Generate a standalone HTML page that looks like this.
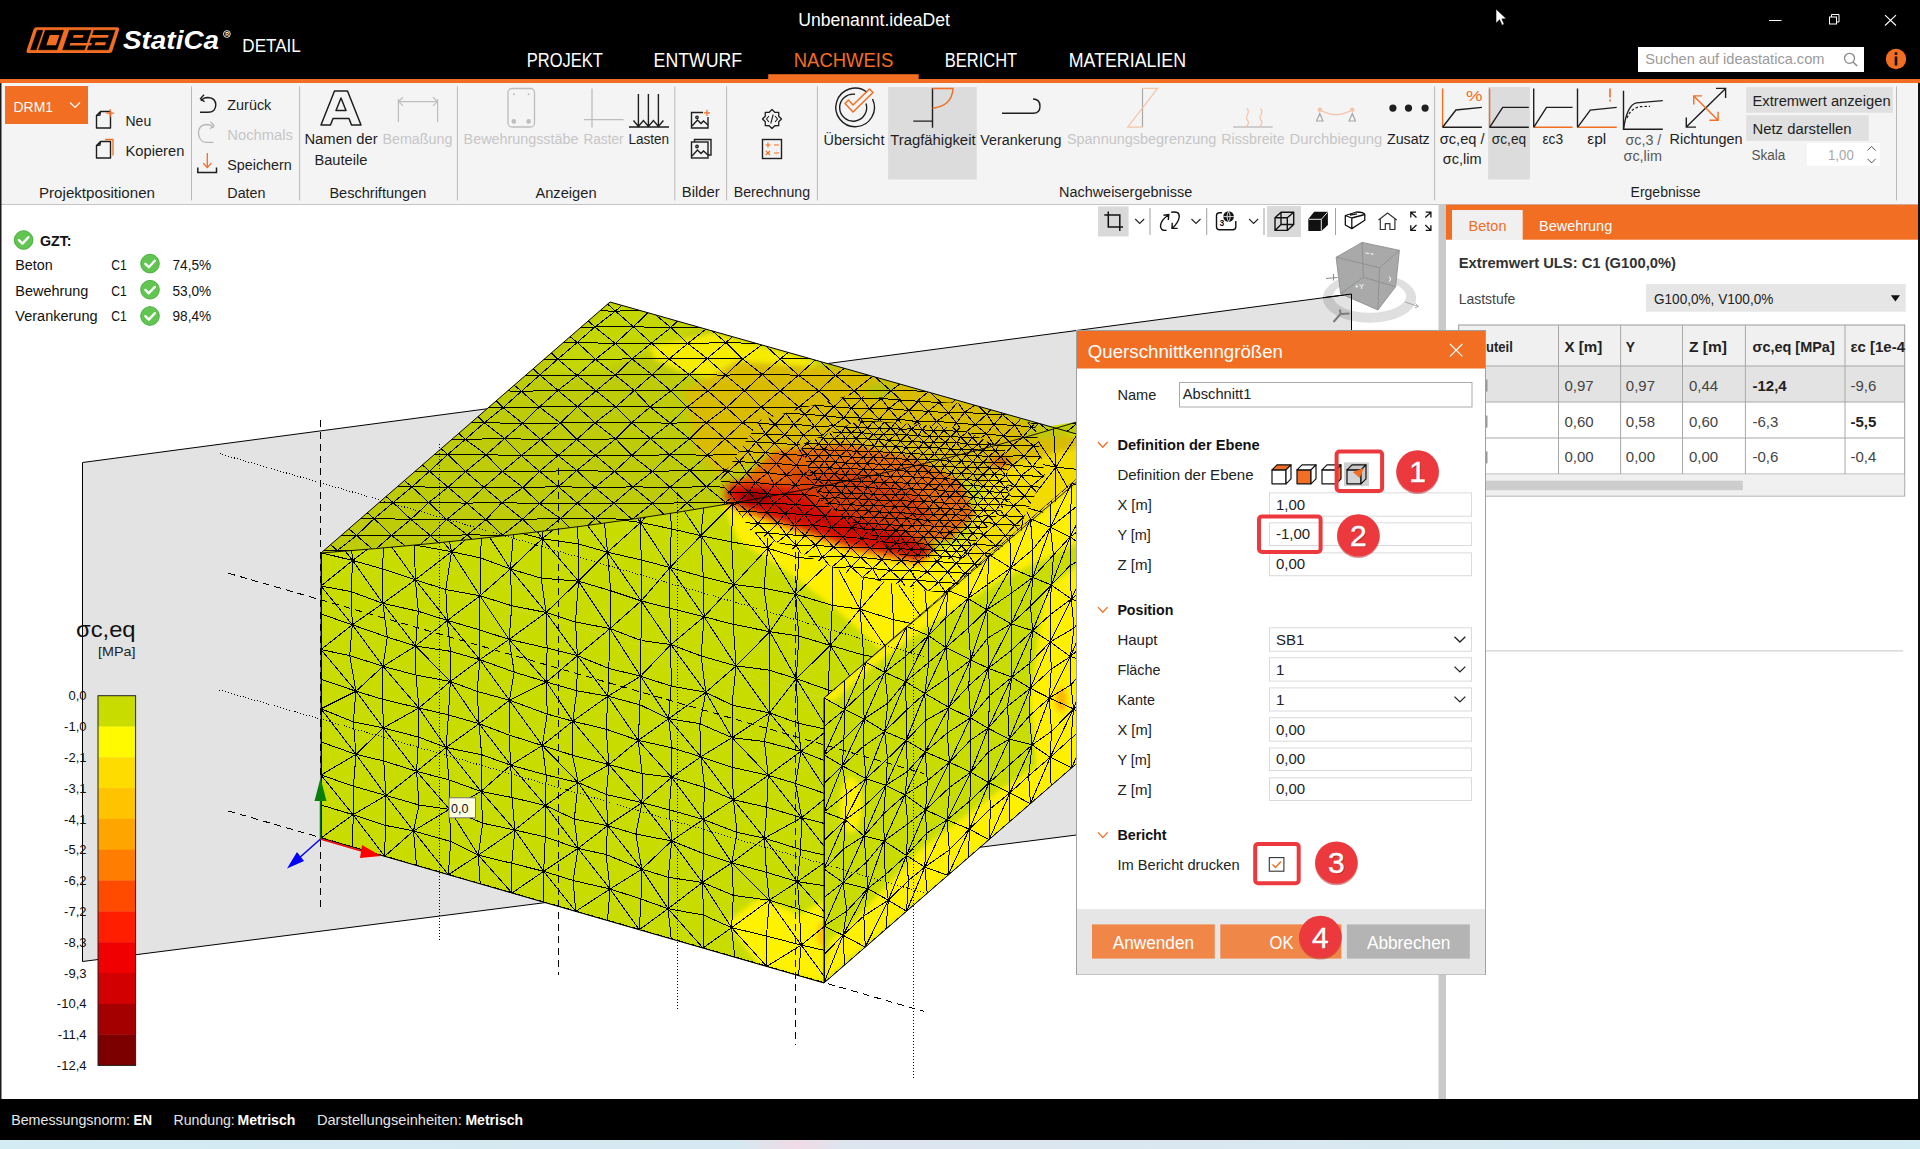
<!DOCTYPE html><html><head><meta charset="utf-8"><title>IDEA StatiCa Detail</title><style>html,body{margin:0;padding:0;width:1920px;height:1149px;overflow:hidden;background:#fff;font-family:"Liberation Sans",sans-serif}</style></head><body><svg width="1920" height="1149" viewBox="0 0 1920 1149" font-family="Liberation Sans, sans-serif" style="position:absolute;left:0;top:0;display:block"><rect x="0" y="0" width="1920" height="79" fill="#000" />
<rect x="0" y="79" width="1920" height="4" fill="#f26e22" />
<rect x="0" y="83" width="1920" height="121" fill="#f4f4f4" />
<rect x="0" y="204" width="1920" height="895" fill="#fff" />
<rect x="0" y="204" width="1920" height="1" fill="#c4c4c4" />
<rect x="0" y="1099" width="1920" height="41" fill="#000" />
<defs><linearGradient id="sb" x1="0" x2="1920" y1="0" y2="0" gradientUnits="userSpaceOnUse"><stop offset="0" stop-color="#d3ebf3"/><stop offset="0.385" stop-color="#d6e8f1"/><stop offset="0.415" stop-color="#f0dbe6"/><stop offset="0.44" stop-color="#dde5ef"/><stop offset="1" stop-color="#d3ebf3"/></linearGradient></defs>
<rect x="0" y="1140" width="1920" height="9" fill="url(#sb)" />
<path d="M37 27.2 L117 27.2 Q119.8 27.2 119 30 L112.3 51 Q111.7 52.9 109.5 52.9 L28.5 52.9 Q25.8 52.9 26.6 50.5 L33.5 29.5 Q34.2 27.2 37 27.2 Z" fill="#f26e22"/>
<path d="M37.20 30.3 L42.90 30.3 L36.31 49.8 L30.61 49.8 ZM45.20 30.3 L63.60 30.3 L57.01 49.8 L38.61 49.8 ZM69.30 30.3 L91.10 30.3 L84.51 49.8 L62.71 49.8 ZM93.90 30.3 L115.10 30.3 L108.51 49.8 L87.31 49.8 Z" fill="#000" stroke="#000" stroke-width="0.5" stroke-linejoin="round"/>
<path d="M49.80 34.9 L59.50 34.9 L56.02 45.2 L46.32 45.2 ZM73.90 34.9 L83.60 34.9 L82.62 37.8 L72.92 37.8 ZM70.40 42.9 L92.00 42.9 L91.12 45.5 L69.52 45.5 ZM90.00 34.9 L108.80 34.9 L107.82 37.8 L89.02 37.8 ZM95.60 42.3 L106.00 42.3 L105.02 45.2 L94.62 45.2 Z" fill="#f26e22"/>
<text x="123" y="49.3" font-size="26" fill="#fff" font-weight="bold" font-style="italic" textLength="96" lengthAdjust="spacingAndGlyphs">StatiCa</text>
<circle cx="226.9" cy="34" r="3.4" fill="none" stroke="#fff" stroke-width="0.9"/>
<text x="225.2" y="36.1" font-size="5.2" fill="#fff" font-weight="bold">R</text>
<text x="242.3" y="51.6" font-size="17.5" fill="#fff" textLength="58.5" lengthAdjust="spacingAndGlyphs">DETAIL</text>
<text x="798.2" y="26" font-size="17.5" fill="#fff" textLength="151.8" lengthAdjust="spacingAndGlyphs">Unbenannt.ideaDet</text>
<text x="526.8" y="67.2" font-size="20" fill="#fff" textLength="76.1" lengthAdjust="spacingAndGlyphs">PROJEKT</text>
<text x="653.6" y="67.2" font-size="20" fill="#fff" textLength="88.6" lengthAdjust="spacingAndGlyphs">ENTWURF</text>
<text x="793.75" y="67.2" font-size="20" fill="#f26e22" textLength="99.45" lengthAdjust="spacingAndGlyphs">NACHWEIS</text>
<text x="944.8" y="67.2" font-size="20" fill="#fff" textLength="72.4" lengthAdjust="spacingAndGlyphs">BERICHT</text>
<text x="1068.8" y="67.2" font-size="20" fill="#fff" textLength="117.2" lengthAdjust="spacingAndGlyphs">MATERIALIEN</text>
<rect x="768.2" y="74.2" width="150.5" height="5" fill="#f26e22" />
<line x1="1769" y1="20.5" x2="1781.5" y2="20.5" stroke="#fff" stroke-width="1" />
<rect x="1829.5" y="17" width="7" height="7" fill="none" stroke="#fff" stroke-width="1"/>
<path d="M1831.5 17 L1831.5 14.5 L1839 14.5 L1839 22 L1836.5 22" fill="none" stroke="#fff" stroke-width="1"/>
<path d="M1885 15.2 L1896 25.5 M1896 15.2 L1885 25.5" stroke="#fff" stroke-width="1.1"/>
<path d="M1496 9 L1496 23.2 L1499.6 19.7 L1502 25.2 L1504.2 24.3 L1501.9 18.9 L1506.3 18.7 Z" fill="#fff" stroke="#000" stroke-width="0.6"/>
<rect x="1638" y="47" width="226" height="25" fill="#fff" />
<text x="1645.3" y="64.4" font-size="14.5" fill="#9a9a9a" textLength="179.1" lengthAdjust="spacingAndGlyphs">Suchen auf ideastatica.com</text>
<circle cx="1849.5" cy="58.3" r="5" fill="none" stroke="#888" stroke-width="1.3"/><line x1="1853" y1="62" x2="1857.2" y2="66" stroke="#888" stroke-width="1.5"/>
<circle cx="1896" cy="59" r="10.2" fill="#f26e22"/>
<rect x="1894.7" y="56.5" width="2.6" height="9" fill="#111" />
<rect x="1894.7" y="52.3" width="2.6" height="2.6" fill="#111" />
<rect x="191.0" y="86.4" width="1" height="114" fill="#b9b9b9" />
<rect x="299.1" y="86.4" width="1" height="114" fill="#b9b9b9" />
<rect x="456.9" y="86.4" width="1" height="114" fill="#b9b9b9" />
<rect x="674.3" y="86.4" width="1" height="114" fill="#b9b9b9" />
<rect x="726.1" y="86.4" width="1" height="114" fill="#b9b9b9" />
<rect x="816.9" y="86.4" width="1" height="114" fill="#b9b9b9" />
<rect x="1434.1" y="86.4" width="1" height="114" fill="#b9b9b9" />
<rect x="1896.0" y="86.4" width="1" height="114" fill="#b9b9b9" />
<rect x="5" y="86" width="83" height="38" fill="#f26e22" />
<text x="13.5" y="111.5" font-size="15" fill="#fff" textLength="39.5" lengthAdjust="spacingAndGlyphs">DRM1</text>
<path d="M70 102.5 L75 107.5 L80 102.5" fill="none" stroke="#fff" stroke-width="1.2"/>
<path d="M96.5 128 L96.5 115.5 L100.5 111.5 L110.5 111.5 L110.5 128 Z M96.5 115.5 L100 115 L100.5 111.5" fill="none" stroke="#1e1e1e" stroke-width="1.4" stroke-linejoin="round"/>
<path d="M110.2 109.2 L110.2 117.2 M106.2 113.2 L114.2 113.2" stroke="#f26e22" stroke-width="1.3"/>
<path d="M96.5 158 L96.5 145.5 L100.5 141.5 L110.5 141.5 L110.5 158 Z M96.5 145.5 L100 145 L100.5 141.5" fill="none" stroke="#1e1e1e" stroke-width="1.4" stroke-linejoin="round"/>
<path d="M105 139.5 L113 139.5 L113 155.5" fill="none" stroke="#f26e22" stroke-width="1.3"/>
<text x="125.5" y="125.5" font-size="14" fill="#1e1e1e" textLength="25.7" lengthAdjust="spacingAndGlyphs">Neu</text>
<text x="125.5" y="155.6" font-size="14" fill="#1e1e1e" textLength="58.8" lengthAdjust="spacingAndGlyphs">Kopieren</text>
<text x="39" y="197.6" font-size="14" fill="#1e1e1e" textLength="116" lengthAdjust="spacingAndGlyphs">Projektpositionen</text>
<path d="M201 101 Q203 97.5 208 97.5 Q215.8 98 215.8 105 Q215.5 112.3 208 112.3 L200 112.3" fill="none" stroke="#1e1e1e" stroke-width="1.4"/>
<path d="M204 94.8 L200.5 98.6 L204.5 101.8" fill="none" stroke="#1e1e1e" stroke-width="1.4"/>
<path d="M213.6 128 Q211.5 124.5 206.5 124.5 Q198.5 125 198.5 133 Q199 142.3 206.5 142.3 L213.5 142.3" fill="none" stroke="#b8b8b8" stroke-width="1.3"/>
<path d="M210.5 121.8 L214 125.6 L210 128.8" fill="none" stroke="#b8b8b8" stroke-width="1.3"/>
<path d="M197.8 167.5 L197.8 172.6 L216.5 172.6 L216.5 167.5" fill="none" stroke="#1e1e1e" stroke-width="1.5"/>
<path d="M207.3 153 L207.3 167.5 M203.3 163.3 L207.3 167.6 L211.3 163.3" fill="none" stroke="#f26e22" stroke-width="1.3"/>
<text x="227.3" y="109.9" font-size="14" fill="#1e1e1e" textLength="44.0" lengthAdjust="spacingAndGlyphs">Zurück</text>
<text x="227.3" y="139.8" font-size="14" fill="#c6c6c6" textLength="65.5" lengthAdjust="spacingAndGlyphs">Nochmals</text>
<text x="227.3" y="169.8" font-size="14" fill="#1e1e1e" textLength="64.5" lengthAdjust="spacingAndGlyphs">Speichern</text>
<text x="227.3" y="197.7" font-size="14" fill="#1e1e1e" textLength="38.2" lengthAdjust="spacingAndGlyphs">Daten</text>
<path d="M334.5 91 L347.5 91 L361 125 L351.5 125 L349 118.5 L333 118.5 L330.5 125 L321 125 Z M336 110.5 L346 110.5 L341 98 Z" fill="none" stroke="#1e1e1e" stroke-width="1.5" stroke-linejoin="round"/>
<path d="M398.4 99 L398.4 122 M437.6 99 L437.6 122 M398.4 101.6 L437.6 101.6 M403 97.3 L398.6 101.6 L403 105.9 M433 97.3 L437.4 101.6 L433 105.9" fill="none" stroke="#bdbdbd" stroke-width="1.2"/>
<text x="304.4" y="144.4" font-size="14" fill="#1e1e1e" textLength="73.2" lengthAdjust="spacingAndGlyphs">Namen der</text>
<text x="314.4" y="164.6" font-size="14" fill="#1e1e1e" textLength="53.0" lengthAdjust="spacingAndGlyphs">Bauteile</text>
<text x="382.4" y="144.4" font-size="14" fill="#c6c6c6" textLength="70.0" lengthAdjust="spacingAndGlyphs">Bemaßung</text>
<text x="329.4" y="197.6" font-size="14" fill="#1e1e1e" textLength="97.0" lengthAdjust="spacingAndGlyphs">Beschriftungen</text>
<rect x="508" y="88.5" width="26.5" height="38.5" rx="4" fill="none" stroke="#bdbdbd" stroke-width="1.3"/>
<g fill="#bdbdbd"><circle cx="514" cy="94.2" r="1"/><circle cx="528.6" cy="94.2" r="1"/><circle cx="513.8" cy="121.4" r="2.3"/><circle cx="528.6" cy="121.4" r="2.3"/></g>
<path d="M592 88.5 L592 127.5 M584 119.7 L623.6 119.7" stroke="#bdbdbd" stroke-width="1.3"/>
<path d="M629 127 L669 127 M638.4 94 L638.4 126.5 M648.4 94 L648.4 126.5 M658.4 94 L658.4 126.5 M633.5 120.5 L638.4 126.5 L643.4 120.5 L648.4 126.5 L653.4 120.5 L658.4 126.5 L663.4 120.5" fill="none" stroke="#1e1e1e" stroke-width="1.4"/>
<text x="463.6" y="144.4" font-size="14" fill="#c6c6c6" textLength="114.8" lengthAdjust="spacingAndGlyphs">Bewehrungsstäbe</text>
<text x="583.4" y="144.4" font-size="14" fill="#c6c6c6" textLength="40.2" lengthAdjust="spacingAndGlyphs">Raster</text>
<text x="628.4" y="144.4" font-size="14" fill="#1e1e1e" textLength="40.8" lengthAdjust="spacingAndGlyphs">Lasten</text>
<text x="535.4" y="197.6" font-size="14" fill="#1e1e1e" textLength="61.2" lengthAdjust="spacingAndGlyphs">Anzeigen</text>
<g fill="none" stroke="#1e1e1e" stroke-width="1.4"><path d="M703 112.5 L691.5 112.5 L691.5 128 L708 128 L708 117"/><path d="M692 126 L697.5 120 L701 123.5 L703.5 121 L708 125"/><circle cx="697" cy="117.3" r="1.2"/><rect x="691.5" y="142" width="16.5" height="16" /><path d="M694.5 142 L694.5 139.5 L711 139.5 L711 155 L708 155"/><path d="M692 156 L697.5 150 L701 153.5 L703.5 151 L708 155"/><circle cx="697" cy="146.5" r="1.2"/></g>
<path d="M707 109.8 L707 116 M703.9 112.9 L710.1 112.9" stroke="#f26e22" stroke-width="1.2"/>
<text x="681.8" y="197.4" font-size="14" fill="#1e1e1e" textLength="38.0" lengthAdjust="spacingAndGlyphs">Bilder</text>
<path d="M781.50 119.00 L778.74 121.79 L778.72 125.72 L774.79 125.74 L772.00 128.50 L769.21 125.74 L765.28 125.72 L765.26 121.79 L762.50 119.00 L765.26 116.21 L765.28 112.28 L769.21 112.26 L772.00 109.50 L774.79 112.26 L778.72 112.28 L778.74 116.21 Z" fill="none" stroke="#1e1e1e" stroke-width="1.3" stroke-linejoin="round"/>
<path d="M769 116 L766.5 119 L769 122 M775 116 L777.5 119 L775 122 M773.2 114.5 L770.8 123.5" fill="none" stroke="#1e1e1e" stroke-width="1.1"/>
<rect x="762.5" y="139.5" width="19" height="19" fill="none" stroke="#1e1e1e" stroke-width="1.4"/>
<path d="M765.5 145 L770.5 145 M768 142.5 L768 147.5 M774 145 L779 145 M765.8 150.8 L770 155 M770 150.8 L765.8 155 M774 153 L779 153 M776.5 150.8 L776.5 151 M776.5 155 L776.5 155.2" fill="none" stroke="#f26e22" stroke-width="1.2"/>
<text x="733.8" y="197.4" font-size="14" fill="#1e1e1e" textLength="76.3" lengthAdjust="spacingAndGlyphs">Berechnung</text>
<rect x="888.1" y="87.1" width="88.7" height="92.4" fill="#dcdcdc" />
<path d="M872.5 99 A19.3 19.3 0 1 1 867 92.2" fill="none" stroke="#1e1e1e" stroke-width="1.4"/>
<path d="M866 103.5 A13.5 13.5 0 1 1 855 94.3" fill="none" stroke="#1e1e1e" stroke-width="1.4"/>
<path d="M845 103.5 L853 112 L873 92.5 L869.5 89 L853 105 L848.5 100 Z" fill="none" stroke="#f26e22" stroke-width="1.5" stroke-linejoin="round"/>
<path d="M932.5 88.3 L932.5 127.7 M913.3 121.1 L932.5 121.1" stroke="#1e1e1e" stroke-width="1.4"/>
<path d="M932.5 88.5 L953 88.5 Q952 106 932.5 108.3" fill="none" stroke="#f26e22" stroke-width="1.4"/>
<path d="M1002 113.3 L1033 113.3 Q1040 113.3 1040 106.2 Q1040 99 1033 99" fill="none" stroke="#1e1e1e" stroke-width="1.4"/>
<path d="M1142.5 88.4 L1142.5 127.1" stroke="#a8a8a8" stroke-width="1.2"/>
<path d="M1142.5 88.4 L1157.6 88.4 L1127.7 127.1 L1142.5 127.1" fill="none" stroke="#f5c3a6" stroke-width="1.2"/>
<path d="M1233.2 127 L1272.7 127" stroke="#a8a8a8" stroke-width="1.2"/>
<path d="M1247 108.5 Q1249.5 111 1247.5 114.5 Q1245.5 118 1248 121 Q1249.5 124 1245.5 127 M1260.5 108.5 Q1263 111 1261 114.5 Q1259 118 1261.5 121 Q1263 124 1259 127" fill="none" stroke="#f5c3a6" stroke-width="1.2"/>
<path d="M1319.8 109.7 Q1336 119.5 1352.3 109.7" fill="none" stroke="#f5c3a6" stroke-width="1.3"/>
<circle cx="1319.8" cy="109.7" r="2.2" fill="#f5c3a6"/><circle cx="1352.3" cy="109.7" r="2.2" fill="#f5c3a6"/>
<path d="M1319.8 113.5 L1316.5 121 L1323 121 Z M1352.3 113.5 L1349 121 L1355.5 121 Z" fill="none" stroke="#a8a8a8" stroke-width="1.2"/>
<g fill="#1e1e1e"><circle cx="1392.9" cy="108.1" r="3.6"/><circle cx="1408.5" cy="108.1" r="3.6"/><circle cx="1425.1" cy="108.1" r="3.6"/></g>
<text x="823.5" y="144.8" font-size="14" fill="#1e1e1e" textLength="60.9" lengthAdjust="spacingAndGlyphs">Übersicht</text>
<text x="890.2" y="144.8" font-size="14" fill="#1e1e1e" textLength="85.4" lengthAdjust="spacingAndGlyphs">Tragfähigkeit</text>
<text x="980.3" y="144.8" font-size="14" fill="#1e1e1e" textLength="81.1" lengthAdjust="spacingAndGlyphs">Verankerung</text>
<text x="1066.9" y="144.4" font-size="14" fill="#c6c6c6" textLength="149.4" lengthAdjust="spacingAndGlyphs">Spannungsbegrenzung</text>
<text x="1221.3" y="144.4" font-size="14" fill="#c6c6c6" textLength="63.3" lengthAdjust="spacingAndGlyphs">Rissbreite</text>
<text x="1289.6" y="144.4" font-size="14" fill="#c6c6c6" textLength="92.6" lengthAdjust="spacingAndGlyphs">Durchbiegung</text>
<text x="1387" y="144.4" font-size="14" fill="#1e1e1e" textLength="42.7" lengthAdjust="spacingAndGlyphs">Zusatz</text>
<text x="1059" y="197.3" font-size="14" fill="#1e1e1e" textLength="133.2" lengthAdjust="spacingAndGlyphs">Nachweisergebnisse</text>
<rect x="1488.1" y="87" width="41.8" height="92.5" fill="#dcdcdc" />
<path d="M1442.6 88.5 L1442.6 127.3" stroke="#f26e22" stroke-width="1.4"/>
<path d="M1442.6 127.3 L1481.9 127.3" stroke="#1e1e1e" stroke-width="1.4"/>
<path d="M1442.6 127.3 L1455.9 110 L1481.9 107.4" fill="none" stroke="#1e1e1e" stroke-width="1.4"/>
<text x="1466" y="101" font-size="14.5" fill="#f26e22" textLength="16.5" lengthAdjust="spacingAndGlyphs">%</text>
<path d="M1489.6 88.5 L1489.6 127.3" stroke="#f26e22" stroke-width="1.4"/>
<path d="M1489.6 127.3 L1528.8 127.3" stroke="#1e1e1e" stroke-width="1.4"/>
<path d="M1489.6 127.3 L1502.7 107.4 L1528.8 107.4" fill="none" stroke="#1e1e1e" stroke-width="1.4"/>
<path d="M1533.7 88.5 L1533.7 127.3" stroke="#1e1e1e" stroke-width="1.4"/>
<path d="M1533.7 127.3 L1572.6 127.3" stroke="#f26e22" stroke-width="1.4"/>
<path d="M1533.7 127.3 L1546.5 107.4 L1572.6 107.4" fill="none" stroke="#1e1e1e" stroke-width="1.4"/>
<path d="M1577.5 88.5 L1577.5 127.3" stroke="#1e1e1e" stroke-width="1.4"/>
<path d="M1577.5 127.3 L1616.7 127.3" stroke="#f26e22" stroke-width="1.4"/>
<path d="M1577.5 127.3 L1590.3 110.1 L1616.7 107.4" fill="none" stroke="#1e1e1e" stroke-width="1.4"/>
<path d="M1610 88.5 L1610 97.5 M1610 99.5 L1610 101.5" stroke="#f26e22" stroke-width="1.6"/>
<path d="M1623.5 90.8 L1623.5 129.3 L1662.8 129.3" fill="none" stroke="#1e1e1e" stroke-width="1.4"/>
<path d="M1623.5 129.3 Q1627 105 1636.4 102.9 L1662.8 100.6" fill="none" stroke="#1e1e1e" stroke-width="1.4"/>
<path d="M1627 118 Q1631 108 1640 106.6 L1650 106.4" fill="none" stroke="#1e1e1e" stroke-width="1.2" stroke-dasharray="2.5 2"/>
<path d="M1686.3 127.1 L1725.6 88.4 M1686.3 117.5 L1686.3 127.1 L1696 127.1 M1716 88.4 L1725.6 88.4 L1725.6 98" fill="none" stroke="#1e1e1e" stroke-width="1.4"/>
<path d="M1693.8 95.9 L1718.1 120.3 M1693.8 104.5 L1693.8 95.9 L1702 95.9 M1718.1 111.7 L1718.1 120.3 L1709.5 120.3" fill="none" stroke="#f26e22" stroke-width="1.4"/>
<text x="1439.7" y="144.4" font-size="14" fill="#1e1e1e" textLength="44.9" lengthAdjust="spacingAndGlyphs">σc,eq /</text>
<text x="1442.8" y="164" font-size="14" fill="#1e1e1e" textLength="38.8" lengthAdjust="spacingAndGlyphs">σc,lim</text>
<text x="1491.8" y="144.4" font-size="14" fill="#1e1e1e" textLength="34.3" lengthAdjust="spacingAndGlyphs">σc,eq</text>
<text x="1542.4" y="144.4" font-size="14" fill="#1e1e1e" textLength="20.7" lengthAdjust="spacingAndGlyphs">εc3</text>
<text x="1587.3" y="144.4" font-size="14" fill="#1e1e1e" textLength="18.9" lengthAdjust="spacingAndGlyphs">εpl</text>
<text x="1625.5" y="145.2" font-size="14" fill="#5a5a5a" textLength="35.8" lengthAdjust="spacingAndGlyphs">σc,3 /</text>
<text x="1623.5" y="161.3" font-size="14" fill="#5a5a5a" textLength="38.5" lengthAdjust="spacingAndGlyphs">σc,lim</text>
<text x="1669.6" y="144.4" font-size="14" fill="#1e1e1e" textLength="72.9" lengthAdjust="spacingAndGlyphs">Richtungen</text>
<rect x="1746.25" y="87.1" width="146.65" height="25.65" fill="#e0e0e0" />
<rect x="1746.25" y="115.25" width="122.5" height="25.65" fill="#e0e0e0" />
<text x="1752.5" y="106.25" font-size="14" fill="#1e1e1e" textLength="138.1" lengthAdjust="spacingAndGlyphs">Extremwert anzeigen</text>
<text x="1752.5" y="133.75" font-size="14" fill="#1e1e1e" textLength="99.0" lengthAdjust="spacingAndGlyphs">Netz darstellen</text>
<text x="1751.5" y="159.6" font-size="14" fill="#555" textLength="33.75" lengthAdjust="spacingAndGlyphs">Skala</text>
<rect x="1806.9" y="143" width="72.85" height="22.9" fill="#fff" />
<text x="1828" y="159.6" font-size="14" fill="#a8a8a8" textLength="25.75" lengthAdjust="spacingAndGlyphs">1,00</text>
<path d="M1867.5 150.5 L1871.6 146.4 L1875.7 150.5 M1867.5 158.8 L1871.6 162.9 L1875.7 158.8" fill="none" stroke="#555" stroke-width="1"/>
<text x="1630.6" y="197.3" font-size="14" fill="#1e1e1e" textLength="70.0" lengthAdjust="spacingAndGlyphs">Ergebnisse</text>
<rect x="0" y="83" width="1.5" height="1016" fill="#1a1a1a" />
<path d="M82.5 462.5 L1351.5 294 L1351.5 800 L82.5 961.5 Z" fill="#e3e3e3" stroke="#000" stroke-width="1"/>
<defs><clipPath id="cr1"><path d="M321 553 L610 302 L1080 435 L1080 421 Q760 520 321 553 Z"/></clipPath><clipPath id="cr2"><polygon points="321,553 1080,421 1080,481 824,698"/></clipPath><clipPath id="cfront"><polygon points="321,553 824,698 824,983 321,838"/></clipPath><clipPath id="cright"><polygon points="824,698 1113,447 1113,732 824,983"/></clipPath><filter id="bl" x="-5%" y="-5%" width="110%" height="110%"><feGaussianBlur stdDeviation="2.5"/></filter><filter id="bl2" x="-5%" y="-5%" width="110%" height="110%"><feGaussianBlur stdDeviation="4"/></filter></defs><polygon points="321,553 824,698 824,983 321,838" fill="#c8dc00" /><polygon points="824,698 1113,447 1113,732 824,983" fill="#c8dc00" /><polygon points="321,553 1080,421 1080,481 824,698" fill="#c8dc00" /><path d="M321 553 L610 302 L1080 435 L1080 421 Q760 520 321 553 Z" fill="#becb08"/><g clip-path="url(#cfront)"><g filter="url(#bl)"><polygon points="726,922 760,898 800,915 824,900 824,983 760,966" fill="#fff200" /><ellipse cx="822" cy="935" rx="5" ry="12" fill="#ffc000"/></g></g><g clip-path="url(#cright)"><g filter="url(#bl)"><polygon points="820,700 1085,475 1085,540 1000,580 930,625 870,668 835,700" fill="#fff000" /><polygon points="1045,590 1085,560 1085,770 1040,800 1030,700" fill="#fff000" /><polygon points="820,985 1085,760 1085,735 1000,790 920,850 850,925 830,940" fill="#fff000" /><ellipse cx="851" cy="805" rx="11" ry="28" fill="#fff000"/><ellipse cx="1061" cy="700" rx="6" ry="12" fill="#ffb400"/></g></g><defs><clipPath id="ctopall"><polygon points="321,553 610,302 1080,435 1080,481 824,698"/></clipPath></defs><g clip-path="url(#ctopall)"><g filter="url(#bl)"><polygon points="611,302 700,328 660,345 600,372 545,372" fill="#c5d700" /><polygon points="649,347 712,333 777,350 820,362 795,372 750,370 712,378 682,372 655,360" fill="#f5ec00" /><polygon points="685,390 738,361 845,369 953,397 1042,428 1085,440 1085,504 1024,511 988,490 917,458 845,443 774,451 721,476 696,451" fill="#d9bb00" /><ellipse cx="880" cy="390" rx="14" ry="8" fill="#bcc20e"/><ellipse cx="1045" cy="433" rx="22" ry="6" fill="#c0c80a"/><polygon points="721,500 810,531 917,559 1006,524 1085,474 1085,492 953,600 881,650 838,611 792,575 738,540" fill="#fff000" /><ellipse cx="990" cy="592" rx="30" ry="14" fill="#f0cc00"/><polygon points="990,470 1085,445 1085,500 1000,560 960,560" fill="#f2dc00" /><polygon points="731,490 774,451 845,443 917,458 960,480 975,515 950,540 917,540 845,518 774,504" fill="#e26a00" /></g><g filter="url(#bl2)"><polygon points="728,483 790,486 870,515 935,546 920,562 850,548 760,516 726,502" fill="#d81000" /><polygon points="780,470 860,470 915,490 935,520 900,530 820,505" fill="#d84000" /><ellipse cx="755" cy="497" rx="15" ry="7" fill="#8c0000"/><path d="M765 502 L930 553" stroke="#b80000" stroke-width="6"/><ellipse cx="1000" cy="462" rx="10" ry="4" fill="#d83000"/></g></g><defs><clipPath id="nothot1"><path clip-rule="evenodd" d="M-10 -10 H2000 V1200 H-10 Z M720 480 L760 420 L850 395 L980 405 L1035 425 L1045 475 L1010 545 L950 595 L850 575 L750 530 Z"/></clipPath><clipPath id="nothot2"><path clip-rule="evenodd" d="M-10 -10 H2000 V1200 H-10 Z M800 445 L860 420 L960 428 L1005 450 L1010 500 L985 530 L960 560 L900 555 L820 500 Z"/></clipPath><clipPath id="hot1"><polygon points="720,480 760,420 850,395 980,405 1035,425 1045,475 1010,545 950,595 850,575 750,530"/></clipPath><clipPath id="hot2"><polygon points="800,445 860,420 960,428 1005,450 1010,500 985,530 960,560 900,555 820,500"/></clipPath></defs><defs><clipPath id="cfs"><path d="M321 553 Q760 520 1080 421 L1080 481 L824 698 L824 983 L321 838 Z"/></clipPath></defs><g clip-path="url(#cfs)"><g clip-path="url(#nothot1)"><path d="M321 838 352.8 847.2M352.8 847.2 384.7 856.3M384.7 856.3 416.5 865.5M416.5 865.5 448.3 874.7M448.3 874.7 480.2 883.8M480.2 883.8 512 893M512 893 543.8 902.2M543.8 902.2 575.7 911.3M575.7 911.3 607.5 920.5M607.5 920.5 639.3 929.7M639.3 929.7 671.2 938.8M671.2 938.8 703 948M703 948 734.8 957.2M734.8 957.2 766.7 966.4M766.7 966.4 798.5 975.5M798.5 975.5 830.3 984.7M830.3 984.7 862.2 993.9M862.2 993.9 894 1003M894 1003 925.8 1012.2M925.8 1012.2 957.7 1021.4M957.7 1021.4 989.5 1030.5M989.5 1030.5 1021.3 1039.7M1021.3 1039.7 1053.2 1048.9M1053.2 1048.9 1085 1058M321 805 353.1 814.7M353.1 814.7 385.4 825.4M385.4 825.4 413.5 830.9M413.5 830.9 450.7 841.5M450.7 841.5 478.3 855.1M478.3 855.1 511.8 863.3M511.8 863.3 543.7 871.3M543.7 871.3 573.2 880.5M573.2 880.5 610.1 889M610.1 889 641 899M641 899 668.1 908.7M668.1 908.7 703.6 915.1M703.6 915.1 731.6 927.7M731.6 927.7 766.5 936M766.5 936 801.2 945.1M801.2 945.1 833.3 952.4M833.3 952.4 864.3 961.8M864.3 961.8 897 973.6M897 973.6 923 978.3M923 978.3 955.7 992.5M955.7 992.5 989.1 999.6M989.1 999.6 1019.9 1008M1019.9 1008 1052.4 1016.3M1052.4 1016.3 1085 1026.3M321 775 353.4 786.2M353.4 786.2 385.9 795.5M385.9 795.5 419 805M419 805 449.5 809.3M449.5 809.3 482.7 823.2M482.7 823.2 514.8 830M514.8 830 545.3 837M545.3 837 578 848.4M578 848.4 606 854.5M606 854.5 641.8 869.2M641.8 869.2 668.3 877.3M668.3 877.3 702.4 882.5M702.4 882.5 733.4 895.4M733.4 895.4 769.3 900.2M769.3 900.2 799.3 909.4M799.3 909.4 831.9 920.3M831.9 920.3 864.8 933.3M864.8 933.3 894 942.6M894 942.6 924.5 946.3M924.5 946.3 958.4 955.1M958.4 955.1 987.4 966.6M987.4 966.6 1022.1 974.2M1022.1 974.2 1050 987.7M1050 987.7 1085 994.6M321 742 356 754.4M356 754.4 383.8 761M383.8 761 416.6 771.3M416.6 771.3 449 779.9M449 779.9 481 791.4M481 791.4 512 797.5M512 797.5 545.4 805.5M545.4 805.5 574.3 819.1M574.3 819.1 607.6 825.7M607.6 825.7 635.9 834.1M635.9 834.1 671.7 840.9M671.7 840.9 703.8 853.7M703.8 853.7 731.8 862.8M731.8 862.8 766.4 872.3M766.4 872.3 797.5 881.7M797.5 881.7 832 886.7M832 886.7 859.1 899.8M859.1 899.8 897.2 906.4M897.2 906.4 925.5 917.6M925.5 917.6 956.4 925.4M956.4 925.4 988.2 934.6M988.2 934.6 1022 943.4M1022 943.4 1052.3 955.4M1052.3 955.4 1085 962.9M321 708.8 353.3 721.8M353.3 721.8 383.3 727.9M383.3 727.9 418.6 737.1M418.6 737.1 446.1 747.5M446.1 747.5 481.6 754.7M481.6 754.7 510.8 765.2M510.8 765.2 546.2 775M546.2 775 578.2 782.6M578.2 782.6 606.4 794.6M606.4 794.6 642 802.6M642 802.6 669.2 809.8M669.2 809.8 703.2 819.4M703.2 819.4 737 832.4M737 832.4 764.5 838.2M764.5 838.2 800.7 849.6M800.7 849.6 832.5 857M832.5 857 859.6 865.8M859.6 865.8 896.1 874.9M896.1 874.9 924.8 884.9M924.8 884.9 957.1 894M957.1 894 992.4 901.7M992.4 901.7 1017.9 915.6M1017.9 915.6 1055.8 925M1055.8 925 1085 931.2M321 679.2 356 691.2M356 691.2 382.7 699.3M382.7 699.3 418.9 708M418.9 708 448.5 714.9M448.5 714.9 479.1 723.7M479.1 723.7 509 735M509 735 542.3 745.5M542.3 745.5 572.5 755.3M572.5 755.3 608.9 764.6M608.9 764.6 642.1 773.6M642.1 773.6 671.7 777.4M671.7 777.4 704.7 787.5M704.7 787.5 733.4 799.7M733.4 799.7 766.8 807.3M766.8 807.3 801.6 817.7M801.6 817.7 829.2 824.7M829.2 824.7 864.7 835.2M864.7 835.2 896 843.6M896 843.6 923.7 853.9M923.7 853.9 959.9 860.9M959.9 860.9 991.5 874.6M991.5 874.6 1023.5 883.1M1023.5 883.1 1049.7 891.1M1049.7 891.1 1085 899.5M321 649.6 349.7 655.6M349.7 655.6 383 666.3M383 666.3 416 675.1M416 675.1 450.3 681.5M450.3 681.5 477.1 691.4M477.1 691.4 509.4 700.2M509.4 700.2 547.2 714.1M547.2 714.1 572.8 721.2M572.8 721.2 606.2 729.2M606.2 729.2 638.3 740.4M638.3 740.4 671.8 747.8M671.8 747.8 700.8 756.8M700.8 756.8 732.2 767.3M732.2 767.3 768.2 775.4M768.2 775.4 795.6 783.4M795.6 783.4 829.4 795.1M829.4 795.1 864.1 802.9M864.1 802.9 896.1 813.6M896.1 813.6 925.4 821.2M925.4 821.2 957.6 832.4M957.6 832.4 988.9 841.5M988.9 841.5 1021.1 848M1021.1 848 1053.4 859.8M1053.4 859.8 1085 867.8M321 614 352.3 624.8M352.3 624.8 387.3 637.1M387.3 637.1 415.6 646M415.6 646 450.4 651.3M450.4 651.3 479.9 659.7M479.9 659.7 514.2 672.1M514.2 672.1 546.5 682M546.5 682 576.8 690.8M576.8 690.8 607.9 696.2M607.9 696.2 639.9 704.8M639.9 704.8 668.7 718.6M668.7 718.6 699.8 723.7M699.8 723.7 732 737.6M732 737.6 764.4 741.6M764.4 741.6 800.9 751.3M800.9 751.3 832.7 763.8M832.7 763.8 864.5 774.7M864.5 774.7 894.6 782.9M894.6 782.9 922.6 791.9M922.6 791.9 957.7 800.8M957.7 800.8 986.7 810.1M986.7 810.1 1024.4 815.2M1024.4 815.2 1051.9 827.3M1051.9 827.3 1085 836.1M321 586 351 591.6M351 591.6 382.9 603.4M382.9 603.4 418.3 611.3M418.3 611.3 447.4 620.5M447.4 620.5 479.1 629.7M479.1 629.7 509.1 639.4M509.1 639.4 547.1 648.1M547.1 648.1 577.4 655.7M577.4 655.7 608.8 668.4M608.8 668.4 640.6 676.2M640.6 676.2 671.1 686.1M671.1 686.1 705.8 692.3M705.8 692.3 732 705.1M732 705.1 769.6 712.9M769.6 712.9 798.1 723.2M798.1 723.2 828.1 729.7M828.1 729.7 860.1 740.8M860.1 740.8 892.7 747.8M892.7 747.8 927.2 761.3M927.2 761.3 956.2 769M956.2 769 988.9 779M988.9 779 1021.9 784.7M1021.9 784.7 1051.2 792.4M1051.2 792.4 1085 804.4M321 552.7 352.7 560.5M352.7 560.5 382.4 568.9M382.4 568.9 415.3 579.8M415.3 579.8 445.8 589.6M445.8 589.6 480 595.8M480 595.8 511.8 605.7M511.8 605.7 546.1 612.5M546.1 612.5 575.5 622M575.5 622 610 628.6M610 628.6 641 640.5M641 640.5 670.9 644.6M670.9 644.6 701.1 656M701.1 656 736.1 665.9M736.1 665.9 769.1 670.1M769.1 670.1 796.3 678.7M796.3 678.7 828.1 689.9M828.1 689.9 864.7 699.6M864.7 699.6 892.3 707.9M892.3 707.9 924.5 713.7M924.5 713.7 959.3 720.2M959.3 720.2 986.6 733.2M986.6 733.2 1019.9 738.8M1019.9 738.8 1053.7 749.2M1053.7 749.2 1085 756.7M321 521 349.4 527.8M349.4 527.8 384.2 536.6M384.2 536.6 414.5 545M414.5 545 451.5 551.7M451.5 551.7 480.5 557.9M480.5 557.9 510.4 569M510.4 569 541.1 578.1M541.1 578.1 578.5 581.2M578.5 581.2 610.6 590.7M610.6 590.7 641.2 600.9M641.2 600.9 669.7 608.2M669.7 608.2 704.1 616.8M704.1 616.8 733.2 624.3M733.2 624.3 769.9 631.7M769.9 631.7 798.8 636.1M798.8 636.1 830.3 645.4M830.3 645.4 863.7 655.2M863.7 655.2 894.5 660M894.5 660 926.9 670.6M926.9 670.6 955.4 680M955.4 680 990.6 683.2M990.6 683.2 1024.4 691.1M1024.4 691.1 1052 702.4M1052 702.4 1085 708.9M321 489.3 353.5 496.8M353.5 496.8 385.7 503.4M385.7 503.4 415.2 508.8M415.2 508.8 445.3 519.2M445.3 519.2 481.9 525.4M481.9 525.4 513.7 531.4M513.7 531.4 542.2 538.7M542.2 538.7 578.3 543.9M578.3 543.9 607.5 552.2M607.5 552.2 641.2 560M641.2 560 670 567.5M670 567.5 703.3 576.9M703.3 576.9 733.8 584.5M733.8 584.5 764 588.2M764 588.2 795.7 594.4M795.7 594.4 832.3 605.3M832.3 605.3 860 609.2M860 609.2 893.4 619.7M893.4 619.7 928 626.9M928 626.9 958.3 630.4M958.3 630.4 988.8 637.9M988.8 637.9 1021.5 647.3M1021.5 647.3 1051.1 652.5M1051.1 652.5 1085 661.2M321 457.6 354.8 461.3M354.8 461.3 386.8 472.9M386.8 472.9 419.6 476.4M419.6 476.4 448.7 484.1M448.7 484.1 481.1 492.9M481.1 492.9 513.3 495.4M513.3 495.4 546.4 503M546.4 503 576.4 510.9M576.4 510.9 604 517.7M604 517.7 640.5 522.5M640.5 522.5 671.3 528.8M671.3 528.8 700.9 535.7M700.9 535.7 731.6 542M731.6 542 767.7 548.2M767.7 548.2 799 557.8M799 557.8 833.1 559.3M833.1 559.3 864.2 568.7M864.2 568.7 890.9 573.7M890.9 573.7 924 578.5M924 578.5 957.9 590.1M957.9 590.1 988.3 596.2M988.3 596.2 1022.7 598.3M1022.7 598.3 1055.7 607.6M1055.7 607.6 1085 613.5M321 425.9 355.8 433M355.8 433 386.3 436.6M386.3 436.6 418.6 446M418.6 446 450.9 448.8M450.9 448.8 482 454.9M482 454.9 509.3 458.1M509.3 458.1 540.9 464.9M540.9 464.9 573.3 472.5M573.3 472.5 608.9 478.6M608.9 478.6 638.8 485.1M638.8 485.1 669.8 489.8M669.8 489.8 704.8 495.2M704.8 495.2 732.6 504M732.6 504 768.2 506.7M768.2 506.7 797.6 513.5M797.6 513.5 831 517.5M831 517.5 858.7 523.2M858.7 523.2 896 528.6M896 528.6 925.6 534.8M925.6 534.8 955.6 540.4M955.6 540.4 988.8 546.2M988.8 546.2 1018 551.7M1018 551.7 1050.8 559.8M1050.8 559.8 1085 565.7M321 394.2 349.8 396.5M349.8 396.5 384.3 404M384.3 404 417.9 407M417.9 407 447.7 414.2M447.7 414.2 476.9 422.8M476.9 422.8 510 422.7M510 422.7 543.7 428.3M543.7 428.3 576.5 434.5M576.5 434.5 604.9 437.9M604.9 437.9 640.9 444.4M640.9 444.4 673.2 450.7M673.2 450.7 706 454.9M706 454.9 733.1 459.8M733.1 459.8 768.9 467.2M768.9 467.2 797.4 469.1M797.4 469.1 831.6 479.5M831.6 479.5 862.8 478.9M862.8 478.9 890.7 484.6M890.7 484.6 923.5 489.4M923.5 489.4 954.5 498.3M954.5 498.3 992.3 500.7M992.3 500.7 1024.7 507.5M1024.7 507.5 1055.3 515.3M1055.3 515.3 1085 518M321 362.5 355.9 364.2M355.9 364.2 383.3 372.1M383.3 372.1 419.6 373.5M419.6 373.5 446.9 382.6M446.9 382.6 477.5 384.3M477.5 384.3 510.8 390.5M510.8 390.5 546.8 392M546.8 392 577.3 399.8M577.3 399.8 609.8 403.2M609.8 403.2 642.3 406.6M642.3 406.6 670.6 410.2M670.6 410.2 705 416.2M705 416.2 733.2 418.9M733.2 418.9 768.2 426M768.2 426 800 429.1M800 429.1 830.2 432.2M830.2 432.2 863.6 435.9M863.6 435.9 893.8 444.8M893.8 444.8 927.1 445.4M927.1 445.4 955.8 454.3M955.8 454.3 990.5 459M990.5 459 1023.9 460.9M1023.9 460.9 1055.9 467.1M1055.9 467.1 1085 470.2M321 330.8 351.7 333.8M351.7 333.8 381.7 337.8M381.7 337.8 419.7 339.9M419.7 339.9 448.8 343.7M448.8 343.7 477.2 350.8M477.2 350.8 510.2 351M510.2 351 541.4 358.4M541.4 358.4 576.3 358.4M576.3 358.4 605.6 368M605.6 368 637.4 369.4M637.4 369.4 670.6 374.5M670.6 374.5 703.7 378.4M703.7 378.4 735.1 378.6M735.1 378.6 764.4 381.8M764.4 381.8 800.8 385.8M800.8 385.8 827 394.7M827 394.7 860.1 398.1M860.1 398.1 891.1 399.4M891.1 399.4 923.9 405.4M923.9 405.4 958.5 408.1M958.5 408.1 991.3 413.3M991.3 413.3 1020.3 415.5M1020.3 415.5 1052.8 416.3M1052.8 416.3 1085 422.5M321 299.1 355.2 302.8M355.2 302.8 386.9 303.6M386.9 303.6 416.8 308.3M416.8 308.3 449.9 309.2M449.9 309.2 479.1 314.8M479.1 314.8 509 318.3M509 318.3 545.5 320.7M545.5 320.7 576.7 324.9M576.7 324.9 605.5 326.6M605.5 326.6 642.8 329.6M642.8 329.6 670.7 331.3M670.7 331.3 701 334.9M701 334.9 737.8 341.4M737.8 341.4 769.3 346.1M769.3 346.1 799.3 349M799.3 349 830.6 349M830.6 349 865.3 355.1M865.3 355.1 897.1 355.7M897.1 355.7 927.7 358.4M927.7 358.4 961.1 364.7M961.1 364.7 988 367.9M988 367.9 1019.1 366M1019.1 366 1054.7 370.4M1054.7 370.4 1085 374.7M321 838 321 805M352.8 847.2 353.1 814.7M384.7 856.3 385.4 825.4M416.5 865.5 413.5 830.9M448.3 874.7 450.7 841.5M480.2 883.8 478.3 855.1M512 893 511.8 863.3M543.8 902.2 543.7 871.3M575.7 911.3 573.2 880.5M607.5 920.5 610.1 889M639.3 929.7 641 899M671.2 938.8 668.1 908.7M703 948 703.6 915.1M734.8 957.2 731.6 927.7M766.7 966.4 766.5 936M798.5 975.5 801.2 945.1M830.3 984.7 833.3 952.4M862.2 993.9 864.3 961.8M894 1003 897 973.6M925.8 1012.2 923 978.3M957.7 1021.4 955.7 992.5M989.5 1030.5 989.1 999.6M1021.3 1039.7 1019.9 1008M1053.2 1048.9 1052.4 1016.3M1085 1058 1085 1026.3M321 838 353.1 814.7M384.7 856.3 353.1 814.7M384.7 856.3 413.5 830.9M448.3 874.7 413.5 830.9M448.3 874.7 478.3 855.1M512 893 478.3 855.1M512 893 543.7 871.3M575.7 911.3 543.7 871.3M575.7 911.3 610.1 889M639.3 929.7 610.1 889M639.3 929.7 668.1 908.7M703 948 668.1 908.7M703 948 731.6 927.7M766.7 966.4 731.6 927.7M766.7 966.4 801.2 945.1M830.3 984.7 801.2 945.1M830.3 984.7 864.3 961.8M894 1003 864.3 961.8M894 1003 923 978.3M957.7 1021.4 923 978.3M957.7 1021.4 989.1 999.6M1021.3 1039.7 989.1 999.6M1021.3 1039.7 1052.4 1016.3M1085 1058 1052.4 1016.3M321 805 321 775M353.1 814.7 353.4 786.2M385.4 825.4 385.9 795.5M413.5 830.9 419 805M450.7 841.5 449.5 809.3M478.3 855.1 482.7 823.2M511.8 863.3 514.8 830M543.7 871.3 545.3 837M573.2 880.5 578 848.4M610.1 889 606 854.5M641 899 641.8 869.2M668.1 908.7 668.3 877.3M703.6 915.1 702.4 882.5M731.6 927.7 733.4 895.4M766.5 936 769.3 900.2M801.2 945.1 799.3 909.4M833.3 952.4 831.9 920.3M864.3 961.8 864.8 933.3M897 973.6 894 942.6M923 978.3 924.5 946.3M955.7 992.5 958.4 955.1M989.1 999.6 987.4 966.6M1019.9 1008 1022.1 974.2M1052.4 1016.3 1050 987.7M1085 1026.3 1085 994.6M353.1 814.7 321 775M353.1 814.7 385.9 795.5M413.5 830.9 385.9 795.5M413.5 830.9 449.5 809.3M478.3 855.1 449.5 809.3M478.3 855.1 514.8 830M543.7 871.3 514.8 830M543.7 871.3 578 848.4M610.1 889 578 848.4M610.1 889 641.8 869.2M668.1 908.7 641.8 869.2M668.1 908.7 702.4 882.5M731.6 927.7 702.4 882.5M731.6 927.7 769.3 900.2M801.2 945.1 769.3 900.2M801.2 945.1 831.9 920.3M864.3 961.8 831.9 920.3M864.3 961.8 894 942.6M923 978.3 894 942.6M923 978.3 958.4 955.1M989.1 999.6 958.4 955.1M989.1 999.6 1022.1 974.2M1052.4 1016.3 1022.1 974.2M1052.4 1016.3 1085 994.6M321 775 321 742M353.4 786.2 356 754.4M385.9 795.5 383.8 761M419 805 416.6 771.3M449.5 809.3 449 779.9M482.7 823.2 481 791.4M514.8 830 512 797.5M545.3 837 545.4 805.5M578 848.4 574.3 819.1M606 854.5 607.6 825.7M641.8 869.2 635.9 834.1M668.3 877.3 671.7 840.9M702.4 882.5 703.8 853.7M733.4 895.4 731.8 862.8M769.3 900.2 766.4 872.3M799.3 909.4 797.5 881.7M831.9 920.3 832 886.7M864.8 933.3 859.1 899.8M894 942.6 897.2 906.4M924.5 946.3 925.5 917.6M958.4 955.1 956.4 925.4M987.4 966.6 988.2 934.6M1022.1 974.2 1022 943.4M1050 987.7 1052.3 955.4M1085 994.6 1085 962.9M321 775 356 754.4M385.9 795.5 356 754.4M385.9 795.5 416.6 771.3M449.5 809.3 416.6 771.3M449.5 809.3 481 791.4M514.8 830 481 791.4M514.8 830 545.4 805.5M578 848.4 545.4 805.5M578 848.4 607.6 825.7M641.8 869.2 607.6 825.7M641.8 869.2 671.7 840.9M702.4 882.5 671.7 840.9M702.4 882.5 731.8 862.8M769.3 900.2 731.8 862.8M769.3 900.2 797.5 881.7M831.9 920.3 797.5 881.7M831.9 920.3 859.1 899.8M894 942.6 859.1 899.8M894 942.6 925.5 917.6M958.4 955.1 925.5 917.6M958.4 955.1 988.2 934.6M1022.1 974.2 988.2 934.6M1022.1 974.2 1052.3 955.4M1085 994.6 1052.3 955.4M321 742 321 708.8M356 754.4 353.3 721.8M383.8 761 383.3 727.9M416.6 771.3 418.6 737.1M449 779.9 446.1 747.5M481 791.4 481.6 754.7M512 797.5 510.8 765.2M545.4 805.5 546.2 775M574.3 819.1 578.2 782.6M607.6 825.7 606.4 794.6M635.9 834.1 642 802.6M671.7 840.9 669.2 809.8M703.8 853.7 703.2 819.4M731.8 862.8 737 832.4M766.4 872.3 764.5 838.2M797.5 881.7 800.7 849.6M832 886.7 832.5 857M859.1 899.8 859.6 865.8M897.2 906.4 896.1 874.9M925.5 917.6 924.8 884.9M956.4 925.4 957.1 894M988.2 934.6 992.4 901.7M1022 943.4 1017.9 915.6M1052.3 955.4 1055.8 925M1085 962.9 1085 931.2M356 754.4 321 708.8M356 754.4 383.3 727.9M416.6 771.3 383.3 727.9M416.6 771.3 446.1 747.5M481 791.4 446.1 747.5M481 791.4 510.8 765.2M545.4 805.5 510.8 765.2M545.4 805.5 578.2 782.6M607.6 825.7 578.2 782.6M607.6 825.7 642 802.6M671.7 840.9 642 802.6M671.7 840.9 703.2 819.4M731.8 862.8 703.2 819.4M731.8 862.8 764.5 838.2M797.5 881.7 764.5 838.2M797.5 881.7 832.5 857M859.1 899.8 832.5 857M859.1 899.8 896.1 874.9M925.5 917.6 896.1 874.9M925.5 917.6 957.1 894M988.2 934.6 957.1 894M988.2 934.6 1017.9 915.6M1052.3 955.4 1017.9 915.6M1052.3 955.4 1085 931.2M321 708.8 321 679.2M353.3 721.8 356 691.2M383.3 727.9 382.7 699.3M418.6 737.1 418.9 708M446.1 747.5 448.5 714.9M481.6 754.7 479.1 723.7M510.8 765.2 509 735M546.2 775 542.3 745.5M578.2 782.6 572.5 755.3M606.4 794.6 608.9 764.6M642 802.6 642.1 773.6M669.2 809.8 671.7 777.4M703.2 819.4 704.7 787.5M737 832.4 733.4 799.7M764.5 838.2 766.8 807.3M800.7 849.6 801.6 817.7M832.5 857 829.2 824.7M859.6 865.8 864.7 835.2M896.1 874.9 896 843.6M924.8 884.9 923.7 853.9M957.1 894 959.9 860.9M992.4 901.7 991.5 874.6M1017.9 915.6 1023.5 883.1M1055.8 925 1049.7 891.1M1085 931.2 1085 899.5M321 708.8 356 691.2M383.3 727.9 356 691.2M383.3 727.9 418.9 708M446.1 747.5 418.9 708M446.1 747.5 479.1 723.7M510.8 765.2 479.1 723.7M510.8 765.2 542.3 745.5M578.2 782.6 542.3 745.5M578.2 782.6 608.9 764.6M642 802.6 608.9 764.6M642 802.6 671.7 777.4M703.2 819.4 671.7 777.4M703.2 819.4 733.4 799.7M764.5 838.2 733.4 799.7M764.5 838.2 801.6 817.7M832.5 857 801.6 817.7M832.5 857 864.7 835.2M896.1 874.9 864.7 835.2M896.1 874.9 923.7 853.9M957.1 894 923.7 853.9M957.1 894 991.5 874.6M1017.9 915.6 991.5 874.6M1017.9 915.6 1049.7 891.1M1085 931.2 1049.7 891.1M321 679.2 321 649.6M356 691.2 349.7 655.6M382.7 699.3 383 666.3M418.9 708 416 675.1M448.5 714.9 450.3 681.5M479.1 723.7 477.1 691.4M509 735 509.4 700.2M542.3 745.5 547.2 714.1M572.5 755.3 572.8 721.2M608.9 764.6 606.2 729.2M642.1 773.6 638.3 740.4M671.7 777.4 671.8 747.8M704.7 787.5 700.8 756.8M733.4 799.7 732.2 767.3M766.8 807.3 768.2 775.4M801.6 817.7 795.6 783.4M829.2 824.7 829.4 795.1M864.7 835.2 864.1 802.9M896 843.6 896.1 813.6M923.7 853.9 925.4 821.2M959.9 860.9 957.6 832.4M991.5 874.6 988.9 841.5M1023.5 883.1 1021.1 848M1049.7 891.1 1053.4 859.8M1085 899.5 1085 867.8M356 691.2 321 649.6M356 691.2 383 666.3M418.9 708 383 666.3M418.9 708 450.3 681.5M479.1 723.7 450.3 681.5M479.1 723.7 509.4 700.2M542.3 745.5 509.4 700.2M542.3 745.5 572.8 721.2M608.9 764.6 572.8 721.2M608.9 764.6 638.3 740.4M671.7 777.4 638.3 740.4M671.7 777.4 700.8 756.8M733.4 799.7 700.8 756.8M733.4 799.7 768.2 775.4M801.6 817.7 768.2 775.4M801.6 817.7 829.4 795.1M864.7 835.2 829.4 795.1M864.7 835.2 896.1 813.6M923.7 853.9 896.1 813.6M923.7 853.9 957.6 832.4M991.5 874.6 957.6 832.4M991.5 874.6 1021.1 848M1049.7 891.1 1021.1 848M1049.7 891.1 1085 867.8M321 649.6 321 614M349.7 655.6 352.3 624.8M383 666.3 387.3 637.1M416 675.1 415.6 646M450.3 681.5 450.4 651.3M477.1 691.4 479.9 659.7M509.4 700.2 514.2 672.1M547.2 714.1 546.5 682M572.8 721.2 576.8 690.8M606.2 729.2 607.9 696.2M638.3 740.4 639.9 704.8M671.8 747.8 668.7 718.6M700.8 756.8 699.8 723.7M732.2 767.3 732 737.6M768.2 775.4 764.4 741.6M795.6 783.4 800.9 751.3M829.4 795.1 832.7 763.8M864.1 802.9 864.5 774.7M896.1 813.6 894.6 782.9M925.4 821.2 922.6 791.9M957.6 832.4 957.7 800.8M988.9 841.5 986.7 810.1M1021.1 848 1024.4 815.2M1053.4 859.8 1051.9 827.3M1085 867.8 1085 836.1M321 649.6 352.3 624.8M383 666.3 352.3 624.8M383 666.3 415.6 646M450.3 681.5 415.6 646M450.3 681.5 479.9 659.7M509.4 700.2 479.9 659.7M509.4 700.2 546.5 682M572.8 721.2 546.5 682M572.8 721.2 607.9 696.2M638.3 740.4 607.9 696.2M638.3 740.4 668.7 718.6M700.8 756.8 668.7 718.6M700.8 756.8 732 737.6M768.2 775.4 732 737.6M768.2 775.4 800.9 751.3M829.4 795.1 800.9 751.3M829.4 795.1 864.5 774.7M896.1 813.6 864.5 774.7M896.1 813.6 922.6 791.9M957.6 832.4 922.6 791.9M957.6 832.4 986.7 810.1M1021.1 848 986.7 810.1M1021.1 848 1051.9 827.3M1085 867.8 1051.9 827.3M321 614 321 586M352.3 624.8 351 591.6M387.3 637.1 382.9 603.4M415.6 646 418.3 611.3M450.4 651.3 447.4 620.5M479.9 659.7 479.1 629.7M514.2 672.1 509.1 639.4M546.5 682 547.1 648.1M576.8 690.8 577.4 655.7M607.9 696.2 608.8 668.4M639.9 704.8 640.6 676.2M668.7 718.6 671.1 686.1M699.8 723.7 705.8 692.3M732 737.6 732 705.1M764.4 741.6 769.6 712.9M800.9 751.3 798.1 723.2M832.7 763.8 828.1 729.7M864.5 774.7 860.1 740.8M894.6 782.9 892.7 747.8M922.6 791.9 927.2 761.3M957.7 800.8 956.2 769M986.7 810.1 988.9 779M1024.4 815.2 1021.9 784.7M1051.9 827.3 1051.2 792.4M1085 836.1 1085 804.4M352.3 624.8 321 586M352.3 624.8 382.9 603.4M415.6 646 382.9 603.4M415.6 646 447.4 620.5M479.9 659.7 447.4 620.5M479.9 659.7 509.1 639.4M546.5 682 509.1 639.4M546.5 682 577.4 655.7M607.9 696.2 577.4 655.7M607.9 696.2 640.6 676.2M668.7 718.6 640.6 676.2M668.7 718.6 705.8 692.3M732 737.6 705.8 692.3M732 737.6 769.6 712.9M800.9 751.3 769.6 712.9M800.9 751.3 828.1 729.7M864.5 774.7 828.1 729.7M864.5 774.7 892.7 747.8M922.6 791.9 892.7 747.8M922.6 791.9 956.2 769M986.7 810.1 956.2 769M986.7 810.1 1021.9 784.7M1051.9 827.3 1021.9 784.7M1051.9 827.3 1085 804.4M321 586 321 552.7M351 591.6 352.7 560.5M382.9 603.4 382.4 568.9M418.3 611.3 415.3 579.8M447.4 620.5 445.8 589.6M479.1 629.7 480 595.8M509.1 639.4 511.8 605.7M547.1 648.1 546.1 612.5M577.4 655.7 575.5 622M608.8 668.4 610 628.6M640.6 676.2 641 640.5M671.1 686.1 670.9 644.6M705.8 692.3 701.1 656M732 705.1 736.1 665.9M769.6 712.9 769.1 670.1M798.1 723.2 796.3 678.7M828.1 729.7 828.1 689.9M860.1 740.8 864.7 699.6M892.7 747.8 892.3 707.9M927.2 761.3 924.5 713.7M956.2 769 959.3 720.2M988.9 779 986.6 733.2M1021.9 784.7 1019.9 738.8M1051.2 792.4 1053.7 749.2M1085 804.4 1085 756.7M321 586 352.7 560.5M382.9 603.4 352.7 560.5M382.9 603.4 415.3 579.8M447.4 620.5 415.3 579.8M447.4 620.5 480 595.8M509.1 639.4 480 595.8M509.1 639.4 546.1 612.5M577.4 655.7 546.1 612.5M577.4 655.7 610 628.6M640.6 676.2 610 628.6M640.6 676.2 670.9 644.6M705.8 692.3 670.9 644.6M705.8 692.3 736.1 665.9M769.6 712.9 736.1 665.9M769.6 712.9 796.3 678.7M828.1 729.7 796.3 678.7M828.1 729.7 864.7 699.6M892.7 747.8 864.7 699.6M892.7 747.8 924.5 713.7M956.2 769 924.5 713.7M956.2 769 986.6 733.2M1021.9 784.7 986.6 733.2M1021.9 784.7 1053.7 749.2M1085 804.4 1053.7 749.2M321 552.7 321 521M352.7 560.5 349.4 527.8M382.4 568.9 384.2 536.6M415.3 579.8 414.5 545M445.8 589.6 451.5 551.7M480 595.8 480.5 557.9M511.8 605.7 510.4 569M546.1 612.5 541.1 578.1M575.5 622 578.5 581.2M610 628.6 610.6 590.7M641 640.5 641.2 600.9M670.9 644.6 669.7 608.2M701.1 656 704.1 616.8M736.1 665.9 733.2 624.3M769.1 670.1 769.9 631.7M796.3 678.7 798.8 636.1M828.1 689.9 830.3 645.4M864.7 699.6 863.7 655.2M892.3 707.9 894.5 660M924.5 713.7 926.9 670.6M959.3 720.2 955.4 680M986.6 733.2 990.6 683.2M1019.9 738.8 1024.4 691.1M1053.7 749.2 1052 702.4M1085 756.7 1085 708.9M352.7 560.5 321 521M352.7 560.5 384.2 536.6M415.3 579.8 384.2 536.6M415.3 579.8 451.5 551.7M480 595.8 451.5 551.7M480 595.8 510.4 569M546.1 612.5 510.4 569M546.1 612.5 578.5 581.2M610 628.6 578.5 581.2M610 628.6 641.2 600.9M670.9 644.6 641.2 600.9M670.9 644.6 704.1 616.8M736.1 665.9 704.1 616.8M736.1 665.9 769.9 631.7M796.3 678.7 769.9 631.7M796.3 678.7 830.3 645.4M864.7 699.6 830.3 645.4M864.7 699.6 894.5 660M924.5 713.7 894.5 660M924.5 713.7 955.4 680M986.6 733.2 955.4 680M986.6 733.2 1024.4 691.1M1053.7 749.2 1024.4 691.1M1053.7 749.2 1085 708.9M321 521 321 489.3M349.4 527.8 353.5 496.8M384.2 536.6 385.7 503.4M414.5 545 415.2 508.8M451.5 551.7 445.3 519.2M480.5 557.9 481.9 525.4M510.4 569 513.7 531.4M541.1 578.1 542.2 538.7M578.5 581.2 578.3 543.9M610.6 590.7 607.5 552.2M641.2 600.9 641.2 560M669.7 608.2 670 567.5M704.1 616.8 703.3 576.9M733.2 624.3 733.8 584.5M769.9 631.7 764 588.2M798.8 636.1 795.7 594.4M830.3 645.4 832.3 605.3M863.7 655.2 860 609.2M894.5 660 893.4 619.7M926.9 670.6 928 626.9M955.4 680 958.3 630.4M990.6 683.2 988.8 637.9M1024.4 691.1 1021.5 647.3M1052 702.4 1051.1 652.5M1085 708.9 1085 661.2M321 521 353.5 496.8M384.2 536.6 353.5 496.8M384.2 536.6 415.2 508.8M451.5 551.7 415.2 508.8M451.5 551.7 481.9 525.4M510.4 569 481.9 525.4M510.4 569 542.2 538.7M578.5 581.2 542.2 538.7M578.5 581.2 607.5 552.2M641.2 600.9 607.5 552.2M641.2 600.9 670 567.5M704.1 616.8 670 567.5M704.1 616.8 733.8 584.5M769.9 631.7 733.8 584.5M769.9 631.7 795.7 594.4M830.3 645.4 795.7 594.4M830.3 645.4 860 609.2M894.5 660 860 609.2M894.5 660 928 626.9M955.4 680 928 626.9M955.4 680 988.8 637.9M1024.4 691.1 988.8 637.9M1024.4 691.1 1051.1 652.5M1085 708.9 1051.1 652.5M321 489.3 321 457.6M353.5 496.8 354.8 461.3M385.7 503.4 386.8 472.9M415.2 508.8 419.6 476.4M445.3 519.2 448.7 484.1M481.9 525.4 481.1 492.9M513.7 531.4 513.3 495.4M542.2 538.7 546.4 503M578.3 543.9 576.4 510.9M607.5 552.2 604 517.7M641.2 560 640.5 522.5M670 567.5 671.3 528.8M703.3 576.9 700.9 535.7M733.8 584.5 731.6 542M764 588.2 767.7 548.2M795.7 594.4 799 557.8M832.3 605.3 833.1 559.3M860 609.2 864.2 568.7M893.4 619.7 890.9 573.7M928 626.9 924 578.5M958.3 630.4 957.9 590.1M988.8 637.9 988.3 596.2M1021.5 647.3 1022.7 598.3M1051.1 652.5 1055.7 607.6M1085 661.2 1085 613.5M353.5 496.8 321 457.6M353.5 496.8 386.8 472.9M415.2 508.8 386.8 472.9M415.2 508.8 448.7 484.1M481.9 525.4 448.7 484.1M481.9 525.4 513.3 495.4M542.2 538.7 513.3 495.4M542.2 538.7 576.4 510.9M607.5 552.2 576.4 510.9M607.5 552.2 640.5 522.5M670 567.5 640.5 522.5M670 567.5 700.9 535.7M733.8 584.5 700.9 535.7M733.8 584.5 767.7 548.2M795.7 594.4 767.7 548.2M795.7 594.4 833.1 559.3M860 609.2 833.1 559.3M860 609.2 890.9 573.7M928 626.9 890.9 573.7M928 626.9 957.9 590.1M988.8 637.9 957.9 590.1M988.8 637.9 1022.7 598.3M1051.1 652.5 1022.7 598.3M1051.1 652.5 1085 613.5M321 457.6 321 425.9M354.8 461.3 355.8 433M386.8 472.9 386.3 436.6M419.6 476.4 418.6 446M448.7 484.1 450.9 448.8M481.1 492.9 482 454.9M513.3 495.4 509.3 458.1M546.4 503 540.9 464.9M576.4 510.9 573.3 472.5M604 517.7 608.9 478.6M640.5 522.5 638.8 485.1M671.3 528.8 669.8 489.8M700.9 535.7 704.8 495.2M731.6 542 732.6 504M767.7 548.2 768.2 506.7M799 557.8 797.6 513.5M833.1 559.3 831 517.5M864.2 568.7 858.7 523.2M890.9 573.7 896 528.6M924 578.5 925.6 534.8M957.9 590.1 955.6 540.4M988.3 596.2 988.8 546.2M1022.7 598.3 1018 551.7M1055.7 607.6 1050.8 559.8M1085 613.5 1085 565.7M321 457.6 355.8 433M386.8 472.9 355.8 433M386.8 472.9 418.6 446M448.7 484.1 418.6 446M448.7 484.1 482 454.9M513.3 495.4 482 454.9M513.3 495.4 540.9 464.9M576.4 510.9 540.9 464.9M576.4 510.9 608.9 478.6M640.5 522.5 608.9 478.6M640.5 522.5 669.8 489.8M700.9 535.7 669.8 489.8M700.9 535.7 732.6 504M767.7 548.2 732.6 504M767.7 548.2 797.6 513.5M833.1 559.3 797.6 513.5M833.1 559.3 858.7 523.2M890.9 573.7 858.7 523.2M890.9 573.7 925.6 534.8M957.9 590.1 925.6 534.8M957.9 590.1 988.8 546.2M1022.7 598.3 988.8 546.2M1022.7 598.3 1050.8 559.8M1085 613.5 1050.8 559.8M321 425.9 321 394.2M355.8 433 349.8 396.5M386.3 436.6 384.3 404M418.6 446 417.9 407M450.9 448.8 447.7 414.2M482 454.9 476.9 422.8M509.3 458.1 510 422.7M540.9 464.9 543.7 428.3M573.3 472.5 576.5 434.5M608.9 478.6 604.9 437.9M638.8 485.1 640.9 444.4M669.8 489.8 673.2 450.7M704.8 495.2 706 454.9M732.6 504 733.1 459.8M768.2 506.7 768.9 467.2M797.6 513.5 797.4 469.1M831 517.5 831.6 479.5M858.7 523.2 862.8 478.9M896 528.6 890.7 484.6M925.6 534.8 923.5 489.4M955.6 540.4 954.5 498.3M988.8 546.2 992.3 500.7M1018 551.7 1024.7 507.5M1050.8 559.8 1055.3 515.3M1085 565.7 1085 518M355.8 433 321 394.2M355.8 433 384.3 404M418.6 446 384.3 404M418.6 446 447.7 414.2M482 454.9 447.7 414.2M482 454.9 510 422.7M540.9 464.9 510 422.7M540.9 464.9 576.5 434.5M608.9 478.6 576.5 434.5M608.9 478.6 640.9 444.4M669.8 489.8 640.9 444.4M669.8 489.8 706 454.9M732.6 504 706 454.9M732.6 504 768.9 467.2M797.6 513.5 768.9 467.2M797.6 513.5 831.6 479.5M858.7 523.2 831.6 479.5M858.7 523.2 890.7 484.6M925.6 534.8 890.7 484.6M925.6 534.8 954.5 498.3M988.8 546.2 954.5 498.3M988.8 546.2 1024.7 507.5M1050.8 559.8 1024.7 507.5M1050.8 559.8 1085 518M321 394.2 321 362.5M349.8 396.5 355.9 364.2M384.3 404 383.3 372.1M417.9 407 419.6 373.5M447.7 414.2 446.9 382.6M476.9 422.8 477.5 384.3M510 422.7 510.8 390.5M543.7 428.3 546.8 392M576.5 434.5 577.3 399.8M604.9 437.9 609.8 403.2M640.9 444.4 642.3 406.6M673.2 450.7 670.6 410.2M706 454.9 705 416.2M733.1 459.8 733.2 418.9M768.9 467.2 768.2 426M797.4 469.1 800 429.1M831.6 479.5 830.2 432.2M862.8 478.9 863.6 435.9M890.7 484.6 893.8 444.8M923.5 489.4 927.1 445.4M954.5 498.3 955.8 454.3M992.3 500.7 990.5 459M1024.7 507.5 1023.9 460.9M1055.3 515.3 1055.9 467.1M1085 518 1085 470.2M321 394.2 355.9 364.2M384.3 404 355.9 364.2M384.3 404 419.6 373.5M447.7 414.2 419.6 373.5M447.7 414.2 477.5 384.3M510 422.7 477.5 384.3M510 422.7 546.8 392M576.5 434.5 546.8 392M576.5 434.5 609.8 403.2M640.9 444.4 609.8 403.2M640.9 444.4 670.6 410.2M706 454.9 670.6 410.2M706 454.9 733.2 418.9M768.9 467.2 733.2 418.9M768.9 467.2 800 429.1M831.6 479.5 800 429.1M831.6 479.5 863.6 435.9M890.7 484.6 863.6 435.9M890.7 484.6 927.1 445.4M954.5 498.3 927.1 445.4M954.5 498.3 990.5 459M1024.7 507.5 990.5 459M1024.7 507.5 1055.9 467.1M1085 518 1055.9 467.1M321 362.5 321 330.8M355.9 364.2 351.7 333.8M383.3 372.1 381.7 337.8M419.6 373.5 419.7 339.9M446.9 382.6 448.8 343.7M477.5 384.3 477.2 350.8M510.8 390.5 510.2 351M546.8 392 541.4 358.4M577.3 399.8 576.3 358.4M609.8 403.2 605.6 368M642.3 406.6 637.4 369.4M670.6 410.2 670.6 374.5M705 416.2 703.7 378.4M733.2 418.9 735.1 378.6M768.2 426 764.4 381.8M800 429.1 800.8 385.8M830.2 432.2 827 394.7M863.6 435.9 860.1 398.1M893.8 444.8 891.1 399.4M927.1 445.4 923.9 405.4M955.8 454.3 958.5 408.1M990.5 459 991.3 413.3M1023.9 460.9 1020.3 415.5M1055.9 467.1 1052.8 416.3M1085 470.2 1085 422.5M355.9 364.2 321 330.8M355.9 364.2 381.7 337.8M419.6 373.5 381.7 337.8M419.6 373.5 448.8 343.7M477.5 384.3 448.8 343.7M477.5 384.3 510.2 351M546.8 392 510.2 351M546.8 392 576.3 358.4M609.8 403.2 576.3 358.4M609.8 403.2 637.4 369.4M670.6 410.2 637.4 369.4M670.6 410.2 703.7 378.4M733.2 418.9 703.7 378.4M733.2 418.9 764.4 381.8M800 429.1 764.4 381.8M800 429.1 827 394.7M863.6 435.9 827 394.7M863.6 435.9 891.1 399.4M927.1 445.4 891.1 399.4M927.1 445.4 958.5 408.1M990.5 459 958.5 408.1M990.5 459 1020.3 415.5M1055.9 467.1 1020.3 415.5M1055.9 467.1 1085 422.5M321 330.8 321 299.1M351.7 333.8 355.2 302.8M381.7 337.8 386.9 303.6M419.7 339.9 416.8 308.3M448.8 343.7 449.9 309.2M477.2 350.8 479.1 314.8M510.2 351 509 318.3M541.4 358.4 545.5 320.7M576.3 358.4 576.7 324.9M605.6 368 605.5 326.6M637.4 369.4 642.8 329.6M670.6 374.5 670.7 331.3M703.7 378.4 701 334.9M735.1 378.6 737.8 341.4M764.4 381.8 769.3 346.1M800.8 385.8 799.3 349M827 394.7 830.6 349M860.1 398.1 865.3 355.1M891.1 399.4 897.1 355.7M923.9 405.4 927.7 358.4M958.5 408.1 961.1 364.7M991.3 413.3 988 367.9M1020.3 415.5 1019.1 366M1052.8 416.3 1054.7 370.4M1085 422.5 1085 374.7M321 330.8 355.2 302.8M381.7 337.8 355.2 302.8M381.7 337.8 416.8 308.3M448.8 343.7 416.8 308.3M448.8 343.7 479.1 314.8M510.2 351 479.1 314.8M510.2 351 545.5 320.7M576.3 358.4 545.5 320.7M576.3 358.4 605.5 326.6M637.4 369.4 605.5 326.6M637.4 369.4 670.7 331.3M703.7 378.4 670.7 331.3M703.7 378.4 737.8 341.4M764.4 381.8 737.8 341.4M764.4 381.8 799.3 349M827 394.7 799.3 349M827 394.7 865.3 355.1M891.1 399.4 865.3 355.1M891.1 399.4 927.7 358.4M958.5 408.1 927.7 358.4M958.5 408.1 988 367.9M1020.3 415.5 988 367.9M1020.3 415.5 1054.7 370.4M1085 422.5 1054.7 370.4" fill="none" stroke="#000" stroke-width="1" shape-rendering="crispEdges"/></g></g><g clip-path="url(#cright)"><path d="M824 698 844.6 680.1M844.6 680.1 865.3 662.1M865.3 662.1 885.9 644.2M885.9 644.2 906.6 626.3M906.6 626.3 927.2 608.4M927.2 608.4 947.9 590.4M947.9 590.4 968.5 572.5M968.5 572.5 989.1 554.6M989.1 554.6 1009.8 536.6M1009.8 536.6 1030.4 518.7M1030.4 518.7 1051.1 500.8M1051.1 500.8 1071.7 482.9M1071.7 482.9 1092.4 464.9M1092.4 464.9 1113 447M824 726.5 844.7 709.4M844.7 709.4 863 692.1M863 692.1 884.8 672.3M884.8 672.3 905.8 656.2M905.8 656.2 928.4 635.6M928.4 635.6 945.9 617.7M945.9 617.7 968.1 598.5M968.1 598.5 987.4 584.6M987.4 584.6 1010.8 568M1010.8 568 1032.8 549.5M1032.8 549.5 1050.4 527.3M1050.4 527.3 1070.8 511.1M1070.8 511.1 1092.5 493.7M1092.5 493.7 1113 475.5M824 755 843.9 739.2M843.9 739.2 864.2 718.9M864.2 718.9 887.9 703.1M887.9 703.1 905.6 681.7M905.6 681.7 928.7 662.4M928.7 662.4 946 647.6M946 647.6 968.7 627.5M968.7 627.5 986.9 609.8M986.9 609.8 1011.1 593.4M1011.1 593.4 1032.8 577.4M1032.8 577.4 1053.5 555M1053.5 555 1070.1 536.9M1070.1 536.9 1092 521M1092 521 1113 504M824 783.5 842.4 765.8M842.4 765.8 863.3 746.5M863.3 746.5 884.7 731.5M884.7 731.5 906.2 710.3M906.2 710.3 924.9 693.4M924.9 693.4 948.5 677M948.5 677 970.6 659.9M970.6 659.9 987.9 637.9M987.9 637.9 1011.1 623.9M1011.1 623.9 1030.5 606.2M1030.5 606.2 1051.3 585M1051.3 585 1070.1 565.5M1070.1 565.5 1093.1 552.8M1093.1 552.8 1113 532.5M824 812 846.7 793.9M846.7 793.9 866.1 778.7M866.1 778.7 887.5 758.8M887.5 758.8 906.1 740.4M906.1 740.4 925.6 720.5M925.6 720.5 948.8 707.4M948.8 707.4 968.7 685.9M968.7 685.9 988.4 668.3M988.4 668.3 1011.3 650.4M1011.3 650.4 1032.7 630.6M1032.7 630.6 1050.1 614.9M1050.1 614.9 1071.3 599M1071.3 599 1094 581.5M1094 581.5 1113 561M824 840.5 845.2 819.8M845.2 819.8 865.7 804.9M865.7 804.9 885.9 785.4M885.9 785.4 907.6 771.3M907.6 771.3 925.2 751.9M925.2 751.9 947.2 733M947.2 733 970.5 717.8M970.5 717.8 989.9 695.2M989.9 695.2 1011.9 677.2M1011.9 677.2 1029.8 663.2M1029.8 663.2 1050.2 641.9M1050.2 641.9 1074 628M1074 628 1091.4 606.8M1091.4 606.8 1113 589.5M824 869 843.6 848.9M843.6 848.9 864 836M864 836 883.8 813.6M883.8 813.6 905.1 794.8M905.1 794.8 927.3 780.8M927.3 780.8 949.5 762.2M949.5 762.2 970.1 740.5M970.1 740.5 988.1 728.3M988.1 728.3 1007.6 706.2M1007.6 706.2 1030.3 688.3M1030.3 688.3 1051.3 669.1M1051.3 669.1 1070.4 656.6M1070.4 656.6 1090.6 638.4M1090.6 638.4 1113 618M824 897.5 843 882.5M843 882.5 866.2 862.5M866.2 862.5 884.1 841M884.1 841 907.9 823.8M907.9 823.8 925.7 809.8M925.7 809.8 949.7 787.2M949.7 787.2 970.8 772.2M970.8 772.2 988.6 751.7M988.6 751.7 1009.2 739.1M1009.2 739.1 1029.3 716M1029.3 716 1049.3 698M1049.3 698 1071 684.8M1071 684.8 1090.2 662.6M1090.2 662.6 1113 646.5M824 926 846.8 911.1M846.8 911.1 867.7 888.6M867.7 888.6 885.2 874.9M885.2 874.9 906.5 855.5M906.5 855.5 926.3 833.5M926.3 833.5 947.1 819.9M947.1 819.9 969.9 800.9M969.9 800.9 989 782.8M989 782.8 1009.5 764.8M1009.5 764.8 1032.1 744.9M1032.1 744.9 1051.5 731.4M1051.5 731.4 1073.5 708.9M1073.5 708.9 1094.7 695M1094.7 695 1113 675M824 954.5 843 935.2M843 935.2 863.8 916M863.8 916 888.3 900.2M888.3 900.2 908.4 880.5M908.4 880.5 924.8 867.1M924.8 867.1 949.3 849.9M949.3 849.9 969.4 829.2M969.4 829.2 990.5 808.6M990.5 808.6 1010 792.8M1010 792.8 1028.7 775.8M1028.7 775.8 1050.2 757.3M1050.2 757.3 1071.1 738.3M1071.1 738.3 1091.6 722M1091.6 722 1113 703.5M824 983 844.6 965.1M844.6 965.1 865.3 947.1M865.3 947.1 885.9 929.2M885.9 929.2 906.6 911.3M906.6 911.3 927.2 893.4M927.2 893.4 947.9 875.4M947.9 875.4 968.5 857.5M968.5 857.5 989.1 839.6M989.1 839.6 1009.8 821.6M1009.8 821.6 1030.4 803.7M1030.4 803.7 1051.1 785.8M1051.1 785.8 1071.7 767.9M1071.7 767.9 1092.4 749.9M1092.4 749.9 1113 732M824 698 824 726.5M844.6 680.1 844.7 709.4M865.3 662.1 863 692.1M885.9 644.2 884.8 672.3M906.6 626.3 905.8 656.2M927.2 608.4 928.4 635.6M947.9 590.4 945.9 617.7M968.5 572.5 968.1 598.5M989.1 554.6 987.4 584.6M1009.8 536.6 1010.8 568M1030.4 518.7 1032.8 549.5M1051.1 500.8 1050.4 527.3M1071.7 482.9 1070.8 511.1M1092.4 464.9 1092.5 493.7M1113 447 1113 475.5M824 698 844.7 709.4M865.3 662.1 844.7 709.4M865.3 662.1 884.8 672.3M906.6 626.3 884.8 672.3M906.6 626.3 928.4 635.6M947.9 590.4 928.4 635.6M947.9 590.4 968.1 598.5M989.1 554.6 968.1 598.5M989.1 554.6 1010.8 568M1030.4 518.7 1010.8 568M1030.4 518.7 1050.4 527.3M1071.7 482.9 1050.4 527.3M1071.7 482.9 1092.5 493.7M1113 447 1092.5 493.7M824 726.5 824 755M844.7 709.4 843.9 739.2M863 692.1 864.2 718.9M884.8 672.3 887.9 703.1M905.8 656.2 905.6 681.7M928.4 635.6 928.7 662.4M945.9 617.7 946 647.6M968.1 598.5 968.7 627.5M987.4 584.6 986.9 609.8M1010.8 568 1011.1 593.4M1032.8 549.5 1032.8 577.4M1050.4 527.3 1053.5 555M1070.8 511.1 1070.1 536.9M1092.5 493.7 1092 521M1113 475.5 1113 504M844.7 709.4 824 755M844.7 709.4 864.2 718.9M884.8 672.3 864.2 718.9M884.8 672.3 905.6 681.7M928.4 635.6 905.6 681.7M928.4 635.6 946 647.6M968.1 598.5 946 647.6M968.1 598.5 986.9 609.8M1010.8 568 986.9 609.8M1010.8 568 1032.8 577.4M1050.4 527.3 1032.8 577.4M1050.4 527.3 1070.1 536.9M1092.5 493.7 1070.1 536.9M1092.5 493.7 1113 504M824 755 824 783.5M843.9 739.2 842.4 765.8M864.2 718.9 863.3 746.5M887.9 703.1 884.7 731.5M905.6 681.7 906.2 710.3M928.7 662.4 924.9 693.4M946 647.6 948.5 677M968.7 627.5 970.6 659.9M986.9 609.8 987.9 637.9M1011.1 593.4 1011.1 623.9M1032.8 577.4 1030.5 606.2M1053.5 555 1051.3 585M1070.1 536.9 1070.1 565.5M1092 521 1093.1 552.8M1113 504 1113 532.5M824 755 842.4 765.8M864.2 718.9 842.4 765.8M864.2 718.9 884.7 731.5M905.6 681.7 884.7 731.5M905.6 681.7 924.9 693.4M946 647.6 924.9 693.4M946 647.6 970.6 659.9M986.9 609.8 970.6 659.9M986.9 609.8 1011.1 623.9M1032.8 577.4 1011.1 623.9M1032.8 577.4 1051.3 585M1070.1 536.9 1051.3 585M1070.1 536.9 1093.1 552.8M1113 504 1093.1 552.8M824 783.5 824 812M842.4 765.8 846.7 793.9M863.3 746.5 866.1 778.7M884.7 731.5 887.5 758.8M906.2 710.3 906.1 740.4M924.9 693.4 925.6 720.5M948.5 677 948.8 707.4M970.6 659.9 968.7 685.9M987.9 637.9 988.4 668.3M1011.1 623.9 1011.3 650.4M1030.5 606.2 1032.7 630.6M1051.3 585 1050.1 614.9M1070.1 565.5 1071.3 599M1093.1 552.8 1094 581.5M1113 532.5 1113 561M842.4 765.8 824 812M842.4 765.8 866.1 778.7M884.7 731.5 866.1 778.7M884.7 731.5 906.1 740.4M924.9 693.4 906.1 740.4M924.9 693.4 948.8 707.4M970.6 659.9 948.8 707.4M970.6 659.9 988.4 668.3M1011.1 623.9 988.4 668.3M1011.1 623.9 1032.7 630.6M1051.3 585 1032.7 630.6M1051.3 585 1071.3 599M1093.1 552.8 1071.3 599M1093.1 552.8 1113 561M824 812 824 840.5M846.7 793.9 845.2 819.8M866.1 778.7 865.7 804.9M887.5 758.8 885.9 785.4M906.1 740.4 907.6 771.3M925.6 720.5 925.2 751.9M948.8 707.4 947.2 733M968.7 685.9 970.5 717.8M988.4 668.3 989.9 695.2M1011.3 650.4 1011.9 677.2M1032.7 630.6 1029.8 663.2M1050.1 614.9 1050.2 641.9M1071.3 599 1074 628M1094 581.5 1091.4 606.8M1113 561 1113 589.5M824 812 845.2 819.8M866.1 778.7 845.2 819.8M866.1 778.7 885.9 785.4M906.1 740.4 885.9 785.4M906.1 740.4 925.2 751.9M948.8 707.4 925.2 751.9M948.8 707.4 970.5 717.8M988.4 668.3 970.5 717.8M988.4 668.3 1011.9 677.2M1032.7 630.6 1011.9 677.2M1032.7 630.6 1050.2 641.9M1071.3 599 1050.2 641.9M1071.3 599 1091.4 606.8M1113 561 1091.4 606.8M824 840.5 824 869M845.2 819.8 843.6 848.9M865.7 804.9 864 836M885.9 785.4 883.8 813.6M907.6 771.3 905.1 794.8M925.2 751.9 927.3 780.8M947.2 733 949.5 762.2M970.5 717.8 970.1 740.5M989.9 695.2 988.1 728.3M1011.9 677.2 1007.6 706.2M1029.8 663.2 1030.3 688.3M1050.2 641.9 1051.3 669.1M1074 628 1070.4 656.6M1091.4 606.8 1090.6 638.4M1113 589.5 1113 618M845.2 819.8 824 869M845.2 819.8 864 836M885.9 785.4 864 836M885.9 785.4 905.1 794.8M925.2 751.9 905.1 794.8M925.2 751.9 949.5 762.2M970.5 717.8 949.5 762.2M970.5 717.8 988.1 728.3M1011.9 677.2 988.1 728.3M1011.9 677.2 1030.3 688.3M1050.2 641.9 1030.3 688.3M1050.2 641.9 1070.4 656.6M1091.4 606.8 1070.4 656.6M1091.4 606.8 1113 618M824 869 824 897.5M843.6 848.9 843 882.5M864 836 866.2 862.5M883.8 813.6 884.1 841M905.1 794.8 907.9 823.8M927.3 780.8 925.7 809.8M949.5 762.2 949.7 787.2M970.1 740.5 970.8 772.2M988.1 728.3 988.6 751.7M1007.6 706.2 1009.2 739.1M1030.3 688.3 1029.3 716M1051.3 669.1 1049.3 698M1070.4 656.6 1071 684.8M1090.6 638.4 1090.2 662.6M1113 618 1113 646.5M824 869 843 882.5M864 836 843 882.5M864 836 884.1 841M905.1 794.8 884.1 841M905.1 794.8 925.7 809.8M949.5 762.2 925.7 809.8M949.5 762.2 970.8 772.2M988.1 728.3 970.8 772.2M988.1 728.3 1009.2 739.1M1030.3 688.3 1009.2 739.1M1030.3 688.3 1049.3 698M1070.4 656.6 1049.3 698M1070.4 656.6 1090.2 662.6M1113 618 1090.2 662.6M824 897.5 824 926M843 882.5 846.8 911.1M866.2 862.5 867.7 888.6M884.1 841 885.2 874.9M907.9 823.8 906.5 855.5M925.7 809.8 926.3 833.5M949.7 787.2 947.1 819.9M970.8 772.2 969.9 800.9M988.6 751.7 989 782.8M1009.2 739.1 1009.5 764.8M1029.3 716 1032.1 744.9M1049.3 698 1051.5 731.4M1071 684.8 1073.5 708.9M1090.2 662.6 1094.7 695M1113 646.5 1113 675M843 882.5 824 926M843 882.5 867.7 888.6M884.1 841 867.7 888.6M884.1 841 906.5 855.5M925.7 809.8 906.5 855.5M925.7 809.8 947.1 819.9M970.8 772.2 947.1 819.9M970.8 772.2 989 782.8M1009.2 739.1 989 782.8M1009.2 739.1 1032.1 744.9M1049.3 698 1032.1 744.9M1049.3 698 1073.5 708.9M1090.2 662.6 1073.5 708.9M1090.2 662.6 1113 675M824 926 824 954.5M846.8 911.1 843 935.2M867.7 888.6 863.8 916M885.2 874.9 888.3 900.2M906.5 855.5 908.4 880.5M926.3 833.5 924.8 867.1M947.1 819.9 949.3 849.9M969.9 800.9 969.4 829.2M989 782.8 990.5 808.6M1009.5 764.8 1010 792.8M1032.1 744.9 1028.7 775.8M1051.5 731.4 1050.2 757.3M1073.5 708.9 1071.1 738.3M1094.7 695 1091.6 722M1113 675 1113 703.5M824 926 843 935.2M867.7 888.6 843 935.2M867.7 888.6 888.3 900.2M906.5 855.5 888.3 900.2M906.5 855.5 924.8 867.1M947.1 819.9 924.8 867.1M947.1 819.9 969.4 829.2M989 782.8 969.4 829.2M989 782.8 1010 792.8M1032.1 744.9 1010 792.8M1032.1 744.9 1050.2 757.3M1073.5 708.9 1050.2 757.3M1073.5 708.9 1091.6 722M1113 675 1091.6 722M824 954.5 824 983M843 935.2 844.6 965.1M863.8 916 865.3 947.1M888.3 900.2 885.9 929.2M908.4 880.5 906.6 911.3M924.8 867.1 927.2 893.4M949.3 849.9 947.9 875.4M969.4 829.2 968.5 857.5M990.5 808.6 989.1 839.6M1010 792.8 1009.8 821.6M1028.7 775.8 1030.4 803.7M1050.2 757.3 1051.1 785.8M1071.1 738.3 1071.7 767.9M1091.6 722 1092.4 749.9M1113 703.5 1113 732M843 935.2 824 983M843 935.2 865.3 947.1M888.3 900.2 865.3 947.1M888.3 900.2 906.6 911.3M924.8 867.1 906.6 911.3M924.8 867.1 947.9 875.4M969.4 829.2 947.9 875.4M969.4 829.2 989.1 839.6M1010 792.8 989.1 839.6M1010 792.8 1030.4 803.7M1050.2 757.3 1030.4 803.7M1050.2 757.3 1071.7 767.9M1091.6 722 1071.7 767.9M1091.6 722 1113 732" fill="none" stroke="#000" stroke-width="1" shape-rendering="crispEdges"/></g><g clip-path="url(#cr1)"><g clip-path="url(#nothot1)"><path d="M264.4 295.6 301.1 295.4 336.4 295.6 373.3 294.5 411 295.3 447.5 295.2 484.4 295.6 521.9 295 559.1 295.5 597.4 295 632.8 295.2 668.7 294.9 708 295.4 742.7 295.5 780.7 295.6 817.6 294.6 855.1 295.5 891.8 295.5 929.6 294.8 965.4 295 1002.7 294.8 1040.4 295.5 1077.2 294.5 1113.2 294.8 1151.3 294.5 1186.8 294.8M280.9 310.4 318.6 311.5 355.6 311.3 393.5 311.4 430.7 310.9 467 310.5 504.6 310.8 540.4 311.5 576.9 310.6 615.5 311.1 650.3 310.4 688.1 310.4 726.5 310.6 761.8 310.9 799.5 310.9 836.9 311.2 873.3 310.5 911.9 311.2 946.3 310.9 985.3 311.6 1020.2 310.4 1058.4 310.9 1096.7 311.4 1132 310.9 1169.7 311.5 1205.6 310.9M261.8 327.2 298.6 327.6 337.1 327.1 372.8 326.7 410.9 327.5 448.1 326.7 486.4 327.2 522.1 326.6 558.4 327.5 594.9 327 633.4 326.8 670.8 327.5 708.1 327.3 743.1 326.4 780.8 326.8 817.1 327.5 854.2 327.4 893.3 326.5 930.2 326.9 965.1 326.6 1001.6 327 1039.7 327.4 1078 326.4 1113.7 326.9 1150 326.7 1187.3 327.2M281 342.5 317.7 342.9 355.7 342.7 393.1 342.6 430 343.1 465.5 343.3 503.2 343.1 540.8 343.2 577.3 342.4 615.3 343.5 651.5 343.1 687.8 343.5 726 342.6 763.4 343.6 799 343.6 836.5 342.6 874.1 342.8 911.2 343.1 946.3 343 985.5 343 1021.6 343.5 1058.3 343 1095.7 343.4 1131.6 342.5 1170.3 343.1 1205.9 343.5M264.1 359.1 301.4 359.4 337.7 358.7 372.6 359.2 411.7 358.8 447.9 359.1 484.3 359.3 522.2 358.9 557.8 359.1 595.5 359.3 632 358.9 669.1 358.9 707.2 358.5 742.7 359 780.1 359 817 358.5 855.1 359.5 893.1 359 928.7 358.4 965.3 358.8 1004.3 358.5 1041.3 359 1076.8 358.7 1115.4 358.6 1151.2 359 1187.1 358.6M282.9 375.4 319.2 375.5 354.3 375.3 393.2 374.6 429.4 375.6 466 375.3 502.5 375.2 539.8 375 577.1 375.5 615.2 375 652.1 374.9 689.4 374.7 725.6 375.1 762.2 374.4 798.5 375.2 835.6 375.3 873.5 375.6 911.5 375.3 947.1 374.4 984.7 375.3 1022.7 374.6 1057.5 375.6 1096.2 375 1133.2 374.6 1169.6 375.2 1206.8 374.6M261.9 391.2 301.1 390.5 335.5 390.5 374.8 390.9 410.9 391.6 448.3 390.7 485.6 390.4 521.4 391.3 558 390.4 596.1 390.8 634.4 390.5 670.9 390.9 707.9 390.9 744.5 390.8 780.2 390.9 818.9 390.8 854.2 390.9 890.8 390.8 929.2 391.1 966.3 390.7 1001.6 390.4 1039.5 390.6 1077.2 390.7 1114.8 391.1 1151.5 391.3 1188.1 390.9M280.9 406.4 319.4 407 354.3 407.5 392.7 407.2 429.3 406.5 468 406.6 503.1 407.6 539.4 407 577.4 406.7 615.8 406.9 650.1 407 687 407.3 726.6 407.5 761.2 407.2 798.9 407 835.9 406.8 872.4 407.2 909.3 407.6 946.1 407.6 983.6 406.5 1022.2 407 1059.3 407 1095.9 406.5 1133 407 1170.9 406.4 1205.2 407.2M264.3 422.9 300.6 423.1 336.7 423 374.3 422.4 410.4 423.3 447.3 423 484.3 422.8 522.4 423.3 560.4 423 595.1 422.8 631.7 422.7 670.3 423.1 706.2 422.6 742.8 422.6 781 422.7 819.1 423.1 854.5 422.9 890.6 423.3 929.7 422.8 966.7 422.7 1002.2 422.7 1039.1 423.1 1077.4 423.3 1112.8 423.3 1150.9 422.8 1188 422.9M280.6 438.9 318.9 439.3 356.7 438.6 393.7 439.4 430.1 439.6 465.4 439.4 504.7 438.5 540.8 439.6 576.9 439.5 615.7 438.9 650.4 438.6 689.5 438.9 725 438.9 763.8 438.7 798.1 439.6 836 438.9 874.9 438.7 909.3 439.5 946.7 438.6 985.8 438.7 1022.7 438.8 1057.9 438.6 1095.6 439.1 1132.2 439 1168.9 439.4 1207.8 439.3M263.9 454.5 299.3 454.6 336 455.6 375.2 455.5 411.2 454.5 447.8 454.4 486.2 454.7 521.4 455.6 558.1 455.5 595.4 455.2 631.8 455.5 669.7 454.8 707.5 455.1 743.3 454.5 781.2 454.4 819.1 454.8 854 454.8 890.9 454.8 929.1 454.9 965.5 454.7 1003 455.4 1039.8 455.3 1076.9 454.5 1113 455.4 1150.9 454.8 1188 455.4M281.1 470.8 318.1 470.4 355.6 471 392.5 470.9 429.4 471.3 465.6 471.6 502.4 471.5 539.5 471.4 576.8 470.5 614.6 471.4 652.5 471.5 689.9 470.4 725.1 470.5 763.3 470.9 800.2 471.4 838 471.2 874.6 471.1 909.3 471.5 946.3 470.5 985.5 470.7 1022 470.4 1057.6 471.3 1094.1 471 1133.8 470.6 1170.1 471.3 1206.9 471.3M263.6 486.4 299.1 487 338.4 486.6 374.3 486.5 412 486.9 448.1 487.2 483.9 487.3 522.9 487.5 558.4 486.7 595 487.5 632.8 486.9 670.1 487.3 706.5 486.8 744.8 487.4 780.4 486.5 819.3 487.3 855.3 486.9 893.4 486.9 928.2 486.5 965.6 487.1 1002.6 487.6 1040.4 486.9 1077.5 487.1 1114.3 487 1151.1 487 1189 486.6M282.3 502.7 319.5 502.5 355.5 502.9 393.1 502.6 428.8 502.5 466.7 503.1 502 502.6 539.6 503.6 577.4 503.1 613.9 503.2 652.4 503.2 687 502.9 725.5 502.4 763.4 502.8 798.9 503.2 836.8 503 874.6 503 910 502.4 947.7 502.8 984.6 502.8 1020 502.4 1057.5 502.5 1096.5 503.1 1131.7 503.3 1169.9 502.4 1207.2 502.7M264.5 518.5 299.4 518.7 338.1 519.4 374.2 518.6 410.8 519.3 446.7 519.5 486 519.6 522.6 519.2 560.4 518.7 595.4 518.5 632.1 519.4 668.8 519.3 706.7 519.5 744.8 519.2 782 518.4 817.3 518.8 854.8 519.2 893.1 519.3 930.3 519.3 965.6 519 1003.7 519.4 1039.6 518.8 1077.3 518.7 1115.1 518.4 1151.4 519 1187.1 519.1M281.4 535.6 319.6 535.1 356.6 535.5 391.5 535.4 430.5 535.6 467.3 534.9 502.6 535.2 539.6 535.3 577.7 535.4 614.1 534.7 652.7 535.2 688.1 535.1 725.3 535.2 762.5 534.7 800.9 535.5 837.3 534.7 872.6 535.3 911.5 535.2 946.7 535.3 984.6 534.8 1021.8 534.9 1058.9 535.3 1096.9 534.5 1132.7 535.6 1170 535.1 1207.5 534.4M263.9 551.2 300.2 550.8 337.4 550.5 374.1 550.7 412.3 551.4 447.9 551.3 484.7 551 521 551.5 559.8 551.3 594.8 551.4 631.6 551.1 670 550.4 706.8 551.5 744.4 550.8 781.9 550.8 819.2 550.9 853.7 551.6 890.7 550.7 929.8 550.5 966.1 551.5 1003.3 550.8 1040.8 551.4 1077.2 551.2 1113.5 550.9 1152.5 551.6 1186.5 550.6M280.7 567.4 317.6 566.6 356.3 566.6 393.9 566.9 430.7 567.4 465.6 567.4 503.2 566.6 539.2 567.3 577.7 566.7 615.5 566.6 651.3 566.5 688.1 567.5 725.5 566.6 761.7 567.2 798.8 567.5 835.2 567.5 873.9 567.4 910.1 566.4 946.5 567.2 983.1 566.5 1022.3 567.5 1059.6 567.4 1095.7 567.5 1133.1 567.1 1169.3 566.4 1205.3 566.7M264.4 295.6 280.9 310.4M301.1 295.4 280.9 310.4M301.1 295.4 318.6 311.5M336.4 295.6 318.6 311.5M336.4 295.6 355.6 311.3M373.3 294.5 355.6 311.3M373.3 294.5 393.5 311.4M411 295.3 393.5 311.4M411 295.3 430.7 310.9M447.5 295.2 430.7 310.9M447.5 295.2 467 310.5M484.4 295.6 467 310.5M484.4 295.6 504.6 310.8M521.9 295 504.6 310.8M521.9 295 540.4 311.5M559.1 295.5 540.4 311.5M559.1 295.5 576.9 310.6M597.4 295 576.9 310.6M597.4 295 615.5 311.1M632.8 295.2 615.5 311.1M632.8 295.2 650.3 310.4M668.7 294.9 650.3 310.4M668.7 294.9 688.1 310.4M708 295.4 688.1 310.4M708 295.4 726.5 310.6M742.7 295.5 726.5 310.6M742.7 295.5 761.8 310.9M780.7 295.6 761.8 310.9M780.7 295.6 799.5 310.9M817.6 294.6 799.5 310.9M817.6 294.6 836.9 311.2M855.1 295.5 836.9 311.2M855.1 295.5 873.3 310.5M891.8 295.5 873.3 310.5M891.8 295.5 911.9 311.2M929.6 294.8 911.9 311.2M929.6 294.8 946.3 310.9M965.4 295 946.3 310.9M965.4 295 985.3 311.6M1002.7 294.8 985.3 311.6M1002.7 294.8 1020.2 310.4M1040.4 295.5 1020.2 310.4M1040.4 295.5 1058.4 310.9M1077.2 294.5 1058.4 310.9M1077.2 294.5 1096.7 311.4M1113.2 294.8 1096.7 311.4M1113.2 294.8 1132 310.9M1151.3 294.5 1132 310.9M1151.3 294.5 1169.7 311.5M1186.8 294.8 1169.7 311.5M1186.8 294.8 1205.6 310.9M280.9 310.4 261.8 327.2M280.9 310.4 298.6 327.6M318.6 311.5 298.6 327.6M318.6 311.5 337.1 327.1M355.6 311.3 337.1 327.1M355.6 311.3 372.8 326.7M393.5 311.4 372.8 326.7M393.5 311.4 410.9 327.5M430.7 310.9 410.9 327.5M430.7 310.9 448.1 326.7M467 310.5 448.1 326.7M467 310.5 486.4 327.2M504.6 310.8 486.4 327.2M504.6 310.8 522.1 326.6M540.4 311.5 522.1 326.6M540.4 311.5 558.4 327.5M576.9 310.6 558.4 327.5M576.9 310.6 594.9 327M615.5 311.1 594.9 327M615.5 311.1 633.4 326.8M650.3 310.4 633.4 326.8M650.3 310.4 670.8 327.5M688.1 310.4 670.8 327.5M688.1 310.4 708.1 327.3M726.5 310.6 708.1 327.3M726.5 310.6 743.1 326.4M761.8 310.9 743.1 326.4M761.8 310.9 780.8 326.8M799.5 310.9 780.8 326.8M799.5 310.9 817.1 327.5M836.9 311.2 817.1 327.5M836.9 311.2 854.2 327.4M873.3 310.5 854.2 327.4M873.3 310.5 893.3 326.5M911.9 311.2 893.3 326.5M911.9 311.2 930.2 326.9M946.3 310.9 930.2 326.9M946.3 310.9 965.1 326.6M985.3 311.6 965.1 326.6M985.3 311.6 1001.6 327M1020.2 310.4 1001.6 327M1020.2 310.4 1039.7 327.4M1058.4 310.9 1039.7 327.4M1058.4 310.9 1078 326.4M1096.7 311.4 1078 326.4M1096.7 311.4 1113.7 326.9M1132 310.9 1113.7 326.9M1132 310.9 1150 326.7M1169.7 311.5 1150 326.7M1169.7 311.5 1187.3 327.2M1205.6 310.9 1187.3 327.2M261.8 327.2 281 342.5M298.6 327.6 281 342.5M298.6 327.6 317.7 342.9M337.1 327.1 317.7 342.9M337.1 327.1 355.7 342.7M372.8 326.7 355.7 342.7M372.8 326.7 393.1 342.6M410.9 327.5 393.1 342.6M410.9 327.5 430 343.1M448.1 326.7 430 343.1M448.1 326.7 465.5 343.3M486.4 327.2 465.5 343.3M486.4 327.2 503.2 343.1M522.1 326.6 503.2 343.1M522.1 326.6 540.8 343.2M558.4 327.5 540.8 343.2M558.4 327.5 577.3 342.4M594.9 327 577.3 342.4M594.9 327 615.3 343.5M633.4 326.8 615.3 343.5M633.4 326.8 651.5 343.1M670.8 327.5 651.5 343.1M670.8 327.5 687.8 343.5M708.1 327.3 687.8 343.5M708.1 327.3 726 342.6M743.1 326.4 726 342.6M743.1 326.4 763.4 343.6M780.8 326.8 763.4 343.6M780.8 326.8 799 343.6M817.1 327.5 799 343.6M817.1 327.5 836.5 342.6M854.2 327.4 836.5 342.6M854.2 327.4 874.1 342.8M893.3 326.5 874.1 342.8M893.3 326.5 911.2 343.1M930.2 326.9 911.2 343.1M930.2 326.9 946.3 343M965.1 326.6 946.3 343M965.1 326.6 985.5 343M1001.6 327 985.5 343M1001.6 327 1021.6 343.5M1039.7 327.4 1021.6 343.5M1039.7 327.4 1058.3 343M1078 326.4 1058.3 343M1078 326.4 1095.7 343.4M1113.7 326.9 1095.7 343.4M1113.7 326.9 1131.6 342.5M1150 326.7 1131.6 342.5M1150 326.7 1170.3 343.1M1187.3 327.2 1170.3 343.1M1187.3 327.2 1205.9 343.5M281 342.5 264.1 359.1M281 342.5 301.4 359.4M317.7 342.9 301.4 359.4M317.7 342.9 337.7 358.7M355.7 342.7 337.7 358.7M355.7 342.7 372.6 359.2M393.1 342.6 372.6 359.2M393.1 342.6 411.7 358.8M430 343.1 411.7 358.8M430 343.1 447.9 359.1M465.5 343.3 447.9 359.1M465.5 343.3 484.3 359.3M503.2 343.1 484.3 359.3M503.2 343.1 522.2 358.9M540.8 343.2 522.2 358.9M540.8 343.2 557.8 359.1M577.3 342.4 557.8 359.1M577.3 342.4 595.5 359.3M615.3 343.5 595.5 359.3M615.3 343.5 632 358.9M651.5 343.1 632 358.9M651.5 343.1 669.1 358.9M687.8 343.5 669.1 358.9M687.8 343.5 707.2 358.5M726 342.6 707.2 358.5M726 342.6 742.7 359M763.4 343.6 742.7 359M763.4 343.6 780.1 359M799 343.6 780.1 359M799 343.6 817 358.5M836.5 342.6 817 358.5M836.5 342.6 855.1 359.5M874.1 342.8 855.1 359.5M874.1 342.8 893.1 359M911.2 343.1 893.1 359M911.2 343.1 928.7 358.4M946.3 343 928.7 358.4M946.3 343 965.3 358.8M985.5 343 965.3 358.8M985.5 343 1004.3 358.5M1021.6 343.5 1004.3 358.5M1021.6 343.5 1041.3 359M1058.3 343 1041.3 359M1058.3 343 1076.8 358.7M1095.7 343.4 1076.8 358.7M1095.7 343.4 1115.4 358.6M1131.6 342.5 1115.4 358.6M1131.6 342.5 1151.2 359M1170.3 343.1 1151.2 359M1170.3 343.1 1187.1 358.6M1205.9 343.5 1187.1 358.6M264.1 359.1 282.9 375.4M301.4 359.4 282.9 375.4M301.4 359.4 319.2 375.5M337.7 358.7 319.2 375.5M337.7 358.7 354.3 375.3M372.6 359.2 354.3 375.3M372.6 359.2 393.2 374.6M411.7 358.8 393.2 374.6M411.7 358.8 429.4 375.6M447.9 359.1 429.4 375.6M447.9 359.1 466 375.3M484.3 359.3 466 375.3M484.3 359.3 502.5 375.2M522.2 358.9 502.5 375.2M522.2 358.9 539.8 375M557.8 359.1 539.8 375M557.8 359.1 577.1 375.5M595.5 359.3 577.1 375.5M595.5 359.3 615.2 375M632 358.9 615.2 375M632 358.9 652.1 374.9M669.1 358.9 652.1 374.9M669.1 358.9 689.4 374.7M707.2 358.5 689.4 374.7M707.2 358.5 725.6 375.1M742.7 359 725.6 375.1M742.7 359 762.2 374.4M780.1 359 762.2 374.4M780.1 359 798.5 375.2M817 358.5 798.5 375.2M817 358.5 835.6 375.3M855.1 359.5 835.6 375.3M855.1 359.5 873.5 375.6M893.1 359 873.5 375.6M893.1 359 911.5 375.3M928.7 358.4 911.5 375.3M928.7 358.4 947.1 374.4M965.3 358.8 947.1 374.4M965.3 358.8 984.7 375.3M1004.3 358.5 984.7 375.3M1004.3 358.5 1022.7 374.6M1041.3 359 1022.7 374.6M1041.3 359 1057.5 375.6M1076.8 358.7 1057.5 375.6M1076.8 358.7 1096.2 375M1115.4 358.6 1096.2 375M1115.4 358.6 1133.2 374.6M1151.2 359 1133.2 374.6M1151.2 359 1169.6 375.2M1187.1 358.6 1169.6 375.2M1187.1 358.6 1206.8 374.6M282.9 375.4 261.9 391.2M282.9 375.4 301.1 390.5M319.2 375.5 301.1 390.5M319.2 375.5 335.5 390.5M354.3 375.3 335.5 390.5M354.3 375.3 374.8 390.9M393.2 374.6 374.8 390.9M393.2 374.6 410.9 391.6M429.4 375.6 410.9 391.6M429.4 375.6 448.3 390.7M466 375.3 448.3 390.7M466 375.3 485.6 390.4M502.5 375.2 485.6 390.4M502.5 375.2 521.4 391.3M539.8 375 521.4 391.3M539.8 375 558 390.4M577.1 375.5 558 390.4M577.1 375.5 596.1 390.8M615.2 375 596.1 390.8M615.2 375 634.4 390.5M652.1 374.9 634.4 390.5M652.1 374.9 670.9 390.9M689.4 374.7 670.9 390.9M689.4 374.7 707.9 390.9M725.6 375.1 707.9 390.9M725.6 375.1 744.5 390.8M762.2 374.4 744.5 390.8M762.2 374.4 780.2 390.9M798.5 375.2 780.2 390.9M798.5 375.2 818.9 390.8M835.6 375.3 818.9 390.8M835.6 375.3 854.2 390.9M873.5 375.6 854.2 390.9M873.5 375.6 890.8 390.8M911.5 375.3 890.8 390.8M911.5 375.3 929.2 391.1M947.1 374.4 929.2 391.1M947.1 374.4 966.3 390.7M984.7 375.3 966.3 390.7M984.7 375.3 1001.6 390.4M1022.7 374.6 1001.6 390.4M1022.7 374.6 1039.5 390.6M1057.5 375.6 1039.5 390.6M1057.5 375.6 1077.2 390.7M1096.2 375 1077.2 390.7M1096.2 375 1114.8 391.1M1133.2 374.6 1114.8 391.1M1133.2 374.6 1151.5 391.3M1169.6 375.2 1151.5 391.3M1169.6 375.2 1188.1 390.9M1206.8 374.6 1188.1 390.9M261.9 391.2 280.9 406.4M301.1 390.5 280.9 406.4M301.1 390.5 319.4 407M335.5 390.5 319.4 407M335.5 390.5 354.3 407.5M374.8 390.9 354.3 407.5M374.8 390.9 392.7 407.2M410.9 391.6 392.7 407.2M410.9 391.6 429.3 406.5M448.3 390.7 429.3 406.5M448.3 390.7 468 406.6M485.6 390.4 468 406.6M485.6 390.4 503.1 407.6M521.4 391.3 503.1 407.6M521.4 391.3 539.4 407M558 390.4 539.4 407M558 390.4 577.4 406.7M596.1 390.8 577.4 406.7M596.1 390.8 615.8 406.9M634.4 390.5 615.8 406.9M634.4 390.5 650.1 407M670.9 390.9 650.1 407M670.9 390.9 687 407.3M707.9 390.9 687 407.3M707.9 390.9 726.6 407.5M744.5 390.8 726.6 407.5M744.5 390.8 761.2 407.2M780.2 390.9 761.2 407.2M780.2 390.9 798.9 407M818.9 390.8 798.9 407M818.9 390.8 835.9 406.8M854.2 390.9 835.9 406.8M854.2 390.9 872.4 407.2M890.8 390.8 872.4 407.2M890.8 390.8 909.3 407.6M929.2 391.1 909.3 407.6M929.2 391.1 946.1 407.6M966.3 390.7 946.1 407.6M966.3 390.7 983.6 406.5M1001.6 390.4 983.6 406.5M1001.6 390.4 1022.2 407M1039.5 390.6 1022.2 407M1039.5 390.6 1059.3 407M1077.2 390.7 1059.3 407M1077.2 390.7 1095.9 406.5M1114.8 391.1 1095.9 406.5M1114.8 391.1 1133 407M1151.5 391.3 1133 407M1151.5 391.3 1170.9 406.4M1188.1 390.9 1170.9 406.4M1188.1 390.9 1205.2 407.2M280.9 406.4 264.3 422.9M280.9 406.4 300.6 423.1M319.4 407 300.6 423.1M319.4 407 336.7 423M354.3 407.5 336.7 423M354.3 407.5 374.3 422.4M392.7 407.2 374.3 422.4M392.7 407.2 410.4 423.3M429.3 406.5 410.4 423.3M429.3 406.5 447.3 423M468 406.6 447.3 423M468 406.6 484.3 422.8M503.1 407.6 484.3 422.8M503.1 407.6 522.4 423.3M539.4 407 522.4 423.3M539.4 407 560.4 423M577.4 406.7 560.4 423M577.4 406.7 595.1 422.8M615.8 406.9 595.1 422.8M615.8 406.9 631.7 422.7M650.1 407 631.7 422.7M650.1 407 670.3 423.1M687 407.3 670.3 423.1M687 407.3 706.2 422.6M726.6 407.5 706.2 422.6M726.6 407.5 742.8 422.6M761.2 407.2 742.8 422.6M761.2 407.2 781 422.7M798.9 407 781 422.7M798.9 407 819.1 423.1M835.9 406.8 819.1 423.1M835.9 406.8 854.5 422.9M872.4 407.2 854.5 422.9M872.4 407.2 890.6 423.3M909.3 407.6 890.6 423.3M909.3 407.6 929.7 422.8M946.1 407.6 929.7 422.8M946.1 407.6 966.7 422.7M983.6 406.5 966.7 422.7M983.6 406.5 1002.2 422.7M1022.2 407 1002.2 422.7M1022.2 407 1039.1 423.1M1059.3 407 1039.1 423.1M1059.3 407 1077.4 423.3M1095.9 406.5 1077.4 423.3M1095.9 406.5 1112.8 423.3M1133 407 1112.8 423.3M1133 407 1150.9 422.8M1170.9 406.4 1150.9 422.8M1170.9 406.4 1188 422.9M1205.2 407.2 1188 422.9M264.3 422.9 280.6 438.9M300.6 423.1 280.6 438.9M300.6 423.1 318.9 439.3M336.7 423 318.9 439.3M336.7 423 356.7 438.6M374.3 422.4 356.7 438.6M374.3 422.4 393.7 439.4M410.4 423.3 393.7 439.4M410.4 423.3 430.1 439.6M447.3 423 430.1 439.6M447.3 423 465.4 439.4M484.3 422.8 465.4 439.4M484.3 422.8 504.7 438.5M522.4 423.3 504.7 438.5M522.4 423.3 540.8 439.6M560.4 423 540.8 439.6M560.4 423 576.9 439.5M595.1 422.8 576.9 439.5M595.1 422.8 615.7 438.9M631.7 422.7 615.7 438.9M631.7 422.7 650.4 438.6M670.3 423.1 650.4 438.6M670.3 423.1 689.5 438.9M706.2 422.6 689.5 438.9M706.2 422.6 725 438.9M742.8 422.6 725 438.9M742.8 422.6 763.8 438.7M781 422.7 763.8 438.7M781 422.7 798.1 439.6M819.1 423.1 798.1 439.6M819.1 423.1 836 438.9M854.5 422.9 836 438.9M854.5 422.9 874.9 438.7M890.6 423.3 874.9 438.7M890.6 423.3 909.3 439.5M929.7 422.8 909.3 439.5M929.7 422.8 946.7 438.6M966.7 422.7 946.7 438.6M966.7 422.7 985.8 438.7M1002.2 422.7 985.8 438.7M1002.2 422.7 1022.7 438.8M1039.1 423.1 1022.7 438.8M1039.1 423.1 1057.9 438.6M1077.4 423.3 1057.9 438.6M1077.4 423.3 1095.6 439.1M1112.8 423.3 1095.6 439.1M1112.8 423.3 1132.2 439M1150.9 422.8 1132.2 439M1150.9 422.8 1168.9 439.4M1188 422.9 1168.9 439.4M1188 422.9 1207.8 439.3M280.6 438.9 263.9 454.5M280.6 438.9 299.3 454.6M318.9 439.3 299.3 454.6M318.9 439.3 336 455.6M356.7 438.6 336 455.6M356.7 438.6 375.2 455.5M393.7 439.4 375.2 455.5M393.7 439.4 411.2 454.5M430.1 439.6 411.2 454.5M430.1 439.6 447.8 454.4M465.4 439.4 447.8 454.4M465.4 439.4 486.2 454.7M504.7 438.5 486.2 454.7M504.7 438.5 521.4 455.6M540.8 439.6 521.4 455.6M540.8 439.6 558.1 455.5M576.9 439.5 558.1 455.5M576.9 439.5 595.4 455.2M615.7 438.9 595.4 455.2M615.7 438.9 631.8 455.5M650.4 438.6 631.8 455.5M650.4 438.6 669.7 454.8M689.5 438.9 669.7 454.8M689.5 438.9 707.5 455.1M725 438.9 707.5 455.1M725 438.9 743.3 454.5M763.8 438.7 743.3 454.5M763.8 438.7 781.2 454.4M798.1 439.6 781.2 454.4M798.1 439.6 819.1 454.8M836 438.9 819.1 454.8M836 438.9 854 454.8M874.9 438.7 854 454.8M874.9 438.7 890.9 454.8M909.3 439.5 890.9 454.8M909.3 439.5 929.1 454.9M946.7 438.6 929.1 454.9M946.7 438.6 965.5 454.7M985.8 438.7 965.5 454.7M985.8 438.7 1003 455.4M1022.7 438.8 1003 455.4M1022.7 438.8 1039.8 455.3M1057.9 438.6 1039.8 455.3M1057.9 438.6 1076.9 454.5M1095.6 439.1 1076.9 454.5M1095.6 439.1 1113 455.4M1132.2 439 1113 455.4M1132.2 439 1150.9 454.8M1168.9 439.4 1150.9 454.8M1168.9 439.4 1188 455.4M1207.8 439.3 1188 455.4M263.9 454.5 281.1 470.8M299.3 454.6 281.1 470.8M299.3 454.6 318.1 470.4M336 455.6 318.1 470.4M336 455.6 355.6 471M375.2 455.5 355.6 471M375.2 455.5 392.5 470.9M411.2 454.5 392.5 470.9M411.2 454.5 429.4 471.3M447.8 454.4 429.4 471.3M447.8 454.4 465.6 471.6M486.2 454.7 465.6 471.6M486.2 454.7 502.4 471.5M521.4 455.6 502.4 471.5M521.4 455.6 539.5 471.4M558.1 455.5 539.5 471.4M558.1 455.5 576.8 470.5M595.4 455.2 576.8 470.5M595.4 455.2 614.6 471.4M631.8 455.5 614.6 471.4M631.8 455.5 652.5 471.5M669.7 454.8 652.5 471.5M669.7 454.8 689.9 470.4M707.5 455.1 689.9 470.4M707.5 455.1 725.1 470.5M743.3 454.5 725.1 470.5M743.3 454.5 763.3 470.9M781.2 454.4 763.3 470.9M781.2 454.4 800.2 471.4M819.1 454.8 800.2 471.4M819.1 454.8 838 471.2M854 454.8 838 471.2M854 454.8 874.6 471.1M890.9 454.8 874.6 471.1M890.9 454.8 909.3 471.5M929.1 454.9 909.3 471.5M929.1 454.9 946.3 470.5M965.5 454.7 946.3 470.5M965.5 454.7 985.5 470.7M1003 455.4 985.5 470.7M1003 455.4 1022 470.4M1039.8 455.3 1022 470.4M1039.8 455.3 1057.6 471.3M1076.9 454.5 1057.6 471.3M1076.9 454.5 1094.1 471M1113 455.4 1094.1 471M1113 455.4 1133.8 470.6M1150.9 454.8 1133.8 470.6M1150.9 454.8 1170.1 471.3M1188 455.4 1170.1 471.3M1188 455.4 1206.9 471.3M281.1 470.8 263.6 486.4M281.1 470.8 299.1 487M318.1 470.4 299.1 487M318.1 470.4 338.4 486.6M355.6 471 338.4 486.6M355.6 471 374.3 486.5M392.5 470.9 374.3 486.5M392.5 470.9 412 486.9M429.4 471.3 412 486.9M429.4 471.3 448.1 487.2M465.6 471.6 448.1 487.2M465.6 471.6 483.9 487.3M502.4 471.5 483.9 487.3M502.4 471.5 522.9 487.5M539.5 471.4 522.9 487.5M539.5 471.4 558.4 486.7M576.8 470.5 558.4 486.7M576.8 470.5 595 487.5M614.6 471.4 595 487.5M614.6 471.4 632.8 486.9M652.5 471.5 632.8 486.9M652.5 471.5 670.1 487.3M689.9 470.4 670.1 487.3M689.9 470.4 706.5 486.8M725.1 470.5 706.5 486.8M725.1 470.5 744.8 487.4M763.3 470.9 744.8 487.4M763.3 470.9 780.4 486.5M800.2 471.4 780.4 486.5M800.2 471.4 819.3 487.3M838 471.2 819.3 487.3M838 471.2 855.3 486.9M874.6 471.1 855.3 486.9M874.6 471.1 893.4 486.9M909.3 471.5 893.4 486.9M909.3 471.5 928.2 486.5M946.3 470.5 928.2 486.5M946.3 470.5 965.6 487.1M985.5 470.7 965.6 487.1M985.5 470.7 1002.6 487.6M1022 470.4 1002.6 487.6M1022 470.4 1040.4 486.9M1057.6 471.3 1040.4 486.9M1057.6 471.3 1077.5 487.1M1094.1 471 1077.5 487.1M1094.1 471 1114.3 487M1133.8 470.6 1114.3 487M1133.8 470.6 1151.1 487M1170.1 471.3 1151.1 487M1170.1 471.3 1189 486.6M1206.9 471.3 1189 486.6M263.6 486.4 282.3 502.7M299.1 487 282.3 502.7M299.1 487 319.5 502.5M338.4 486.6 319.5 502.5M338.4 486.6 355.5 502.9M374.3 486.5 355.5 502.9M374.3 486.5 393.1 502.6M412 486.9 393.1 502.6M412 486.9 428.8 502.5M448.1 487.2 428.8 502.5M448.1 487.2 466.7 503.1M483.9 487.3 466.7 503.1M483.9 487.3 502 502.6M522.9 487.5 502 502.6M522.9 487.5 539.6 503.6M558.4 486.7 539.6 503.6M558.4 486.7 577.4 503.1M595 487.5 577.4 503.1M595 487.5 613.9 503.2M632.8 486.9 613.9 503.2M632.8 486.9 652.4 503.2M670.1 487.3 652.4 503.2M670.1 487.3 687 502.9M706.5 486.8 687 502.9M706.5 486.8 725.5 502.4M744.8 487.4 725.5 502.4M744.8 487.4 763.4 502.8M780.4 486.5 763.4 502.8M780.4 486.5 798.9 503.2M819.3 487.3 798.9 503.2M819.3 487.3 836.8 503M855.3 486.9 836.8 503M855.3 486.9 874.6 503M893.4 486.9 874.6 503M893.4 486.9 910 502.4M928.2 486.5 910 502.4M928.2 486.5 947.7 502.8M965.6 487.1 947.7 502.8M965.6 487.1 984.6 502.8M1002.6 487.6 984.6 502.8M1002.6 487.6 1020 502.4M1040.4 486.9 1020 502.4M1040.4 486.9 1057.5 502.5M1077.5 487.1 1057.5 502.5M1077.5 487.1 1096.5 503.1M1114.3 487 1096.5 503.1M1114.3 487 1131.7 503.3M1151.1 487 1131.7 503.3M1151.1 487 1169.9 502.4M1189 486.6 1169.9 502.4M1189 486.6 1207.2 502.7M282.3 502.7 264.5 518.5M282.3 502.7 299.4 518.7M319.5 502.5 299.4 518.7M319.5 502.5 338.1 519.4M355.5 502.9 338.1 519.4M355.5 502.9 374.2 518.6M393.1 502.6 374.2 518.6M393.1 502.6 410.8 519.3M428.8 502.5 410.8 519.3M428.8 502.5 446.7 519.5M466.7 503.1 446.7 519.5M466.7 503.1 486 519.6M502 502.6 486 519.6M502 502.6 522.6 519.2M539.6 503.6 522.6 519.2M539.6 503.6 560.4 518.7M577.4 503.1 560.4 518.7M577.4 503.1 595.4 518.5M613.9 503.2 595.4 518.5M613.9 503.2 632.1 519.4M652.4 503.2 632.1 519.4M652.4 503.2 668.8 519.3M687 502.9 668.8 519.3M687 502.9 706.7 519.5M725.5 502.4 706.7 519.5M725.5 502.4 744.8 519.2M763.4 502.8 744.8 519.2M763.4 502.8 782 518.4M798.9 503.2 782 518.4M798.9 503.2 817.3 518.8M836.8 503 817.3 518.8M836.8 503 854.8 519.2M874.6 503 854.8 519.2M874.6 503 893.1 519.3M910 502.4 893.1 519.3M910 502.4 930.3 519.3M947.7 502.8 930.3 519.3M947.7 502.8 965.6 519M984.6 502.8 965.6 519M984.6 502.8 1003.7 519.4M1020 502.4 1003.7 519.4M1020 502.4 1039.6 518.8M1057.5 502.5 1039.6 518.8M1057.5 502.5 1077.3 518.7M1096.5 503.1 1077.3 518.7M1096.5 503.1 1115.1 518.4M1131.7 503.3 1115.1 518.4M1131.7 503.3 1151.4 519M1169.9 502.4 1151.4 519M1169.9 502.4 1187.1 519.1M1207.2 502.7 1187.1 519.1M264.5 518.5 281.4 535.6M299.4 518.7 281.4 535.6M299.4 518.7 319.6 535.1M338.1 519.4 319.6 535.1M338.1 519.4 356.6 535.5M374.2 518.6 356.6 535.5M374.2 518.6 391.5 535.4M410.8 519.3 391.5 535.4M410.8 519.3 430.5 535.6M446.7 519.5 430.5 535.6M446.7 519.5 467.3 534.9M486 519.6 467.3 534.9M486 519.6 502.6 535.2M522.6 519.2 502.6 535.2M522.6 519.2 539.6 535.3M560.4 518.7 539.6 535.3M560.4 518.7 577.7 535.4M595.4 518.5 577.7 535.4M595.4 518.5 614.1 534.7M632.1 519.4 614.1 534.7M632.1 519.4 652.7 535.2M668.8 519.3 652.7 535.2M668.8 519.3 688.1 535.1M706.7 519.5 688.1 535.1M706.7 519.5 725.3 535.2M744.8 519.2 725.3 535.2M744.8 519.2 762.5 534.7M782 518.4 762.5 534.7M782 518.4 800.9 535.5M817.3 518.8 800.9 535.5M817.3 518.8 837.3 534.7M854.8 519.2 837.3 534.7M854.8 519.2 872.6 535.3M893.1 519.3 872.6 535.3M893.1 519.3 911.5 535.2M930.3 519.3 911.5 535.2M930.3 519.3 946.7 535.3M965.6 519 946.7 535.3M965.6 519 984.6 534.8M1003.7 519.4 984.6 534.8M1003.7 519.4 1021.8 534.9M1039.6 518.8 1021.8 534.9M1039.6 518.8 1058.9 535.3M1077.3 518.7 1058.9 535.3M1077.3 518.7 1096.9 534.5M1115.1 518.4 1096.9 534.5M1115.1 518.4 1132.7 535.6M1151.4 519 1132.7 535.6M1151.4 519 1170 535.1M1187.1 519.1 1170 535.1M1187.1 519.1 1207.5 534.4M281.4 535.6 263.9 551.2M281.4 535.6 300.2 550.8M319.6 535.1 300.2 550.8M319.6 535.1 337.4 550.5M356.6 535.5 337.4 550.5M356.6 535.5 374.1 550.7M391.5 535.4 374.1 550.7M391.5 535.4 412.3 551.4M430.5 535.6 412.3 551.4M430.5 535.6 447.9 551.3M467.3 534.9 447.9 551.3M467.3 534.9 484.7 551M502.6 535.2 484.7 551M502.6 535.2 521 551.5M539.6 535.3 521 551.5M539.6 535.3 559.8 551.3M577.7 535.4 559.8 551.3M577.7 535.4 594.8 551.4M614.1 534.7 594.8 551.4M614.1 534.7 631.6 551.1M652.7 535.2 631.6 551.1M652.7 535.2 670 550.4M688.1 535.1 670 550.4M688.1 535.1 706.8 551.5M725.3 535.2 706.8 551.5M725.3 535.2 744.4 550.8M762.5 534.7 744.4 550.8M762.5 534.7 781.9 550.8M800.9 535.5 781.9 550.8M800.9 535.5 819.2 550.9M837.3 534.7 819.2 550.9M837.3 534.7 853.7 551.6M872.6 535.3 853.7 551.6M872.6 535.3 890.7 550.7M911.5 535.2 890.7 550.7M911.5 535.2 929.8 550.5M946.7 535.3 929.8 550.5M946.7 535.3 966.1 551.5M984.6 534.8 966.1 551.5M984.6 534.8 1003.3 550.8M1021.8 534.9 1003.3 550.8M1021.8 534.9 1040.8 551.4M1058.9 535.3 1040.8 551.4M1058.9 535.3 1077.2 551.2M1096.9 534.5 1077.2 551.2M1096.9 534.5 1113.5 550.9M1132.7 535.6 1113.5 550.9M1132.7 535.6 1152.5 551.6M1170 535.1 1152.5 551.6M1170 535.1 1186.5 550.6M1207.5 534.4 1186.5 550.6M263.9 551.2 280.7 567.4M300.2 550.8 280.7 567.4M300.2 550.8 317.6 566.6M337.4 550.5 317.6 566.6M337.4 550.5 356.3 566.6M374.1 550.7 356.3 566.6M374.1 550.7 393.9 566.9M412.3 551.4 393.9 566.9M412.3 551.4 430.7 567.4M447.9 551.3 430.7 567.4M447.9 551.3 465.6 567.4M484.7 551 465.6 567.4M484.7 551 503.2 566.6M521 551.5 503.2 566.6M521 551.5 539.2 567.3M559.8 551.3 539.2 567.3M559.8 551.3 577.7 566.7M594.8 551.4 577.7 566.7M594.8 551.4 615.5 566.6M631.6 551.1 615.5 566.6M631.6 551.1 651.3 566.5M670 550.4 651.3 566.5M670 550.4 688.1 567.5M706.8 551.5 688.1 567.5M706.8 551.5 725.5 566.6M744.4 550.8 725.5 566.6M744.4 550.8 761.7 567.2M781.9 550.8 761.7 567.2M781.9 550.8 798.8 567.5M819.2 550.9 798.8 567.5M819.2 550.9 835.2 567.5M853.7 551.6 835.2 567.5M853.7 551.6 873.9 567.4M890.7 550.7 873.9 567.4M890.7 550.7 910.1 566.4M929.8 550.5 910.1 566.4M929.8 550.5 946.5 567.2M966.1 551.5 946.5 567.2M966.1 551.5 983.1 566.5M1003.3 550.8 983.1 566.5M1003.3 550.8 1022.3 567.5M1040.8 551.4 1022.3 567.5M1040.8 551.4 1059.6 567.4M1077.2 551.2 1059.6 567.4M1077.2 551.2 1095.7 567.5M1113.5 550.9 1095.7 567.5M1113.5 550.9 1133.1 567.1M1152.5 551.6 1133.1 567.1M1152.5 551.6 1169.3 566.4M1186.5 550.6 1169.3 566.4M1186.5 550.6 1205.3 566.7" fill="none" stroke="#000" stroke-width="1" shape-rendering="crispEdges"/></g></g><g clip-path="url(#ctopall)"><g clip-path="url(#hot1)"><g clip-path="url(#nothot2)"><path d="M680.9 378.3 701.8 380.2 719.9 381.7 737 382.7 758.7 382.4 774.6 384.4 796.5 385.3 813.7 385.9 831.5 386.1 851.7 388.1 869.4 389.4 888.2 390.4 908 391.1 929.2 392.3 946.9 392.7 965.2 394 983.5 395 1004.4 394.3 1024.7 395.8 1040.4 396.6 1059.2 397.6 1080.8 400 1099.5 400.7 1119.2 401.3 1136.6 401.4M689.2 389.6 708.4 391 727.8 391.6 747.7 392.6 765.2 392.8 786.2 393.7 805.2 396.2 823.1 397.1 842.9 398 861.6 398.6 881.2 398.4 899.6 400.1 918.4 401.2 939.1 402.5 957.7 402.1 976.3 404 996.2 403.7 1012.3 406.6 1032 407 1051.8 407.4 1070.3 408.6 1091.3 409.5 1109.6 410 1128.3 411.6 1147.4 413.1M679.4 400 700.4 399.5 718.9 400.1 737 402.6 757.8 403.6 774.7 403 794.5 404.7 814.8 405.3 833.9 406.8 851.2 408.2 869.4 408.7 888.8 408.6 908.9 410.5 928.4 411.2 948.6 412.9 964.7 412.3 986.8 414.1 1002.5 414.6 1023.8 415.5 1041.5 417.5 1060.4 418.4 1081.7 419.6 1099.5 420.2 1117.3 421.2 1137.6 422M690.5 410 708.4 410.9 730.3 410.5 746.6 413.3 764.9 414 785.8 413.4 805 414.2 824.8 415.8 844.1 417.9 860.1 417.9 879.2 419.5 898 419.1 917 421.6 936.5 421.5 956.3 422.9 975.2 424.7 993.9 424.7 1014.9 425.2 1031.3 427.3 1050.8 428.4 1071.7 428.3 1088.9 428.7 1109.9 430.3 1126.9 430.7 1145.5 433.1M679.6 419.2 700.5 420 719 420.7 736.8 422.5 758.5 423 775.1 424.6 793.9 424.1 814.5 426.4 833.3 425.9 853.8 426.9 870.4 429.5 891.1 430 907.4 431.2 927.6 430.4 948.1 433.2 964.3 433.2 986.5 433.9 1003.3 435.8 1022.8 437.1 1043.4 437.8 1061.8 437.4 1080.7 439.2 1098.9 440.1 1117.3 440.3 1138.6 441.6M689 430.5 709.5 430.8 727.9 430.7 746.9 433 765.6 434.1 784.8 435.1 803.3 435.1 822.1 435.5 842.6 436.9 861.6 437.5 879.8 438.7 901 439.1 918.2 441.6 937.8 441.4 958.4 442 974.1 442.8 994.3 445.4 1012.7 445.2 1033.6 445.8 1049.7 447.9 1068.9 448.6 1088.2 449.7 1109.8 450.3 1126.6 451.6 1147.3 451.4M680 438.8 700 439.5 719.6 440.5 739.5 441.6 755.9 442 774.6 443.2 796.5 444.6 813.8 446.6 834.8 447.2 851 447.3 871 448.1 889.4 448.9 908 450.9 928.4 451.3 946.9 452.6 966.7 452.3 986.3 454.2 1003.4 456.1 1024 455.9 1040.2 457 1060.8 457.8 1078.5 459.2 1098.1 460.5 1118.1 460.5 1138.2 461.7M688.9 449.1 707.8 450.3 730.1 452.3 748.1 451.7 765.5 452.7 785 454.6 802.7 455.2 823.2 456.5 843.7 456.9 861.9 457.6 880.3 459.3 897.8 460 918.5 460.3 936.5 462.5 955.9 462.2 974.7 463.8 994.1 464.4 1012.8 465.1 1032.5 466.8 1049.9 467.8 1069.8 469.5 1091.2 468.7 1109.2 470.1 1126 472.1 1148.1 472.9M681.5 460 700.2 460.4 719.6 461.7 739.4 461.5 755.9 462.9 776.3 463.5 796.4 465.4 814.7 465.8 833.7 466 853.2 466.9 872.5 468.8 889.2 468.9 909.4 470.4 928.7 470.6 948.4 472.2 965.8 473.8 985.4 474.1 1003.2 475.1 1021.2 475.7 1043.2 476.3 1059.4 478.7 1079.5 479.1 1099.3 480.4 1117.3 481.4 1135.1 482.5M689.8 469.8 708.8 471 728 471.6 746.8 473 767.6 472.7 786.5 475.2 803.5 474.6 825.1 477.1 841.1 477.7 863.1 477.6 881.6 478.6 900.6 480 918.4 480.2 938.1 482.3 955.7 481.9 973.9 483.3 996.4 485.2 1015 486.2 1031.1 486.4 1053.2 488.3 1072.4 489.2 1090.3 490 1110.1 490.3 1125.7 491 1144.7 491.9M681.3 478.6 699 479.2 718.5 481 738.3 482.8 755.4 482.4 774.4 484.7 795.5 485.1 815.2 484.7 834.5 486.3 852.5 487.4 871.9 488.2 889.2 489 909.9 490.4 926.7 491.1 947.3 492.1 966.4 494 985.5 494.9 1003.3 495.9 1024.7 496.2 1040.2 496.3 1062 498.8 1080.9 499 1099.2 499.2 1118.4 501.9 1135.9 502.1M691.8 489.8 708.9 490 729.4 492.3 748.9 492.2 767.4 493.9 785 494.8 804.1 494.6 821.6 496.6 843.5 496.2 859.8 497.7 879.4 499.5 898.3 500.1 918.7 500.6 938.8 501.7 956.5 503.2 975.1 503.1 996.2 505.2 1013.7 505.7 1032.9 506.2 1049.9 507.7 1072 507.7 1091.3 509.2 1110.4 511 1126.6 510.8 1148 513.3M682.2 499.2 700.2 500.6 720.2 501.6 737.2 502.6 758.7 503 774.1 503.2 795.6 504.6 815.6 506 833.8 506 852.1 508 872.6 509.4 889.1 509.5 910.8 509.6 926.4 510.8 947.9 512 966.8 514 986.2 513.3 1004.7 515.8 1023.8 516.9 1043.2 517.3 1062.4 518.1 1078.5 518.6 1100.6 519.6 1117.9 521.6 1137.7 522.4M690.4 509.5 707.9 509.9 727.2 511.5 747.6 511.5 767 512.5 785.1 513.3 804.4 514.5 825.2 515.9 843.8 517 860.8 518.8 879.6 519.1 900 521 919.3 520 937.3 522.8 957.8 522.6 974.1 523.3 995.5 524.1 1015 525.2 1033.2 527 1050.5 527.6 1071 528.1 1089.6 529.7 1110.2 530 1126.3 531.4 1146.9 532.3M682.6 518.5 700 519.9 717.9 520.9 737.8 521.7 758 523.8 777.8 523.2 794.5 525.6 812.4 524.9 831.3 527.6 852 527.5 869.5 529.3 891.9 529.9 910.6 530.6 927.3 530.8 946.3 531.6 965.5 532.4 983.3 535 1005.3 535.8 1022.4 536.1 1042.2 537.7 1060.3 538.1 1080.2 539.7 1098.4 539 1117.6 541.7 1135.8 542.1M689.1 529.1 710 529.7 728.3 531.6 747.1 532.9 767.8 532.9 786.5 534.8 804.9 535.4 823.8 536.7 843.2 536.7 862.1 538.5 880.4 539.8 898.8 540.1 918.8 541.1 936.3 542.2 955 542.9 975.3 544.2 995.9 545.7 1012.5 546.5 1032.4 546.6 1049.8 548.3 1069.5 548.1 1088.8 548.9 1107.7 550 1127.6 551.1 1147.5 553.2M682.6 538.8 700.7 540.5 719.9 540.7 736.8 542.4 757.6 542.6 776.6 542.9 796.1 545.5 815.8 544.9 833.7 547.2 850.6 547.8 869.8 548 888.2 549.1 910.3 550.6 929.1 552.3 945.7 553 967.5 553.6 984.4 553.6 1003.8 554.9 1022.1 556.5 1042.5 556.6 1059.8 558 1080.8 559.3 1099.5 560.7 1119 560.8 1137.9 562.2M689.9 548.9 709 550.9 729.5 551 747.7 551.5 766.9 553.2 786.5 555 802.8 556.2 822.3 557.1 844.3 556.6 860.7 557.4 882.1 559.5 901.3 560.6 918 561.5 937 561.5 956.2 563.2 974.8 563.9 994.8 565.3 1013.4 565.5 1032.7 566.5 1052.4 566.8 1069.3 567.6 1089.2 570.2 1108.9 570.7 1129.2 572 1145.7 571.8M681.1 558.5 700.4 559.2 718.6 561.4 737.1 561.2 757.9 562.2 777.5 564 796.5 564.8 814 565.2 831.3 567.6 850.9 566.8 872.6 568.6 890.3 570.3 909.9 570 927.2 571.7 947.7 571.8 965 573.3 983.3 574.9 1004.6 574.5 1023.3 576.3 1040.4 577 1062.1 578 1080.9 578.5 1100.9 580.3 1118.2 579.9 1136.5 580.9M690.3 568.9 708.5 570.1 727.1 571 747.5 571.6 766.7 574.2 786.3 575.2 803 575.5 822.5 577 842.5 577.6 862.5 577.3 879 579.6 900.7 579.8 916.7 580 938.6 582.3 956 583.2 976.7 582.8 995.4 585.7 1014.9 586.4 1032.3 586.8 1050 588.2 1071.1 588.3 1087.8 588.8 1108.1 591.3 1127.4 592.1 1145.3 591.8M680 578.6 701.1 579.7 718.3 581.3 737.8 582.7 757.7 583.5 775.7 583.6 794.8 585.7 815.7 585.8 833 585.8 853.4 587.8 870.7 587.9 889.9 589.9 908.1 590 928 591.4 945.1 591.5 965.5 593.7 984.6 593.3 1003 594.6 1024 595.6 1043.8 596.7 1059.8 597.1 1080 599 1100.1 600.3 1118.2 600 1138.6 601.3M689.5 588.9 709.8 590.8 727.8 590.9 745.6 592.6 767.3 592.6 784.5 594.8 805.3 594.5 825.4 596.6 843.3 596.8 863.3 598 881 600 900.8 599.3 917.1 600.3 936.1 602.6 956.7 602.8 975 603.8 994.3 605.2 1013.2 606.4 1033.8 607.4 1052.4 606.9 1070.2 609.2 1089 609.6 1107.4 611.1 1126.9 611.1 1147.7 611.5M679.1 598.9 699.8 599.2 718.6 601.5 739.5 602.7 758.1 602 775.5 603.7 793.2 605.3 813.2 606.3 833.7 606.2 851.4 607.5 869.8 607.6 889.7 609 908.1 611 928.9 611.2 945.2 612.9 965.1 612.5 986 615.1 1003.1 615.3 1024.5 616.2 1041.4 616.4 1059.2 618.8 1081.2 618.4 1099.6 619.3 1118.9 620.7 1137.7 621.9M688.9 609.7 710.1 609.6 726.7 611 748.3 613.3 766.3 614 786.3 613.8 804.3 615.9 823.4 616.2 843.3 616.4 861.3 618.1 880.8 619.4 898.6 619.9 918.4 620.1 938.6 622.8 956.7 622.6 975 623.7 994 624.3 1015.2 625.4 1031.4 626.9 1049.6 627.3 1070.7 629.2 1088.8 628.6 1110.3 629.4 1127.2 631.4 1148.4 632M680 618.6 699.5 619.3 720.5 621 738.9 621.5 757.6 623.7 775 624.7 794.2 625.2 815.7 625.6 834.6 626.4 851.8 628.4 871.4 627.7 888.7 629.6 908.4 629.6 929.2 631.1 948.5 632.1 964.8 633.1 986.2 635.1 1004.2 634.7 1023.1 635.7 1041.5 636.1 1059.2 638.9 1081 638.5 1099.4 639 1119.2 641.1 1137.8 641.7M680.9 378.3 689.2 389.6M701.8 380.2 689.2 389.6M701.8 380.2 708.4 391M719.9 381.7 708.4 391M719.9 381.7 727.8 391.6M737 382.7 727.8 391.6M737 382.7 747.7 392.6M758.7 382.4 747.7 392.6M758.7 382.4 765.2 392.8M774.6 384.4 765.2 392.8M774.6 384.4 786.2 393.7M796.5 385.3 786.2 393.7M796.5 385.3 805.2 396.2M813.7 385.9 805.2 396.2M813.7 385.9 823.1 397.1M831.5 386.1 823.1 397.1M831.5 386.1 842.9 398M851.7 388.1 842.9 398M851.7 388.1 861.6 398.6M869.4 389.4 861.6 398.6M869.4 389.4 881.2 398.4M888.2 390.4 881.2 398.4M888.2 390.4 899.6 400.1M908 391.1 899.6 400.1M908 391.1 918.4 401.2M929.2 392.3 918.4 401.2M929.2 392.3 939.1 402.5M946.9 392.7 939.1 402.5M946.9 392.7 957.7 402.1M965.2 394 957.7 402.1M965.2 394 976.3 404M983.5 395 976.3 404M983.5 395 996.2 403.7M1004.4 394.3 996.2 403.7M1004.4 394.3 1012.3 406.6M1024.7 395.8 1012.3 406.6M1024.7 395.8 1032 407M1040.4 396.6 1032 407M1040.4 396.6 1051.8 407.4M1059.2 397.6 1051.8 407.4M1059.2 397.6 1070.3 408.6M1080.8 400 1070.3 408.6M1080.8 400 1091.3 409.5M1099.5 400.7 1091.3 409.5M1099.5 400.7 1109.6 410M1119.2 401.3 1109.6 410M1119.2 401.3 1128.3 411.6M1136.6 401.4 1128.3 411.6M1136.6 401.4 1147.4 413.1M689.2 389.6 679.4 400M689.2 389.6 700.4 399.5M708.4 391 700.4 399.5M708.4 391 718.9 400.1M727.8 391.6 718.9 400.1M727.8 391.6 737 402.6M747.7 392.6 737 402.6M747.7 392.6 757.8 403.6M765.2 392.8 757.8 403.6M765.2 392.8 774.7 403M786.2 393.7 774.7 403M786.2 393.7 794.5 404.7M805.2 396.2 794.5 404.7M805.2 396.2 814.8 405.3M823.1 397.1 814.8 405.3M823.1 397.1 833.9 406.8M842.9 398 833.9 406.8M842.9 398 851.2 408.2M861.6 398.6 851.2 408.2M861.6 398.6 869.4 408.7M881.2 398.4 869.4 408.7M881.2 398.4 888.8 408.6M899.6 400.1 888.8 408.6M899.6 400.1 908.9 410.5M918.4 401.2 908.9 410.5M918.4 401.2 928.4 411.2M939.1 402.5 928.4 411.2M939.1 402.5 948.6 412.9M957.7 402.1 948.6 412.9M957.7 402.1 964.7 412.3M976.3 404 964.7 412.3M976.3 404 986.8 414.1M996.2 403.7 986.8 414.1M996.2 403.7 1002.5 414.6M1012.3 406.6 1002.5 414.6M1012.3 406.6 1023.8 415.5M1032 407 1023.8 415.5M1032 407 1041.5 417.5M1051.8 407.4 1041.5 417.5M1051.8 407.4 1060.4 418.4M1070.3 408.6 1060.4 418.4M1070.3 408.6 1081.7 419.6M1091.3 409.5 1081.7 419.6M1091.3 409.5 1099.5 420.2M1109.6 410 1099.5 420.2M1109.6 410 1117.3 421.2M1128.3 411.6 1117.3 421.2M1128.3 411.6 1137.6 422M1147.4 413.1 1137.6 422M679.4 400 690.5 410M700.4 399.5 690.5 410M700.4 399.5 708.4 410.9M718.9 400.1 708.4 410.9M718.9 400.1 730.3 410.5M737 402.6 730.3 410.5M737 402.6 746.6 413.3M757.8 403.6 746.6 413.3M757.8 403.6 764.9 414M774.7 403 764.9 414M774.7 403 785.8 413.4M794.5 404.7 785.8 413.4M794.5 404.7 805 414.2M814.8 405.3 805 414.2M814.8 405.3 824.8 415.8M833.9 406.8 824.8 415.8M833.9 406.8 844.1 417.9M851.2 408.2 844.1 417.9M851.2 408.2 860.1 417.9M869.4 408.7 860.1 417.9M869.4 408.7 879.2 419.5M888.8 408.6 879.2 419.5M888.8 408.6 898 419.1M908.9 410.5 898 419.1M908.9 410.5 917 421.6M928.4 411.2 917 421.6M928.4 411.2 936.5 421.5M948.6 412.9 936.5 421.5M948.6 412.9 956.3 422.9M964.7 412.3 956.3 422.9M964.7 412.3 975.2 424.7M986.8 414.1 975.2 424.7M986.8 414.1 993.9 424.7M1002.5 414.6 993.9 424.7M1002.5 414.6 1014.9 425.2M1023.8 415.5 1014.9 425.2M1023.8 415.5 1031.3 427.3M1041.5 417.5 1031.3 427.3M1041.5 417.5 1050.8 428.4M1060.4 418.4 1050.8 428.4M1060.4 418.4 1071.7 428.3M1081.7 419.6 1071.7 428.3M1081.7 419.6 1088.9 428.7M1099.5 420.2 1088.9 428.7M1099.5 420.2 1109.9 430.3M1117.3 421.2 1109.9 430.3M1117.3 421.2 1126.9 430.7M1137.6 422 1126.9 430.7M1137.6 422 1145.5 433.1M690.5 410 679.6 419.2M690.5 410 700.5 420M708.4 410.9 700.5 420M708.4 410.9 719 420.7M730.3 410.5 719 420.7M730.3 410.5 736.8 422.5M746.6 413.3 736.8 422.5M746.6 413.3 758.5 423M764.9 414 758.5 423M764.9 414 775.1 424.6M785.8 413.4 775.1 424.6M785.8 413.4 793.9 424.1M805 414.2 793.9 424.1M805 414.2 814.5 426.4M824.8 415.8 814.5 426.4M824.8 415.8 833.3 425.9M844.1 417.9 833.3 425.9M844.1 417.9 853.8 426.9M860.1 417.9 853.8 426.9M860.1 417.9 870.4 429.5M879.2 419.5 870.4 429.5M879.2 419.5 891.1 430M898 419.1 891.1 430M898 419.1 907.4 431.2M917 421.6 907.4 431.2M917 421.6 927.6 430.4M936.5 421.5 927.6 430.4M936.5 421.5 948.1 433.2M956.3 422.9 948.1 433.2M956.3 422.9 964.3 433.2M975.2 424.7 964.3 433.2M975.2 424.7 986.5 433.9M993.9 424.7 986.5 433.9M993.9 424.7 1003.3 435.8M1014.9 425.2 1003.3 435.8M1014.9 425.2 1022.8 437.1M1031.3 427.3 1022.8 437.1M1031.3 427.3 1043.4 437.8M1050.8 428.4 1043.4 437.8M1050.8 428.4 1061.8 437.4M1071.7 428.3 1061.8 437.4M1071.7 428.3 1080.7 439.2M1088.9 428.7 1080.7 439.2M1088.9 428.7 1098.9 440.1M1109.9 430.3 1098.9 440.1M1109.9 430.3 1117.3 440.3M1126.9 430.7 1117.3 440.3M1126.9 430.7 1138.6 441.6M1145.5 433.1 1138.6 441.6M679.6 419.2 689 430.5M700.5 420 689 430.5M700.5 420 709.5 430.8M719 420.7 709.5 430.8M719 420.7 727.9 430.7M736.8 422.5 727.9 430.7M736.8 422.5 746.9 433M758.5 423 746.9 433M758.5 423 765.6 434.1M775.1 424.6 765.6 434.1M775.1 424.6 784.8 435.1M793.9 424.1 784.8 435.1M793.9 424.1 803.3 435.1M814.5 426.4 803.3 435.1M814.5 426.4 822.1 435.5M833.3 425.9 822.1 435.5M833.3 425.9 842.6 436.9M853.8 426.9 842.6 436.9M853.8 426.9 861.6 437.5M870.4 429.5 861.6 437.5M870.4 429.5 879.8 438.7M891.1 430 879.8 438.7M891.1 430 901 439.1M907.4 431.2 901 439.1M907.4 431.2 918.2 441.6M927.6 430.4 918.2 441.6M927.6 430.4 937.8 441.4M948.1 433.2 937.8 441.4M948.1 433.2 958.4 442M964.3 433.2 958.4 442M964.3 433.2 974.1 442.8M986.5 433.9 974.1 442.8M986.5 433.9 994.3 445.4M1003.3 435.8 994.3 445.4M1003.3 435.8 1012.7 445.2M1022.8 437.1 1012.7 445.2M1022.8 437.1 1033.6 445.8M1043.4 437.8 1033.6 445.8M1043.4 437.8 1049.7 447.9M1061.8 437.4 1049.7 447.9M1061.8 437.4 1068.9 448.6M1080.7 439.2 1068.9 448.6M1080.7 439.2 1088.2 449.7M1098.9 440.1 1088.2 449.7M1098.9 440.1 1109.8 450.3M1117.3 440.3 1109.8 450.3M1117.3 440.3 1126.6 451.6M1138.6 441.6 1126.6 451.6M1138.6 441.6 1147.3 451.4M689 430.5 680 438.8M689 430.5 700 439.5M709.5 430.8 700 439.5M709.5 430.8 719.6 440.5M727.9 430.7 719.6 440.5M727.9 430.7 739.5 441.6M746.9 433 739.5 441.6M746.9 433 755.9 442M765.6 434.1 755.9 442M765.6 434.1 774.6 443.2M784.8 435.1 774.6 443.2M784.8 435.1 796.5 444.6M803.3 435.1 796.5 444.6M803.3 435.1 813.8 446.6M822.1 435.5 813.8 446.6M822.1 435.5 834.8 447.2M842.6 436.9 834.8 447.2M842.6 436.9 851 447.3M861.6 437.5 851 447.3M861.6 437.5 871 448.1M879.8 438.7 871 448.1M879.8 438.7 889.4 448.9M901 439.1 889.4 448.9M901 439.1 908 450.9M918.2 441.6 908 450.9M918.2 441.6 928.4 451.3M937.8 441.4 928.4 451.3M937.8 441.4 946.9 452.6M958.4 442 946.9 452.6M958.4 442 966.7 452.3M974.1 442.8 966.7 452.3M974.1 442.8 986.3 454.2M994.3 445.4 986.3 454.2M994.3 445.4 1003.4 456.1M1012.7 445.2 1003.4 456.1M1012.7 445.2 1024 455.9M1033.6 445.8 1024 455.9M1033.6 445.8 1040.2 457M1049.7 447.9 1040.2 457M1049.7 447.9 1060.8 457.8M1068.9 448.6 1060.8 457.8M1068.9 448.6 1078.5 459.2M1088.2 449.7 1078.5 459.2M1088.2 449.7 1098.1 460.5M1109.8 450.3 1098.1 460.5M1109.8 450.3 1118.1 460.5M1126.6 451.6 1118.1 460.5M1126.6 451.6 1138.2 461.7M1147.3 451.4 1138.2 461.7M680 438.8 688.9 449.1M700 439.5 688.9 449.1M700 439.5 707.8 450.3M719.6 440.5 707.8 450.3M719.6 440.5 730.1 452.3M739.5 441.6 730.1 452.3M739.5 441.6 748.1 451.7M755.9 442 748.1 451.7M755.9 442 765.5 452.7M774.6 443.2 765.5 452.7M774.6 443.2 785 454.6M796.5 444.6 785 454.6M796.5 444.6 802.7 455.2M813.8 446.6 802.7 455.2M813.8 446.6 823.2 456.5M834.8 447.2 823.2 456.5M834.8 447.2 843.7 456.9M851 447.3 843.7 456.9M851 447.3 861.9 457.6M871 448.1 861.9 457.6M871 448.1 880.3 459.3M889.4 448.9 880.3 459.3M889.4 448.9 897.8 460M908 450.9 897.8 460M908 450.9 918.5 460.3M928.4 451.3 918.5 460.3M928.4 451.3 936.5 462.5M946.9 452.6 936.5 462.5M946.9 452.6 955.9 462.2M966.7 452.3 955.9 462.2M966.7 452.3 974.7 463.8M986.3 454.2 974.7 463.8M986.3 454.2 994.1 464.4M1003.4 456.1 994.1 464.4M1003.4 456.1 1012.8 465.1M1024 455.9 1012.8 465.1M1024 455.9 1032.5 466.8M1040.2 457 1032.5 466.8M1040.2 457 1049.9 467.8M1060.8 457.8 1049.9 467.8M1060.8 457.8 1069.8 469.5M1078.5 459.2 1069.8 469.5M1078.5 459.2 1091.2 468.7M1098.1 460.5 1091.2 468.7M1098.1 460.5 1109.2 470.1M1118.1 460.5 1109.2 470.1M1118.1 460.5 1126 472.1M1138.2 461.7 1126 472.1M1138.2 461.7 1148.1 472.9M688.9 449.1 681.5 460M688.9 449.1 700.2 460.4M707.8 450.3 700.2 460.4M707.8 450.3 719.6 461.7M730.1 452.3 719.6 461.7M730.1 452.3 739.4 461.5M748.1 451.7 739.4 461.5M748.1 451.7 755.9 462.9M765.5 452.7 755.9 462.9M765.5 452.7 776.3 463.5M785 454.6 776.3 463.5M785 454.6 796.4 465.4M802.7 455.2 796.4 465.4M802.7 455.2 814.7 465.8M823.2 456.5 814.7 465.8M823.2 456.5 833.7 466M843.7 456.9 833.7 466M843.7 456.9 853.2 466.9M861.9 457.6 853.2 466.9M861.9 457.6 872.5 468.8M880.3 459.3 872.5 468.8M880.3 459.3 889.2 468.9M897.8 460 889.2 468.9M897.8 460 909.4 470.4M918.5 460.3 909.4 470.4M918.5 460.3 928.7 470.6M936.5 462.5 928.7 470.6M936.5 462.5 948.4 472.2M955.9 462.2 948.4 472.2M955.9 462.2 965.8 473.8M974.7 463.8 965.8 473.8M974.7 463.8 985.4 474.1M994.1 464.4 985.4 474.1M994.1 464.4 1003.2 475.1M1012.8 465.1 1003.2 475.1M1012.8 465.1 1021.2 475.7M1032.5 466.8 1021.2 475.7M1032.5 466.8 1043.2 476.3M1049.9 467.8 1043.2 476.3M1049.9 467.8 1059.4 478.7M1069.8 469.5 1059.4 478.7M1069.8 469.5 1079.5 479.1M1091.2 468.7 1079.5 479.1M1091.2 468.7 1099.3 480.4M1109.2 470.1 1099.3 480.4M1109.2 470.1 1117.3 481.4M1126 472.1 1117.3 481.4M1126 472.1 1135.1 482.5M1148.1 472.9 1135.1 482.5M681.5 460 689.8 469.8M700.2 460.4 689.8 469.8M700.2 460.4 708.8 471M719.6 461.7 708.8 471M719.6 461.7 728 471.6M739.4 461.5 728 471.6M739.4 461.5 746.8 473M755.9 462.9 746.8 473M755.9 462.9 767.6 472.7M776.3 463.5 767.6 472.7M776.3 463.5 786.5 475.2M796.4 465.4 786.5 475.2M796.4 465.4 803.5 474.6M814.7 465.8 803.5 474.6M814.7 465.8 825.1 477.1M833.7 466 825.1 477.1M833.7 466 841.1 477.7M853.2 466.9 841.1 477.7M853.2 466.9 863.1 477.6M872.5 468.8 863.1 477.6M872.5 468.8 881.6 478.6M889.2 468.9 881.6 478.6M889.2 468.9 900.6 480M909.4 470.4 900.6 480M909.4 470.4 918.4 480.2M928.7 470.6 918.4 480.2M928.7 470.6 938.1 482.3M948.4 472.2 938.1 482.3M948.4 472.2 955.7 481.9M965.8 473.8 955.7 481.9M965.8 473.8 973.9 483.3M985.4 474.1 973.9 483.3M985.4 474.1 996.4 485.2M1003.2 475.1 996.4 485.2M1003.2 475.1 1015 486.2M1021.2 475.7 1015 486.2M1021.2 475.7 1031.1 486.4M1043.2 476.3 1031.1 486.4M1043.2 476.3 1053.2 488.3M1059.4 478.7 1053.2 488.3M1059.4 478.7 1072.4 489.2M1079.5 479.1 1072.4 489.2M1079.5 479.1 1090.3 490M1099.3 480.4 1090.3 490M1099.3 480.4 1110.1 490.3M1117.3 481.4 1110.1 490.3M1117.3 481.4 1125.7 491M1135.1 482.5 1125.7 491M1135.1 482.5 1144.7 491.9M689.8 469.8 681.3 478.6M689.8 469.8 699 479.2M708.8 471 699 479.2M708.8 471 718.5 481M728 471.6 718.5 481M728 471.6 738.3 482.8M746.8 473 738.3 482.8M746.8 473 755.4 482.4M767.6 472.7 755.4 482.4M767.6 472.7 774.4 484.7M786.5 475.2 774.4 484.7M786.5 475.2 795.5 485.1M803.5 474.6 795.5 485.1M803.5 474.6 815.2 484.7M825.1 477.1 815.2 484.7M825.1 477.1 834.5 486.3M841.1 477.7 834.5 486.3M841.1 477.7 852.5 487.4M863.1 477.6 852.5 487.4M863.1 477.6 871.9 488.2M881.6 478.6 871.9 488.2M881.6 478.6 889.2 489M900.6 480 889.2 489M900.6 480 909.9 490.4M918.4 480.2 909.9 490.4M918.4 480.2 926.7 491.1M938.1 482.3 926.7 491.1M938.1 482.3 947.3 492.1M955.7 481.9 947.3 492.1M955.7 481.9 966.4 494M973.9 483.3 966.4 494M973.9 483.3 985.5 494.9M996.4 485.2 985.5 494.9M996.4 485.2 1003.3 495.9M1015 486.2 1003.3 495.9M1015 486.2 1024.7 496.2M1031.1 486.4 1024.7 496.2M1031.1 486.4 1040.2 496.3M1053.2 488.3 1040.2 496.3M1053.2 488.3 1062 498.8M1072.4 489.2 1062 498.8M1072.4 489.2 1080.9 499M1090.3 490 1080.9 499M1090.3 490 1099.2 499.2M1110.1 490.3 1099.2 499.2M1110.1 490.3 1118.4 501.9M1125.7 491 1118.4 501.9M1125.7 491 1135.9 502.1M1144.7 491.9 1135.9 502.1M681.3 478.6 691.8 489.8M699 479.2 691.8 489.8M699 479.2 708.9 490M718.5 481 708.9 490M718.5 481 729.4 492.3M738.3 482.8 729.4 492.3M738.3 482.8 748.9 492.2M755.4 482.4 748.9 492.2M755.4 482.4 767.4 493.9M774.4 484.7 767.4 493.9M774.4 484.7 785 494.8M795.5 485.1 785 494.8M795.5 485.1 804.1 494.6M815.2 484.7 804.1 494.6M815.2 484.7 821.6 496.6M834.5 486.3 821.6 496.6M834.5 486.3 843.5 496.2M852.5 487.4 843.5 496.2M852.5 487.4 859.8 497.7M871.9 488.2 859.8 497.7M871.9 488.2 879.4 499.5M889.2 489 879.4 499.5M889.2 489 898.3 500.1M909.9 490.4 898.3 500.1M909.9 490.4 918.7 500.6M926.7 491.1 918.7 500.6M926.7 491.1 938.8 501.7M947.3 492.1 938.8 501.7M947.3 492.1 956.5 503.2M966.4 494 956.5 503.2M966.4 494 975.1 503.1M985.5 494.9 975.1 503.1M985.5 494.9 996.2 505.2M1003.3 495.9 996.2 505.2M1003.3 495.9 1013.7 505.7M1024.7 496.2 1013.7 505.7M1024.7 496.2 1032.9 506.2M1040.2 496.3 1032.9 506.2M1040.2 496.3 1049.9 507.7M1062 498.8 1049.9 507.7M1062 498.8 1072 507.7M1080.9 499 1072 507.7M1080.9 499 1091.3 509.2M1099.2 499.2 1091.3 509.2M1099.2 499.2 1110.4 511M1118.4 501.9 1110.4 511M1118.4 501.9 1126.6 510.8M1135.9 502.1 1126.6 510.8M1135.9 502.1 1148 513.3M691.8 489.8 682.2 499.2M691.8 489.8 700.2 500.6M708.9 490 700.2 500.6M708.9 490 720.2 501.6M729.4 492.3 720.2 501.6M729.4 492.3 737.2 502.6M748.9 492.2 737.2 502.6M748.9 492.2 758.7 503M767.4 493.9 758.7 503M767.4 493.9 774.1 503.2M785 494.8 774.1 503.2M785 494.8 795.6 504.6M804.1 494.6 795.6 504.6M804.1 494.6 815.6 506M821.6 496.6 815.6 506M821.6 496.6 833.8 506M843.5 496.2 833.8 506M843.5 496.2 852.1 508M859.8 497.7 852.1 508M859.8 497.7 872.6 509.4M879.4 499.5 872.6 509.4M879.4 499.5 889.1 509.5M898.3 500.1 889.1 509.5M898.3 500.1 910.8 509.6M918.7 500.6 910.8 509.6M918.7 500.6 926.4 510.8M938.8 501.7 926.4 510.8M938.8 501.7 947.9 512M956.5 503.2 947.9 512M956.5 503.2 966.8 514M975.1 503.1 966.8 514M975.1 503.1 986.2 513.3M996.2 505.2 986.2 513.3M996.2 505.2 1004.7 515.8M1013.7 505.7 1004.7 515.8M1013.7 505.7 1023.8 516.9M1032.9 506.2 1023.8 516.9M1032.9 506.2 1043.2 517.3M1049.9 507.7 1043.2 517.3M1049.9 507.7 1062.4 518.1M1072 507.7 1062.4 518.1M1072 507.7 1078.5 518.6M1091.3 509.2 1078.5 518.6M1091.3 509.2 1100.6 519.6M1110.4 511 1100.6 519.6M1110.4 511 1117.9 521.6M1126.6 510.8 1117.9 521.6M1126.6 510.8 1137.7 522.4M1148 513.3 1137.7 522.4M682.2 499.2 690.4 509.5M700.2 500.6 690.4 509.5M700.2 500.6 707.9 509.9M720.2 501.6 707.9 509.9M720.2 501.6 727.2 511.5M737.2 502.6 727.2 511.5M737.2 502.6 747.6 511.5M758.7 503 747.6 511.5M758.7 503 767 512.5M774.1 503.2 767 512.5M774.1 503.2 785.1 513.3M795.6 504.6 785.1 513.3M795.6 504.6 804.4 514.5M815.6 506 804.4 514.5M815.6 506 825.2 515.9M833.8 506 825.2 515.9M833.8 506 843.8 517M852.1 508 843.8 517M852.1 508 860.8 518.8M872.6 509.4 860.8 518.8M872.6 509.4 879.6 519.1M889.1 509.5 879.6 519.1M889.1 509.5 900 521M910.8 509.6 900 521M910.8 509.6 919.3 520M926.4 510.8 919.3 520M926.4 510.8 937.3 522.8M947.9 512 937.3 522.8M947.9 512 957.8 522.6M966.8 514 957.8 522.6M966.8 514 974.1 523.3M986.2 513.3 974.1 523.3M986.2 513.3 995.5 524.1M1004.7 515.8 995.5 524.1M1004.7 515.8 1015 525.2M1023.8 516.9 1015 525.2M1023.8 516.9 1033.2 527M1043.2 517.3 1033.2 527M1043.2 517.3 1050.5 527.6M1062.4 518.1 1050.5 527.6M1062.4 518.1 1071 528.1M1078.5 518.6 1071 528.1M1078.5 518.6 1089.6 529.7M1100.6 519.6 1089.6 529.7M1100.6 519.6 1110.2 530M1117.9 521.6 1110.2 530M1117.9 521.6 1126.3 531.4M1137.7 522.4 1126.3 531.4M1137.7 522.4 1146.9 532.3M690.4 509.5 682.6 518.5M690.4 509.5 700 519.9M707.9 509.9 700 519.9M707.9 509.9 717.9 520.9M727.2 511.5 717.9 520.9M727.2 511.5 737.8 521.7M747.6 511.5 737.8 521.7M747.6 511.5 758 523.8M767 512.5 758 523.8M767 512.5 777.8 523.2M785.1 513.3 777.8 523.2M785.1 513.3 794.5 525.6M804.4 514.5 794.5 525.6M804.4 514.5 812.4 524.9M825.2 515.9 812.4 524.9M825.2 515.9 831.3 527.6M843.8 517 831.3 527.6M843.8 517 852 527.5M860.8 518.8 852 527.5M860.8 518.8 869.5 529.3M879.6 519.1 869.5 529.3M879.6 519.1 891.9 529.9M900 521 891.9 529.9M900 521 910.6 530.6M919.3 520 910.6 530.6M919.3 520 927.3 530.8M937.3 522.8 927.3 530.8M937.3 522.8 946.3 531.6M957.8 522.6 946.3 531.6M957.8 522.6 965.5 532.4M974.1 523.3 965.5 532.4M974.1 523.3 983.3 535M995.5 524.1 983.3 535M995.5 524.1 1005.3 535.8M1015 525.2 1005.3 535.8M1015 525.2 1022.4 536.1M1033.2 527 1022.4 536.1M1033.2 527 1042.2 537.7M1050.5 527.6 1042.2 537.7M1050.5 527.6 1060.3 538.1M1071 528.1 1060.3 538.1M1071 528.1 1080.2 539.7M1089.6 529.7 1080.2 539.7M1089.6 529.7 1098.4 539M1110.2 530 1098.4 539M1110.2 530 1117.6 541.7M1126.3 531.4 1117.6 541.7M1126.3 531.4 1135.8 542.1M1146.9 532.3 1135.8 542.1M682.6 518.5 689.1 529.1M700 519.9 689.1 529.1M700 519.9 710 529.7M717.9 520.9 710 529.7M717.9 520.9 728.3 531.6M737.8 521.7 728.3 531.6M737.8 521.7 747.1 532.9M758 523.8 747.1 532.9M758 523.8 767.8 532.9M777.8 523.2 767.8 532.9M777.8 523.2 786.5 534.8M794.5 525.6 786.5 534.8M794.5 525.6 804.9 535.4M812.4 524.9 804.9 535.4M812.4 524.9 823.8 536.7M831.3 527.6 823.8 536.7M831.3 527.6 843.2 536.7M852 527.5 843.2 536.7M852 527.5 862.1 538.5M869.5 529.3 862.1 538.5M869.5 529.3 880.4 539.8M891.9 529.9 880.4 539.8M891.9 529.9 898.8 540.1M910.6 530.6 898.8 540.1M910.6 530.6 918.8 541.1M927.3 530.8 918.8 541.1M927.3 530.8 936.3 542.2M946.3 531.6 936.3 542.2M946.3 531.6 955 542.9M965.5 532.4 955 542.9M965.5 532.4 975.3 544.2M983.3 535 975.3 544.2M983.3 535 995.9 545.7M1005.3 535.8 995.9 545.7M1005.3 535.8 1012.5 546.5M1022.4 536.1 1012.5 546.5M1022.4 536.1 1032.4 546.6M1042.2 537.7 1032.4 546.6M1042.2 537.7 1049.8 548.3M1060.3 538.1 1049.8 548.3M1060.3 538.1 1069.5 548.1M1080.2 539.7 1069.5 548.1M1080.2 539.7 1088.8 548.9M1098.4 539 1088.8 548.9M1098.4 539 1107.7 550M1117.6 541.7 1107.7 550M1117.6 541.7 1127.6 551.1M1135.8 542.1 1127.6 551.1M1135.8 542.1 1147.5 553.2M689.1 529.1 682.6 538.8M689.1 529.1 700.7 540.5M710 529.7 700.7 540.5M710 529.7 719.9 540.7M728.3 531.6 719.9 540.7M728.3 531.6 736.8 542.4M747.1 532.9 736.8 542.4M747.1 532.9 757.6 542.6M767.8 532.9 757.6 542.6M767.8 532.9 776.6 542.9M786.5 534.8 776.6 542.9M786.5 534.8 796.1 545.5M804.9 535.4 796.1 545.5M804.9 535.4 815.8 544.9M823.8 536.7 815.8 544.9M823.8 536.7 833.7 547.2M843.2 536.7 833.7 547.2M843.2 536.7 850.6 547.8M862.1 538.5 850.6 547.8M862.1 538.5 869.8 548M880.4 539.8 869.8 548M880.4 539.8 888.2 549.1M898.8 540.1 888.2 549.1M898.8 540.1 910.3 550.6M918.8 541.1 910.3 550.6M918.8 541.1 929.1 552.3M936.3 542.2 929.1 552.3M936.3 542.2 945.7 553M955 542.9 945.7 553M955 542.9 967.5 553.6M975.3 544.2 967.5 553.6M975.3 544.2 984.4 553.6M995.9 545.7 984.4 553.6M995.9 545.7 1003.8 554.9M1012.5 546.5 1003.8 554.9M1012.5 546.5 1022.1 556.5M1032.4 546.6 1022.1 556.5M1032.4 546.6 1042.5 556.6M1049.8 548.3 1042.5 556.6M1049.8 548.3 1059.8 558M1069.5 548.1 1059.8 558M1069.5 548.1 1080.8 559.3M1088.8 548.9 1080.8 559.3M1088.8 548.9 1099.5 560.7M1107.7 550 1099.5 560.7M1107.7 550 1119 560.8M1127.6 551.1 1119 560.8M1127.6 551.1 1137.9 562.2M1147.5 553.2 1137.9 562.2M682.6 538.8 689.9 548.9M700.7 540.5 689.9 548.9M700.7 540.5 709 550.9M719.9 540.7 709 550.9M719.9 540.7 729.5 551M736.8 542.4 729.5 551M736.8 542.4 747.7 551.5M757.6 542.6 747.7 551.5M757.6 542.6 766.9 553.2M776.6 542.9 766.9 553.2M776.6 542.9 786.5 555M796.1 545.5 786.5 555M796.1 545.5 802.8 556.2M815.8 544.9 802.8 556.2M815.8 544.9 822.3 557.1M833.7 547.2 822.3 557.1M833.7 547.2 844.3 556.6M850.6 547.8 844.3 556.6M850.6 547.8 860.7 557.4M869.8 548 860.7 557.4M869.8 548 882.1 559.5M888.2 549.1 882.1 559.5M888.2 549.1 901.3 560.6M910.3 550.6 901.3 560.6M910.3 550.6 918 561.5M929.1 552.3 918 561.5M929.1 552.3 937 561.5M945.7 553 937 561.5M945.7 553 956.2 563.2M967.5 553.6 956.2 563.2M967.5 553.6 974.8 563.9M984.4 553.6 974.8 563.9M984.4 553.6 994.8 565.3M1003.8 554.9 994.8 565.3M1003.8 554.9 1013.4 565.5M1022.1 556.5 1013.4 565.5M1022.1 556.5 1032.7 566.5M1042.5 556.6 1032.7 566.5M1042.5 556.6 1052.4 566.8M1059.8 558 1052.4 566.8M1059.8 558 1069.3 567.6M1080.8 559.3 1069.3 567.6M1080.8 559.3 1089.2 570.2M1099.5 560.7 1089.2 570.2M1099.5 560.7 1108.9 570.7M1119 560.8 1108.9 570.7M1119 560.8 1129.2 572M1137.9 562.2 1129.2 572M1137.9 562.2 1145.7 571.8M689.9 548.9 681.1 558.5M689.9 548.9 700.4 559.2M709 550.9 700.4 559.2M709 550.9 718.6 561.4M729.5 551 718.6 561.4M729.5 551 737.1 561.2M747.7 551.5 737.1 561.2M747.7 551.5 757.9 562.2M766.9 553.2 757.9 562.2M766.9 553.2 777.5 564M786.5 555 777.5 564M786.5 555 796.5 564.8M802.8 556.2 796.5 564.8M802.8 556.2 814 565.2M822.3 557.1 814 565.2M822.3 557.1 831.3 567.6M844.3 556.6 831.3 567.6M844.3 556.6 850.9 566.8M860.7 557.4 850.9 566.8M860.7 557.4 872.6 568.6M882.1 559.5 872.6 568.6M882.1 559.5 890.3 570.3M901.3 560.6 890.3 570.3M901.3 560.6 909.9 570M918 561.5 909.9 570M918 561.5 927.2 571.7M937 561.5 927.2 571.7M937 561.5 947.7 571.8M956.2 563.2 947.7 571.8M956.2 563.2 965 573.3M974.8 563.9 965 573.3M974.8 563.9 983.3 574.9M994.8 565.3 983.3 574.9M994.8 565.3 1004.6 574.5M1013.4 565.5 1004.6 574.5M1013.4 565.5 1023.3 576.3M1032.7 566.5 1023.3 576.3M1032.7 566.5 1040.4 577M1052.4 566.8 1040.4 577M1052.4 566.8 1062.1 578M1069.3 567.6 1062.1 578M1069.3 567.6 1080.9 578.5M1089.2 570.2 1080.9 578.5M1089.2 570.2 1100.9 580.3M1108.9 570.7 1100.9 580.3M1108.9 570.7 1118.2 579.9M1129.2 572 1118.2 579.9M1129.2 572 1136.5 580.9M1145.7 571.8 1136.5 580.9M681.1 558.5 690.3 568.9M700.4 559.2 690.3 568.9M700.4 559.2 708.5 570.1M718.6 561.4 708.5 570.1M718.6 561.4 727.1 571M737.1 561.2 727.1 571M737.1 561.2 747.5 571.6M757.9 562.2 747.5 571.6M757.9 562.2 766.7 574.2M777.5 564 766.7 574.2M777.5 564 786.3 575.2M796.5 564.8 786.3 575.2M796.5 564.8 803 575.5M814 565.2 803 575.5M814 565.2 822.5 577M831.3 567.6 822.5 577M831.3 567.6 842.5 577.6M850.9 566.8 842.5 577.6M850.9 566.8 862.5 577.3M872.6 568.6 862.5 577.3M872.6 568.6 879 579.6M890.3 570.3 879 579.6M890.3 570.3 900.7 579.8M909.9 570 900.7 579.8M909.9 570 916.7 580M927.2 571.7 916.7 580M927.2 571.7 938.6 582.3M947.7 571.8 938.6 582.3M947.7 571.8 956 583.2M965 573.3 956 583.2M965 573.3 976.7 582.8M983.3 574.9 976.7 582.8M983.3 574.9 995.4 585.7M1004.6 574.5 995.4 585.7M1004.6 574.5 1014.9 586.4M1023.3 576.3 1014.9 586.4M1023.3 576.3 1032.3 586.8M1040.4 577 1032.3 586.8M1040.4 577 1050 588.2M1062.1 578 1050 588.2M1062.1 578 1071.1 588.3M1080.9 578.5 1071.1 588.3M1080.9 578.5 1087.8 588.8M1100.9 580.3 1087.8 588.8M1100.9 580.3 1108.1 591.3M1118.2 579.9 1108.1 591.3M1118.2 579.9 1127.4 592.1M1136.5 580.9 1127.4 592.1M1136.5 580.9 1145.3 591.8M690.3 568.9 680 578.6M690.3 568.9 701.1 579.7M708.5 570.1 701.1 579.7M708.5 570.1 718.3 581.3M727.1 571 718.3 581.3M727.1 571 737.8 582.7M747.5 571.6 737.8 582.7M747.5 571.6 757.7 583.5M766.7 574.2 757.7 583.5M766.7 574.2 775.7 583.6M786.3 575.2 775.7 583.6M786.3 575.2 794.8 585.7M803 575.5 794.8 585.7M803 575.5 815.7 585.8M822.5 577 815.7 585.8M822.5 577 833 585.8M842.5 577.6 833 585.8M842.5 577.6 853.4 587.8M862.5 577.3 853.4 587.8M862.5 577.3 870.7 587.9M879 579.6 870.7 587.9M879 579.6 889.9 589.9M900.7 579.8 889.9 589.9M900.7 579.8 908.1 590M916.7 580 908.1 590M916.7 580 928 591.4M938.6 582.3 928 591.4M938.6 582.3 945.1 591.5M956 583.2 945.1 591.5M956 583.2 965.5 593.7M976.7 582.8 965.5 593.7M976.7 582.8 984.6 593.3M995.4 585.7 984.6 593.3M995.4 585.7 1003 594.6M1014.9 586.4 1003 594.6M1014.9 586.4 1024 595.6M1032.3 586.8 1024 595.6M1032.3 586.8 1043.8 596.7M1050 588.2 1043.8 596.7M1050 588.2 1059.8 597.1M1071.1 588.3 1059.8 597.1M1071.1 588.3 1080 599M1087.8 588.8 1080 599M1087.8 588.8 1100.1 600.3M1108.1 591.3 1100.1 600.3M1108.1 591.3 1118.2 600M1127.4 592.1 1118.2 600M1127.4 592.1 1138.6 601.3M1145.3 591.8 1138.6 601.3M680 578.6 689.5 588.9M701.1 579.7 689.5 588.9M701.1 579.7 709.8 590.8M718.3 581.3 709.8 590.8M718.3 581.3 727.8 590.9M737.8 582.7 727.8 590.9M737.8 582.7 745.6 592.6M757.7 583.5 745.6 592.6M757.7 583.5 767.3 592.6M775.7 583.6 767.3 592.6M775.7 583.6 784.5 594.8M794.8 585.7 784.5 594.8M794.8 585.7 805.3 594.5M815.7 585.8 805.3 594.5M815.7 585.8 825.4 596.6M833 585.8 825.4 596.6M833 585.8 843.3 596.8M853.4 587.8 843.3 596.8M853.4 587.8 863.3 598M870.7 587.9 863.3 598M870.7 587.9 881 600M889.9 589.9 881 600M889.9 589.9 900.8 599.3M908.1 590 900.8 599.3M908.1 590 917.1 600.3M928 591.4 917.1 600.3M928 591.4 936.1 602.6M945.1 591.5 936.1 602.6M945.1 591.5 956.7 602.8M965.5 593.7 956.7 602.8M965.5 593.7 975 603.8M984.6 593.3 975 603.8M984.6 593.3 994.3 605.2M1003 594.6 994.3 605.2M1003 594.6 1013.2 606.4M1024 595.6 1013.2 606.4M1024 595.6 1033.8 607.4M1043.8 596.7 1033.8 607.4M1043.8 596.7 1052.4 606.9M1059.8 597.1 1052.4 606.9M1059.8 597.1 1070.2 609.2M1080 599 1070.2 609.2M1080 599 1089 609.6M1100.1 600.3 1089 609.6M1100.1 600.3 1107.4 611.1M1118.2 600 1107.4 611.1M1118.2 600 1126.9 611.1M1138.6 601.3 1126.9 611.1M1138.6 601.3 1147.7 611.5M689.5 588.9 679.1 598.9M689.5 588.9 699.8 599.2M709.8 590.8 699.8 599.2M709.8 590.8 718.6 601.5M727.8 590.9 718.6 601.5M727.8 590.9 739.5 602.7M745.6 592.6 739.5 602.7M745.6 592.6 758.1 602M767.3 592.6 758.1 602M767.3 592.6 775.5 603.7M784.5 594.8 775.5 603.7M784.5 594.8 793.2 605.3M805.3 594.5 793.2 605.3M805.3 594.5 813.2 606.3M825.4 596.6 813.2 606.3M825.4 596.6 833.7 606.2M843.3 596.8 833.7 606.2M843.3 596.8 851.4 607.5M863.3 598 851.4 607.5M863.3 598 869.8 607.6M881 600 869.8 607.6M881 600 889.7 609M900.8 599.3 889.7 609M900.8 599.3 908.1 611M917.1 600.3 908.1 611M917.1 600.3 928.9 611.2M936.1 602.6 928.9 611.2M936.1 602.6 945.2 612.9M956.7 602.8 945.2 612.9M956.7 602.8 965.1 612.5M975 603.8 965.1 612.5M975 603.8 986 615.1M994.3 605.2 986 615.1M994.3 605.2 1003.1 615.3M1013.2 606.4 1003.1 615.3M1013.2 606.4 1024.5 616.2M1033.8 607.4 1024.5 616.2M1033.8 607.4 1041.4 616.4M1052.4 606.9 1041.4 616.4M1052.4 606.9 1059.2 618.8M1070.2 609.2 1059.2 618.8M1070.2 609.2 1081.2 618.4M1089 609.6 1081.2 618.4M1089 609.6 1099.6 619.3M1107.4 611.1 1099.6 619.3M1107.4 611.1 1118.9 620.7M1126.9 611.1 1118.9 620.7M1126.9 611.1 1137.7 621.9M1147.7 611.5 1137.7 621.9M679.1 598.9 688.9 609.7M699.8 599.2 688.9 609.7M699.8 599.2 710.1 609.6M718.6 601.5 710.1 609.6M718.6 601.5 726.7 611M739.5 602.7 726.7 611M739.5 602.7 748.3 613.3M758.1 602 748.3 613.3M758.1 602 766.3 614M775.5 603.7 766.3 614M775.5 603.7 786.3 613.8M793.2 605.3 786.3 613.8M793.2 605.3 804.3 615.9M813.2 606.3 804.3 615.9M813.2 606.3 823.4 616.2M833.7 606.2 823.4 616.2M833.7 606.2 843.3 616.4M851.4 607.5 843.3 616.4M851.4 607.5 861.3 618.1M869.8 607.6 861.3 618.1M869.8 607.6 880.8 619.4M889.7 609 880.8 619.4M889.7 609 898.6 619.9M908.1 611 898.6 619.9M908.1 611 918.4 620.1M928.9 611.2 918.4 620.1M928.9 611.2 938.6 622.8M945.2 612.9 938.6 622.8M945.2 612.9 956.7 622.6M965.1 612.5 956.7 622.6M965.1 612.5 975 623.7M986 615.1 975 623.7M986 615.1 994 624.3M1003.1 615.3 994 624.3M1003.1 615.3 1015.2 625.4M1024.5 616.2 1015.2 625.4M1024.5 616.2 1031.4 626.9M1041.4 616.4 1031.4 626.9M1041.4 616.4 1049.6 627.3M1059.2 618.8 1049.6 627.3M1059.2 618.8 1070.7 629.2M1081.2 618.4 1070.7 629.2M1081.2 618.4 1088.8 628.6M1099.6 619.3 1088.8 628.6M1099.6 619.3 1110.3 629.4M1118.9 620.7 1110.3 629.4M1118.9 620.7 1127.2 631.4M1137.7 621.9 1127.2 631.4M1137.7 621.9 1148.4 632M688.9 609.7 680 618.6M688.9 609.7 699.5 619.3M710.1 609.6 699.5 619.3M710.1 609.6 720.5 621M726.7 611 720.5 621M726.7 611 738.9 621.5M748.3 613.3 738.9 621.5M748.3 613.3 757.6 623.7M766.3 614 757.6 623.7M766.3 614 775 624.7M786.3 613.8 775 624.7M786.3 613.8 794.2 625.2M804.3 615.9 794.2 625.2M804.3 615.9 815.7 625.6M823.4 616.2 815.7 625.6M823.4 616.2 834.6 626.4M843.3 616.4 834.6 626.4M843.3 616.4 851.8 628.4M861.3 618.1 851.8 628.4M861.3 618.1 871.4 627.7M880.8 619.4 871.4 627.7M880.8 619.4 888.7 629.6M898.6 619.9 888.7 629.6M898.6 619.9 908.4 629.6M918.4 620.1 908.4 629.6M918.4 620.1 929.2 631.1M938.6 622.8 929.2 631.1M938.6 622.8 948.5 632.1M956.7 622.6 948.5 632.1M956.7 622.6 964.8 633.1M975 623.7 964.8 633.1M975 623.7 986.2 635.1M994 624.3 986.2 635.1M994 624.3 1004.2 634.7M1015.2 625.4 1004.2 634.7M1015.2 625.4 1023.1 635.7M1031.4 626.9 1023.1 635.7M1031.4 626.9 1041.5 636.1M1049.6 627.3 1041.5 636.1M1049.6 627.3 1059.2 638.9M1070.7 629.2 1059.2 638.9M1070.7 629.2 1081 638.5M1088.8 628.6 1081 638.5M1088.8 628.6 1099.4 639M1110.3 629.4 1099.4 639M1110.3 629.4 1119.2 641.1M1127.2 631.4 1119.2 641.1M1127.2 631.4 1137.8 641.7M1148.4 632 1137.8 641.7" fill="none" stroke="#000" stroke-width="1" shape-rendering="crispEdges"/></g></g></g><g clip-path="url(#ctopall)"><g clip-path="url(#hot2)"><path d="M768.9 399.9 779.6 399.5 790.2 400.9 801.5 400.4 813.1 400.9 823.8 402.1 834.4 402.1 847 403.1 857.8 402.5 869 403.6 878.2 404.5 889.2 405 900 404.3 911.9 405.4 923.2 406.1 933.1 406.4 944.6 407.1 956.3 407.3 966.2 408 977.5 407.6 988.8 408.7 999.6 408.8 1011.2 408.9 1021.2 409.6 1033.5 410.3 1043.4 410.7 1055.7 411.2 1065.3 410.9 1078.1 412.1 1087.5 412.6 1099.2 412.9 1109.7 413.4 1120.7 413.5M774.1 406.1 786.3 406 795.6 406.4 808.1 406.9 817.4 408 829.4 407.5 841 408.4 852.3 409.3 863.2 409.8 873.2 410.1 884.5 410.4 894.9 410.8 905.6 411.5 916.8 411.6 929.3 412.3 940.3 412.3 949.6 413.4 961.1 413.7 972.3 413.6 983.6 414.2 995.1 414.7 1004.8 415.1 1015.6 415.9 1026.8 415.7 1038.7 416.2 1050.4 417.1 1060.1 417.1 1072 417.7 1082.8 417.9 1093.7 418.7 1105.4 418.8 1116.2 419.1 1126 419.5M769.9 411.1 779.5 412 791.5 412.6 801.2 412.7 813.5 412.9 823.2 414.1 833.9 413.7 845.3 415 856.7 415 868.1 416 878 415.6 889.8 416.6 900.2 416.8 912.2 416.8 922.6 417.2 934.9 417.6 944.3 418.7 955.4 419.1 966.7 420.1 978.2 419.7 988.3 420.3 1000.6 421.1 1011.5 421.3 1023 421.6 1033.1 422.7 1044.6 422.5 1055.6 423.3 1065.5 423.3 1077.6 423.7 1087.7 424.4 1098.1 424.5 1111.1 424.9 1121.7 425M774.1 417.8 785.1 418.8 797.5 418.4 806.7 419.6 819.1 419.6 828.5 419.4 840.9 420.6 851.4 420.7 862 421.1 873.3 421.9 884.3 422 894.9 422.8 907.5 422.7 918.1 423.7 927.9 423.5 940.2 424 949.7 424.3 962.2 425.1 971.4 425.4 983.5 426.1 993.7 427 1005.9 426.7 1016.1 427.2 1026.4 428 1038 428.5 1050.2 428.6 1060 429.1 1071.4 429.1 1082.3 429.9 1092.6 430.9 1104.9 431 1114.6 431.7 1126.2 432.3M769.3 423.2 780.6 424.1 790.7 424.8 801.6 424.5 812 425.5 823.5 425.3 834 426.5 845.5 427.1 857.9 427.5 867.4 428.1 879.3 428.4 890.9 428.2 900.7 429.3 911.5 428.8 922 429.8 933.6 430.7 943.9 430.5 956.5 431.2 967.7 431.7 978.8 432.5 989.8 432.5 999.8 432.8 1010.4 432.9 1022 433.6 1032.8 433.6 1045.1 434.4 1055 434.8 1066.1 435.8 1078 436 1089 436.2 1098.9 436.6 1111 436.8 1120.4 438M773.9 429.3 785.2 430.2 796.4 430.3 807.2 430.8 817.8 431.5 828.9 431.6 841.4 432.9 851.2 432.9 861.6 432.7 873.5 434.3 883.6 434.1 896.1 434 906.7 434.8 918.1 435.9 929.3 436.3 938.6 436.6 950.6 436.6 960.8 437.2 972.3 437.6 984.5 437.8 995.3 438.2 1005.9 439 1016.3 439.4 1026.7 439.6 1038.3 440 1050.3 441 1060.8 441.5 1070.8 441.1 1081.6 442.6 1093.5 443.1 1104.1 442.8 1115.8 443.8 1126.3 443.8M768.7 435.2 780.9 436.5 790.9 436 802.8 436.8 813.5 437.2 823.1 438.1 834.1 438.7 845.3 438.5 855.9 438.7 868.3 439 878.2 439.4 888.9 440.4 900.4 441.1 912.4 441.3 923.9 442.3 933.6 442.5 945.4 442.2 956.6 442.5 967.4 444 978.3 444.2 989.3 444.3 999.1 444.7 1010.6 445.6 1022.8 446.2 1032.6 446.6 1044.9 446 1055.1 446.5 1065.1 447.4 1077.5 447.5 1087.6 448.3 1099.1 448.3 1109.3 448.6 1120.6 450.2M773.8 442.1 785.8 442.7 797.2 442.1 807.1 443.5 818.8 444 828.5 444.4 840.3 444.8 851.7 444.7 862.6 444.7 874.5 446.2 884.8 446.4 896 446.5 905.9 447.2 918.6 447.9 929.2 447.5 939.1 448.1 950.6 449.3 961.8 449.4 972.3 449.3 983 450.7 995.4 450.8 1005.9 450.7 1015.5 450.9 1026.4 451.5 1039.6 452.4 1048.9 452.3 1059.4 452.6 1070.7 453.5 1081.7 453.8 1093.8 454.1 1103.7 455.3 1115 455.6 1126 456.1M767.9 447.3 780.8 447.8 791.3 448.1 801.1 448.8 812.9 448.8 824.1 449.7 834.7 450.5 846.9 450.5 856.6 451.4 868.6 451.5 879.3 451.8 890.5 452.5 901.8 452.6 911 453.7 923.2 454.1 934.5 454.5 944.7 455 956.3 454.9 966.3 455 977.4 455.7 988.6 456.5 1001 456.9 1011.4 456.7 1022.4 457.7 1033.6 457.9 1044.3 458.6 1055.6 458.9 1066.7 459.9 1077.1 459.9 1088.5 460.3 1100 461.3 1110 461.4 1120.1 462.1M774.8 453.2 784.4 454.6 797.1 454.8 807.3 454.8 818.5 456 829.8 455.4 839.9 455.9 852.3 457.3 863.4 457.2 873.1 457.2 884 458 895.3 458.4 907 459.5 917.2 459.9 928 459.7 940.2 459.9 949.6 461.4 961.4 461.2 973.1 462.2 983.2 462.5 993.7 463 1005.3 462.9 1015.4 462.9 1027.3 463.4 1038.9 464.9 1049 465.1 1060.7 465.4 1072.1 465.6 1083.2 465.7 1093.9 466.6 1103.8 466.7 1116.5 467.6 1126.5 467.9M769.8 459.7 779.4 460.5 791.8 460.8 802.5 461.1 812.6 461.9 824.5 461.4 835.7 462.1 845 463.1 856.4 463 867.1 463.5 879.1 464.3 891 464.9 901.4 464.7 913 465 922.6 465.8 933.7 466.2 944.2 466.3 954.9 467 966.4 467.9 977.5 467.6 989.5 468 1000.7 468.8 1010.2 469.5 1023.1 469.4 1033.1 470.2 1045 471.1 1054 470.9 1066.7 471.3 1077 472 1086.9 471.8 1099.9 472.6 1109.9 473.3 1121.6 474.1M773.6 465.9 784.4 466.3 797.2 466.6 807.2 467.5 818.9 468 829.6 467.8 840.9 468.4 850.4 468.4 863.5 469.5 872.5 470 885.1 469.6 896.6 470.2 906.5 471.3 917.5 471.3 928.5 472.1 940.5 472.8 951.6 473.2 961.4 473.1 973.4 474.2 983.1 474.5 994.2 474 1005.4 475.5 1016.6 475.8 1028.3 476.3 1038.1 476.8 1048.6 476.8 1059.6 477.1 1072.3 478 1083.6 478.2 1093.5 478.1 1104.5 479.5 1115.1 479.8 1126.1 480.2M768.3 472.1 779.2 471.5 791.2 472.8 802.5 472.8 813.5 473 823.6 473.5 834.4 473.7 845.4 474.7 857.2 474.9 868.2 475.3 879.7 475.4 890.6 476.9 901.2 477 913.1 476.9 922.1 477.7 934.5 478.2 945 478.5 955.9 479.5 966.1 479.7 977.1 480.3 988.5 480.7 999.6 481 1011 481.8 1021.9 481.7 1033 481.8 1045 482.4 1054.2 482.6 1066.5 483.9 1077.2 484.4 1087.4 484.8 1099.6 484.4 1109.1 485.1 1120.8 485.6M775 477.5 785 478 795.8 478.6 807.7 478.8 817.7 479.8 828.6 480.4 840.8 480.1 850.4 481.3 861.4 481.6 873.6 482 883.8 482.5 895 482.7 907.5 483.2 916.8 483.2 928.3 484.3 940.2 484.2 950.7 484.6 961.5 485 973.5 485.5 983.1 486.3 993.9 486.1 1005.4 487.4 1016.2 487.2 1027 488 1038 488.4 1049.5 488.2 1060.1 489.6 1070.9 490 1081.6 490.1 1093.3 490.7 1103.4 490.5 1115.3 491.9 1126.5 492.3M769.1 484.1 779.1 484.4 790.5 484.1 802.1 484.8 814.1 485.8 824.5 485.5 834.4 486.1 845.6 486.3 856.4 486.8 867.6 487.1 878.6 488.5 890.7 488.5 902 489.4 911.1 488.7 922.6 489.8 935.1 489.6 945.4 491 955.5 491.4 967.8 491 978.3 491.9 989.6 491.9 1000.4 492.2 1010 493.2 1021.7 493.6 1032.4 494.7 1043.8 494.6 1054.7 495.5 1065.3 496 1076.3 496.3 1087.8 496.4 1098.4 497.1 1109.4 497.5 1121.3 498.1M775.6 490.1 784.8 490.6 795.6 491 808.4 490.7 817.5 491.9 829.2 492.2 841.2 492.9 851.5 493.3 863.4 493.6 873.2 494.2 884.3 494.7 895.2 494.6 905.5 494.6 918.4 495.4 929 495.9 940 496.4 949.7 496.6 961.8 496.8 973.5 497.2 983.6 498.6 995 498.2 1004.6 499.3 1016.3 499 1026.7 500.1 1037.5 500.1 1050.5 500.5 1061.3 500.7 1070.8 501.1 1083 502.2 1094.1 502.9 1105 502.5 1115.4 502.9 1127.2 503.7M768.9 496 781.1 496.1 790.8 496.9 802.8 496.5 812.9 497.9 825.1 498.3 835 497.8 846.9 498.3 857.2 498.9 868.8 499.4 878.7 500.4 890.5 501 900.2 500.4 912.4 501.3 923.9 501.7 933 502.1 944.4 503 956.7 503.5 966.1 503.6 977.3 504.5 988.2 504.5 1000.5 504.4 1011.2 504.8 1021 505.4 1032.1 506 1044.4 507.1 1054.5 507 1066.4 507.2 1076.6 507.7 1088.7 508.2 1099.6 508.3 1109.6 508.9 1120.4 509.2M774.3 502.2 785.9 502.8 796.1 502.4 806.9 503.1 817.7 503.9 829.3 503.4 840.5 504.3 850.8 504.6 862.9 505.9 873.7 505.4 883.5 506 894.9 506.5 906.4 506.8 916.8 508 929.5 508.2 940.4 508.5 951 508.7 961.9 509.7 973 510.1 983.7 510 995.2 511.1 1004.9 510.6 1015.4 511.2 1026.8 511.5 1037.8 512.1 1048.8 513.3 1059.6 512.6 1072.4 513.5 1083 513.9 1092.4 514 1105.4 514.4 1115.4 515.1 1126.8 515.7M769.7 507.2 780.1 508.6 791.1 509 801 509.3 812.8 509.9 824.4 509.5 835.6 509.8 846.1 510.9 856.3 510.5 868.7 511.1 879.6 511.9 889.3 512.8 900.7 512.6 912.9 513.9 922.6 514.3 933.1 514.5 945.2 514.3 955.8 514.8 967.4 515.4 977.8 516.1 988.7 515.9 1000 517.2 1010.4 517 1022.9 517.3 1034 517.9 1043.4 518.8 1055.9 519 1065.5 519 1075.9 520.1 1088.5 520.1 1098.9 521.1 1110.4 521.4 1121.9 521.3M775.5 513.9 785.1 514.4 796.1 514.6 808.2 515.5 818.7 515.9 830.3 515.8 839.6 516.9 850.5 516.8 861.6 517.3 874.1 517.2 884.5 518.1 895.9 519.1 906.9 518.5 917.2 519.5 927.8 520.4 939.2 520.2 949.9 520.9 962.2 520.8 972.5 521.5 982.5 522 994.8 522.7 1006.6 523.3 1017.4 523.7 1027.9 524.4 1039.3 524.6 1049.1 524.5 1061.3 524.7 1071.3 526.1 1082 526.1 1093.2 526.7 1105.2 526.5 1115.3 527.8 1126.3 528.4M768.5 519.6 779.3 520.4 791 520.8 802.4 520.6 813.8 520.8 824.9 522.1 834.4 522.3 845.7 522.6 858 523 868.2 523 878 523.9 889.8 524.9 901.2 525.3 912.2 525.8 922.6 525.2 934.6 526.3 944.3 526.3 955.9 527.5 967.4 527.4 978.2 527.7 988.8 528 1000.4 528.2 1011.1 528.7 1021.2 530 1033.8 530.1 1045 530.8 1055.1 531.1 1064.9 531 1077.5 531.7 1089 532 1098.5 532.4 1110.9 533.3 1120.5 533.1M774.7 525.2 786.3 525.8 797.1 527.1 807 527.2 818.9 527.5 829.3 528.4 840 528.5 850.4 528.9 863.5 529.2 874 529.5 884.2 530.1 896.3 530.4 905.5 531.1 917.7 531.6 928.4 531.7 940 532.1 950 532.4 960.5 532.9 972.9 533.6 983.4 533.8 994 534.8 1006.5 534.6 1016.9 536 1027.6 536.4 1037.8 536.7 1048.6 536.4 1059.6 536.6 1072.1 537.5 1082.2 538.4 1093 539 1103.8 539.6 1116.3 539.4 1127.5 540.3M770 531.3 779.8 531.8 790.9 532.5 802.8 532.7 813.1 533.1 823.9 533.2 835.1 534.3 846.2 535.1 857 534.8 869 535.4 878.3 536 890.4 536.1 900.4 536.3 912.1 537.1 923.7 537.3 934.2 537.7 944.3 538.1 956.3 539.3 966.9 539.9 978.7 540.4 989.3 540.3 999.8 541.2 1010.5 540.9 1023.1 542.2 1033.3 542.5 1043 542.9 1055.2 542.8 1065.5 543.7 1077.9 544.2 1087 544.4 1098.6 544.4 1109 545.3 1120.5 545.4M774.5 538.3 785 538.3 796.8 539 808.3 538.8 819.3 539 829.4 540.3 841.4 540.2 851.9 541.1 861.5 541.6 874.2 541.3 884.1 542.1 896.5 543.2 905.8 542.9 916.7 543 927.9 544.5 940.4 544 950.8 545 961.4 545.7 971.6 545.4 982.7 546.6 995.2 546.5 1004.6 547.4 1017.1 547.9 1028.5 548.1 1038.5 548.7 1048.7 549.2 1060.1 549.1 1072.3 549.1 1082.1 550.5 1093.3 551 1105 550.7 1115.5 551.2 1126.9 552.1M769 543.1 780.8 543.6 791.3 544.8 801.9 544.3 813.1 544.8 823.3 545.4 834.3 546.3 846.6 546.6 858 546.6 867.6 547.3 879.1 548.2 889.5 548.3 900.7 548.6 911 549.6 922 549.6 933.4 550.1 945.4 551 956.8 551.2 966.5 550.9 977.2 552.4 988.7 552.2 999.7 552.6 1010.3 553 1021.9 553.6 1032 553.7 1043 554.5 1055.3 555.5 1065.8 555.6 1077.6 555.9 1088.1 555.9 1099.4 557 1109.6 557.4 1120.4 557.2M774.1 549.8 785.3 549.9 797.5 550.9 807 550.6 819 552 830 552.2 841.5 552.7 850.7 552.8 862.3 553.4 872.7 553.9 885 553.9 895.8 554.4 906.9 555 918.5 555.5 927.5 555.4 939.9 555.9 951.1 556.8 961.2 557.2 973.3 557.7 983.3 558.1 994.7 558.5 1006 558.9 1016 559 1027.4 559.5 1037.8 559.9 1049.2 561.3 1060.5 561 1071.4 561.6 1081.5 562.5 1093.5 563.1 1104.8 562.7 1116.6 563 1125.8 563.4M768.2 555.1 780.9 555.6 791 556 801.6 556.4 812.7 557.1 824.5 558.3 834.3 558.2 846.3 559.2 856 559.3 867.8 559.5 879.4 560.2 889.7 560.8 901.2 560.5 911.3 560.9 923.7 562.2 933.3 562.3 944.1 562.1 956.4 563.1 966.8 563.4 977.9 563.8 988.5 564.9 999.1 564.9 1010.3 565.1 1021 565.3 1033.2 565.6 1043.8 566.7 1055.2 566.5 1065.8 567.2 1077.7 568.3 1088.2 568.7 1098.8 569.3 1110.5 569.7 1120.3 569.9M774.9 562 786.4 561.9 795.7 562.7 806.9 563.7 819.4 563.5 830.2 564.1 841.4 564.5 850.8 565.5 862 564.8 874.1 565.9 885.3 565.8 896.4 567 906.8 566.5 918.1 567.3 927.7 567.7 940.5 568.2 950.4 569.3 962 569.1 972.1 569.8 983.6 570.4 994.8 570.2 1006.3 571.4 1016.5 571 1027.4 572.3 1038 572.1 1049.9 573.1 1061.2 573.1 1072 573.3 1081.5 574.3 1092.9 575 1104.1 574.8 1116.3 574.9 1127.5 575.7M768 567.4 779.2 567.7 791 568.5 801.3 569.5 812.2 568.8 823.5 569.2 835.8 569.8 844.9 570.8 856.6 570.6 867.9 571.1 878.1 572 889.4 572.2 901 573.4 912.2 573.4 922.6 573.7 933.5 574.6 945.9 575 955.8 575.3 966.5 575.8 979 575.5 988.1 577 1000.2 577.1 1011.8 577.6 1021.1 577.4 1032.7 578.6 1044.5 578.2 1054.2 579.4 1066.8 578.9 1076.6 579.4 1087.8 579.7 1098.8 580.4 1109 581.8 1120.2 582.2M775 573.6 785.2 574.1 796 574.7 806.7 575.2 818.5 575.2 830.5 575.7 840.8 576.7 852 577 862.4 577.2 874 577.2 884.6 578.6 895.4 578.6 906.9 579.4 917.1 579.6 929.2 580.1 938.9 581 950.2 581 960.5 581.5 972.6 582.2 982.9 581.6 994.1 582.5 1005.9 582.8 1017.1 583.9 1026.5 584.5 1037.5 584.1 1048.6 585.1 1061.5 584.9 1071.7 586.2 1083.1 585.8 1093.4 587 1105.3 587 1115.7 586.9 1126.3 588.2M768 579.2 780.1 579.4 790.3 580.7 801.3 580.9 814 581.4 824.4 581.2 835.1 582.2 846 582.6 856 583.2 867.7 583.8 878.5 584.5 889.9 584.8 901 584.6 911.9 585 923.1 585.6 933.5 586.8 946 586.6 956.1 587.4 967.3 587.4 978 588.3 988 588.3 999.1 588.9 1010 589.2 1021.2 589.5 1034 589.8 1043.7 590.9 1054.4 590.7 1065.8 591.6 1076.4 591.6 1087 592 1098.8 592.9 1109.5 593.2 1121.6 593.4M775 586.1 786.4 586.5 796.8 586.8 807.2 587.6 817.8 587.4 828.7 588 841.4 588.6 850.4 589.3 861.5 588.9 873.5 589.2 885.1 590.4 896.5 590.8 906.3 590.7 917.1 591.7 929.2 591.6 939.6 592.6 949.9 593.1 961 593.1 971.9 594.2 982.5 593.9 994.7 594.6 1004.9 595 1016.4 595.5 1027.4 595.5 1038.9 596.1 1050.2 596.6 1061.3 596.9 1071.8 598.2 1082.1 598.5 1093.6 597.9 1104.7 598.8 1114.6 599.8 1126.9 600.4M768.9 399.9 774.1 406.1M779.6 399.5 774.1 406.1M779.6 399.5 786.3 406M790.2 400.9 786.3 406M790.2 400.9 795.6 406.4M801.5 400.4 795.6 406.4M801.5 400.4 808.1 406.9M813.1 400.9 808.1 406.9M813.1 400.9 817.4 408M823.8 402.1 817.4 408M823.8 402.1 829.4 407.5M834.4 402.1 829.4 407.5M834.4 402.1 841 408.4M847 403.1 841 408.4M847 403.1 852.3 409.3M857.8 402.5 852.3 409.3M857.8 402.5 863.2 409.8M869 403.6 863.2 409.8M869 403.6 873.2 410.1M878.2 404.5 873.2 410.1M878.2 404.5 884.5 410.4M889.2 405 884.5 410.4M889.2 405 894.9 410.8M900 404.3 894.9 410.8M900 404.3 905.6 411.5M911.9 405.4 905.6 411.5M911.9 405.4 916.8 411.6M923.2 406.1 916.8 411.6M923.2 406.1 929.3 412.3M933.1 406.4 929.3 412.3M933.1 406.4 940.3 412.3M944.6 407.1 940.3 412.3M944.6 407.1 949.6 413.4M956.3 407.3 949.6 413.4M956.3 407.3 961.1 413.7M966.2 408 961.1 413.7M966.2 408 972.3 413.6M977.5 407.6 972.3 413.6M977.5 407.6 983.6 414.2M988.8 408.7 983.6 414.2M988.8 408.7 995.1 414.7M999.6 408.8 995.1 414.7M999.6 408.8 1004.8 415.1M1011.2 408.9 1004.8 415.1M1011.2 408.9 1015.6 415.9M1021.2 409.6 1015.6 415.9M1021.2 409.6 1026.8 415.7M1033.5 410.3 1026.8 415.7M1033.5 410.3 1038.7 416.2M1043.4 410.7 1038.7 416.2M1043.4 410.7 1050.4 417.1M1055.7 411.2 1050.4 417.1M1055.7 411.2 1060.1 417.1M1065.3 410.9 1060.1 417.1M1065.3 410.9 1072 417.7M1078.1 412.1 1072 417.7M1078.1 412.1 1082.8 417.9M1087.5 412.6 1082.8 417.9M1087.5 412.6 1093.7 418.7M1099.2 412.9 1093.7 418.7M1099.2 412.9 1105.4 418.8M1109.7 413.4 1105.4 418.8M1109.7 413.4 1116.2 419.1M1120.7 413.5 1116.2 419.1M1120.7 413.5 1126 419.5M774.1 406.1 769.9 411.1M774.1 406.1 779.5 412M786.3 406 779.5 412M786.3 406 791.5 412.6M795.6 406.4 791.5 412.6M795.6 406.4 801.2 412.7M808.1 406.9 801.2 412.7M808.1 406.9 813.5 412.9M817.4 408 813.5 412.9M817.4 408 823.2 414.1M829.4 407.5 823.2 414.1M829.4 407.5 833.9 413.7M841 408.4 833.9 413.7M841 408.4 845.3 415M852.3 409.3 845.3 415M852.3 409.3 856.7 415M863.2 409.8 856.7 415M863.2 409.8 868.1 416M873.2 410.1 868.1 416M873.2 410.1 878 415.6M884.5 410.4 878 415.6M884.5 410.4 889.8 416.6M894.9 410.8 889.8 416.6M894.9 410.8 900.2 416.8M905.6 411.5 900.2 416.8M905.6 411.5 912.2 416.8M916.8 411.6 912.2 416.8M916.8 411.6 922.6 417.2M929.3 412.3 922.6 417.2M929.3 412.3 934.9 417.6M940.3 412.3 934.9 417.6M940.3 412.3 944.3 418.7M949.6 413.4 944.3 418.7M949.6 413.4 955.4 419.1M961.1 413.7 955.4 419.1M961.1 413.7 966.7 420.1M972.3 413.6 966.7 420.1M972.3 413.6 978.2 419.7M983.6 414.2 978.2 419.7M983.6 414.2 988.3 420.3M995.1 414.7 988.3 420.3M995.1 414.7 1000.6 421.1M1004.8 415.1 1000.6 421.1M1004.8 415.1 1011.5 421.3M1015.6 415.9 1011.5 421.3M1015.6 415.9 1023 421.6M1026.8 415.7 1023 421.6M1026.8 415.7 1033.1 422.7M1038.7 416.2 1033.1 422.7M1038.7 416.2 1044.6 422.5M1050.4 417.1 1044.6 422.5M1050.4 417.1 1055.6 423.3M1060.1 417.1 1055.6 423.3M1060.1 417.1 1065.5 423.3M1072 417.7 1065.5 423.3M1072 417.7 1077.6 423.7M1082.8 417.9 1077.6 423.7M1082.8 417.9 1087.7 424.4M1093.7 418.7 1087.7 424.4M1093.7 418.7 1098.1 424.5M1105.4 418.8 1098.1 424.5M1105.4 418.8 1111.1 424.9M1116.2 419.1 1111.1 424.9M1116.2 419.1 1121.7 425M1126 419.5 1121.7 425M769.9 411.1 774.1 417.8M779.5 412 774.1 417.8M779.5 412 785.1 418.8M791.5 412.6 785.1 418.8M791.5 412.6 797.5 418.4M801.2 412.7 797.5 418.4M801.2 412.7 806.7 419.6M813.5 412.9 806.7 419.6M813.5 412.9 819.1 419.6M823.2 414.1 819.1 419.6M823.2 414.1 828.5 419.4M833.9 413.7 828.5 419.4M833.9 413.7 840.9 420.6M845.3 415 840.9 420.6M845.3 415 851.4 420.7M856.7 415 851.4 420.7M856.7 415 862 421.1M868.1 416 862 421.1M868.1 416 873.3 421.9M878 415.6 873.3 421.9M878 415.6 884.3 422M889.8 416.6 884.3 422M889.8 416.6 894.9 422.8M900.2 416.8 894.9 422.8M900.2 416.8 907.5 422.7M912.2 416.8 907.5 422.7M912.2 416.8 918.1 423.7M922.6 417.2 918.1 423.7M922.6 417.2 927.9 423.5M934.9 417.6 927.9 423.5M934.9 417.6 940.2 424M944.3 418.7 940.2 424M944.3 418.7 949.7 424.3M955.4 419.1 949.7 424.3M955.4 419.1 962.2 425.1M966.7 420.1 962.2 425.1M966.7 420.1 971.4 425.4M978.2 419.7 971.4 425.4M978.2 419.7 983.5 426.1M988.3 420.3 983.5 426.1M988.3 420.3 993.7 427M1000.6 421.1 993.7 427M1000.6 421.1 1005.9 426.7M1011.5 421.3 1005.9 426.7M1011.5 421.3 1016.1 427.2M1023 421.6 1016.1 427.2M1023 421.6 1026.4 428M1033.1 422.7 1026.4 428M1033.1 422.7 1038 428.5M1044.6 422.5 1038 428.5M1044.6 422.5 1050.2 428.6M1055.6 423.3 1050.2 428.6M1055.6 423.3 1060 429.1M1065.5 423.3 1060 429.1M1065.5 423.3 1071.4 429.1M1077.6 423.7 1071.4 429.1M1077.6 423.7 1082.3 429.9M1087.7 424.4 1082.3 429.9M1087.7 424.4 1092.6 430.9M1098.1 424.5 1092.6 430.9M1098.1 424.5 1104.9 431M1111.1 424.9 1104.9 431M1111.1 424.9 1114.6 431.7M1121.7 425 1114.6 431.7M1121.7 425 1126.2 432.3M774.1 417.8 769.3 423.2M774.1 417.8 780.6 424.1M785.1 418.8 780.6 424.1M785.1 418.8 790.7 424.8M797.5 418.4 790.7 424.8M797.5 418.4 801.6 424.5M806.7 419.6 801.6 424.5M806.7 419.6 812 425.5M819.1 419.6 812 425.5M819.1 419.6 823.5 425.3M828.5 419.4 823.5 425.3M828.5 419.4 834 426.5M840.9 420.6 834 426.5M840.9 420.6 845.5 427.1M851.4 420.7 845.5 427.1M851.4 420.7 857.9 427.5M862 421.1 857.9 427.5M862 421.1 867.4 428.1M873.3 421.9 867.4 428.1M873.3 421.9 879.3 428.4M884.3 422 879.3 428.4M884.3 422 890.9 428.2M894.9 422.8 890.9 428.2M894.9 422.8 900.7 429.3M907.5 422.7 900.7 429.3M907.5 422.7 911.5 428.8M918.1 423.7 911.5 428.8M918.1 423.7 922 429.8M927.9 423.5 922 429.8M927.9 423.5 933.6 430.7M940.2 424 933.6 430.7M940.2 424 943.9 430.5M949.7 424.3 943.9 430.5M949.7 424.3 956.5 431.2M962.2 425.1 956.5 431.2M962.2 425.1 967.7 431.7M971.4 425.4 967.7 431.7M971.4 425.4 978.8 432.5M983.5 426.1 978.8 432.5M983.5 426.1 989.8 432.5M993.7 427 989.8 432.5M993.7 427 999.8 432.8M1005.9 426.7 999.8 432.8M1005.9 426.7 1010.4 432.9M1016.1 427.2 1010.4 432.9M1016.1 427.2 1022 433.6M1026.4 428 1022 433.6M1026.4 428 1032.8 433.6M1038 428.5 1032.8 433.6M1038 428.5 1045.1 434.4M1050.2 428.6 1045.1 434.4M1050.2 428.6 1055 434.8M1060 429.1 1055 434.8M1060 429.1 1066.1 435.8M1071.4 429.1 1066.1 435.8M1071.4 429.1 1078 436M1082.3 429.9 1078 436M1082.3 429.9 1089 436.2M1092.6 430.9 1089 436.2M1092.6 430.9 1098.9 436.6M1104.9 431 1098.9 436.6M1104.9 431 1111 436.8M1114.6 431.7 1111 436.8M1114.6 431.7 1120.4 438M1126.2 432.3 1120.4 438M769.3 423.2 773.9 429.3M780.6 424.1 773.9 429.3M780.6 424.1 785.2 430.2M790.7 424.8 785.2 430.2M790.7 424.8 796.4 430.3M801.6 424.5 796.4 430.3M801.6 424.5 807.2 430.8M812 425.5 807.2 430.8M812 425.5 817.8 431.5M823.5 425.3 817.8 431.5M823.5 425.3 828.9 431.6M834 426.5 828.9 431.6M834 426.5 841.4 432.9M845.5 427.1 841.4 432.9M845.5 427.1 851.2 432.9M857.9 427.5 851.2 432.9M857.9 427.5 861.6 432.7M867.4 428.1 861.6 432.7M867.4 428.1 873.5 434.3M879.3 428.4 873.5 434.3M879.3 428.4 883.6 434.1M890.9 428.2 883.6 434.1M890.9 428.2 896.1 434M900.7 429.3 896.1 434M900.7 429.3 906.7 434.8M911.5 428.8 906.7 434.8M911.5 428.8 918.1 435.9M922 429.8 918.1 435.9M922 429.8 929.3 436.3M933.6 430.7 929.3 436.3M933.6 430.7 938.6 436.6M943.9 430.5 938.6 436.6M943.9 430.5 950.6 436.6M956.5 431.2 950.6 436.6M956.5 431.2 960.8 437.2M967.7 431.7 960.8 437.2M967.7 431.7 972.3 437.6M978.8 432.5 972.3 437.6M978.8 432.5 984.5 437.8M989.8 432.5 984.5 437.8M989.8 432.5 995.3 438.2M999.8 432.8 995.3 438.2M999.8 432.8 1005.9 439M1010.4 432.9 1005.9 439M1010.4 432.9 1016.3 439.4M1022 433.6 1016.3 439.4M1022 433.6 1026.7 439.6M1032.8 433.6 1026.7 439.6M1032.8 433.6 1038.3 440M1045.1 434.4 1038.3 440M1045.1 434.4 1050.3 441M1055 434.8 1050.3 441M1055 434.8 1060.8 441.5M1066.1 435.8 1060.8 441.5M1066.1 435.8 1070.8 441.1M1078 436 1070.8 441.1M1078 436 1081.6 442.6M1089 436.2 1081.6 442.6M1089 436.2 1093.5 443.1M1098.9 436.6 1093.5 443.1M1098.9 436.6 1104.1 442.8M1111 436.8 1104.1 442.8M1111 436.8 1115.8 443.8M1120.4 438 1115.8 443.8M1120.4 438 1126.3 443.8M773.9 429.3 768.7 435.2M773.9 429.3 780.9 436.5M785.2 430.2 780.9 436.5M785.2 430.2 790.9 436M796.4 430.3 790.9 436M796.4 430.3 802.8 436.8M807.2 430.8 802.8 436.8M807.2 430.8 813.5 437.2M817.8 431.5 813.5 437.2M817.8 431.5 823.1 438.1M828.9 431.6 823.1 438.1M828.9 431.6 834.1 438.7M841.4 432.9 834.1 438.7M841.4 432.9 845.3 438.5M851.2 432.9 845.3 438.5M851.2 432.9 855.9 438.7M861.6 432.7 855.9 438.7M861.6 432.7 868.3 439M873.5 434.3 868.3 439M873.5 434.3 878.2 439.4M883.6 434.1 878.2 439.4M883.6 434.1 888.9 440.4M896.1 434 888.9 440.4M896.1 434 900.4 441.1M906.7 434.8 900.4 441.1M906.7 434.8 912.4 441.3M918.1 435.9 912.4 441.3M918.1 435.9 923.9 442.3M929.3 436.3 923.9 442.3M929.3 436.3 933.6 442.5M938.6 436.6 933.6 442.5M938.6 436.6 945.4 442.2M950.6 436.6 945.4 442.2M950.6 436.6 956.6 442.5M960.8 437.2 956.6 442.5M960.8 437.2 967.4 444M972.3 437.6 967.4 444M972.3 437.6 978.3 444.2M984.5 437.8 978.3 444.2M984.5 437.8 989.3 444.3M995.3 438.2 989.3 444.3M995.3 438.2 999.1 444.7M1005.9 439 999.1 444.7M1005.9 439 1010.6 445.6M1016.3 439.4 1010.6 445.6M1016.3 439.4 1022.8 446.2M1026.7 439.6 1022.8 446.2M1026.7 439.6 1032.6 446.6M1038.3 440 1032.6 446.6M1038.3 440 1044.9 446M1050.3 441 1044.9 446M1050.3 441 1055.1 446.5M1060.8 441.5 1055.1 446.5M1060.8 441.5 1065.1 447.4M1070.8 441.1 1065.1 447.4M1070.8 441.1 1077.5 447.5M1081.6 442.6 1077.5 447.5M1081.6 442.6 1087.6 448.3M1093.5 443.1 1087.6 448.3M1093.5 443.1 1099.1 448.3M1104.1 442.8 1099.1 448.3M1104.1 442.8 1109.3 448.6M1115.8 443.8 1109.3 448.6M1115.8 443.8 1120.6 450.2M1126.3 443.8 1120.6 450.2M768.7 435.2 773.8 442.1M780.9 436.5 773.8 442.1M780.9 436.5 785.8 442.7M790.9 436 785.8 442.7M790.9 436 797.2 442.1M802.8 436.8 797.2 442.1M802.8 436.8 807.1 443.5M813.5 437.2 807.1 443.5M813.5 437.2 818.8 444M823.1 438.1 818.8 444M823.1 438.1 828.5 444.4M834.1 438.7 828.5 444.4M834.1 438.7 840.3 444.8M845.3 438.5 840.3 444.8M845.3 438.5 851.7 444.7M855.9 438.7 851.7 444.7M855.9 438.7 862.6 444.7M868.3 439 862.6 444.7M868.3 439 874.5 446.2M878.2 439.4 874.5 446.2M878.2 439.4 884.8 446.4M888.9 440.4 884.8 446.4M888.9 440.4 896 446.5M900.4 441.1 896 446.5M900.4 441.1 905.9 447.2M912.4 441.3 905.9 447.2M912.4 441.3 918.6 447.9M923.9 442.3 918.6 447.9M923.9 442.3 929.2 447.5M933.6 442.5 929.2 447.5M933.6 442.5 939.1 448.1M945.4 442.2 939.1 448.1M945.4 442.2 950.6 449.3M956.6 442.5 950.6 449.3M956.6 442.5 961.8 449.4M967.4 444 961.8 449.4M967.4 444 972.3 449.3M978.3 444.2 972.3 449.3M978.3 444.2 983 450.7M989.3 444.3 983 450.7M989.3 444.3 995.4 450.8M999.1 444.7 995.4 450.8M999.1 444.7 1005.9 450.7M1010.6 445.6 1005.9 450.7M1010.6 445.6 1015.5 450.9M1022.8 446.2 1015.5 450.9M1022.8 446.2 1026.4 451.5M1032.6 446.6 1026.4 451.5M1032.6 446.6 1039.6 452.4M1044.9 446 1039.6 452.4M1044.9 446 1048.9 452.3M1055.1 446.5 1048.9 452.3M1055.1 446.5 1059.4 452.6M1065.1 447.4 1059.4 452.6M1065.1 447.4 1070.7 453.5M1077.5 447.5 1070.7 453.5M1077.5 447.5 1081.7 453.8M1087.6 448.3 1081.7 453.8M1087.6 448.3 1093.8 454.1M1099.1 448.3 1093.8 454.1M1099.1 448.3 1103.7 455.3M1109.3 448.6 1103.7 455.3M1109.3 448.6 1115 455.6M1120.6 450.2 1115 455.6M1120.6 450.2 1126 456.1M773.8 442.1 767.9 447.3M773.8 442.1 780.8 447.8M785.8 442.7 780.8 447.8M785.8 442.7 791.3 448.1M797.2 442.1 791.3 448.1M797.2 442.1 801.1 448.8M807.1 443.5 801.1 448.8M807.1 443.5 812.9 448.8M818.8 444 812.9 448.8M818.8 444 824.1 449.7M828.5 444.4 824.1 449.7M828.5 444.4 834.7 450.5M840.3 444.8 834.7 450.5M840.3 444.8 846.9 450.5M851.7 444.7 846.9 450.5M851.7 444.7 856.6 451.4M862.6 444.7 856.6 451.4M862.6 444.7 868.6 451.5M874.5 446.2 868.6 451.5M874.5 446.2 879.3 451.8M884.8 446.4 879.3 451.8M884.8 446.4 890.5 452.5M896 446.5 890.5 452.5M896 446.5 901.8 452.6M905.9 447.2 901.8 452.6M905.9 447.2 911 453.7M918.6 447.9 911 453.7M918.6 447.9 923.2 454.1M929.2 447.5 923.2 454.1M929.2 447.5 934.5 454.5M939.1 448.1 934.5 454.5M939.1 448.1 944.7 455M950.6 449.3 944.7 455M950.6 449.3 956.3 454.9M961.8 449.4 956.3 454.9M961.8 449.4 966.3 455M972.3 449.3 966.3 455M972.3 449.3 977.4 455.7M983 450.7 977.4 455.7M983 450.7 988.6 456.5M995.4 450.8 988.6 456.5M995.4 450.8 1001 456.9M1005.9 450.7 1001 456.9M1005.9 450.7 1011.4 456.7M1015.5 450.9 1011.4 456.7M1015.5 450.9 1022.4 457.7M1026.4 451.5 1022.4 457.7M1026.4 451.5 1033.6 457.9M1039.6 452.4 1033.6 457.9M1039.6 452.4 1044.3 458.6M1048.9 452.3 1044.3 458.6M1048.9 452.3 1055.6 458.9M1059.4 452.6 1055.6 458.9M1059.4 452.6 1066.7 459.9M1070.7 453.5 1066.7 459.9M1070.7 453.5 1077.1 459.9M1081.7 453.8 1077.1 459.9M1081.7 453.8 1088.5 460.3M1093.8 454.1 1088.5 460.3M1093.8 454.1 1100 461.3M1103.7 455.3 1100 461.3M1103.7 455.3 1110 461.4M1115 455.6 1110 461.4M1115 455.6 1120.1 462.1M1126 456.1 1120.1 462.1M767.9 447.3 774.8 453.2M780.8 447.8 774.8 453.2M780.8 447.8 784.4 454.6M791.3 448.1 784.4 454.6M791.3 448.1 797.1 454.8M801.1 448.8 797.1 454.8M801.1 448.8 807.3 454.8M812.9 448.8 807.3 454.8M812.9 448.8 818.5 456M824.1 449.7 818.5 456M824.1 449.7 829.8 455.4M834.7 450.5 829.8 455.4M834.7 450.5 839.9 455.9M846.9 450.5 839.9 455.9M846.9 450.5 852.3 457.3M856.6 451.4 852.3 457.3M856.6 451.4 863.4 457.2M868.6 451.5 863.4 457.2M868.6 451.5 873.1 457.2M879.3 451.8 873.1 457.2M879.3 451.8 884 458M890.5 452.5 884 458M890.5 452.5 895.3 458.4M901.8 452.6 895.3 458.4M901.8 452.6 907 459.5M911 453.7 907 459.5M911 453.7 917.2 459.9M923.2 454.1 917.2 459.9M923.2 454.1 928 459.7M934.5 454.5 928 459.7M934.5 454.5 940.2 459.9M944.7 455 940.2 459.9M944.7 455 949.6 461.4M956.3 454.9 949.6 461.4M956.3 454.9 961.4 461.2M966.3 455 961.4 461.2M966.3 455 973.1 462.2M977.4 455.7 973.1 462.2M977.4 455.7 983.2 462.5M988.6 456.5 983.2 462.5M988.6 456.5 993.7 463M1001 456.9 993.7 463M1001 456.9 1005.3 462.9M1011.4 456.7 1005.3 462.9M1011.4 456.7 1015.4 462.9M1022.4 457.7 1015.4 462.9M1022.4 457.7 1027.3 463.4M1033.6 457.9 1027.3 463.4M1033.6 457.9 1038.9 464.9M1044.3 458.6 1038.9 464.9M1044.3 458.6 1049 465.1M1055.6 458.9 1049 465.1M1055.6 458.9 1060.7 465.4M1066.7 459.9 1060.7 465.4M1066.7 459.9 1072.1 465.6M1077.1 459.9 1072.1 465.6M1077.1 459.9 1083.2 465.7M1088.5 460.3 1083.2 465.7M1088.5 460.3 1093.9 466.6M1100 461.3 1093.9 466.6M1100 461.3 1103.8 466.7M1110 461.4 1103.8 466.7M1110 461.4 1116.5 467.6M1120.1 462.1 1116.5 467.6M1120.1 462.1 1126.5 467.9M774.8 453.2 769.8 459.7M774.8 453.2 779.4 460.5M784.4 454.6 779.4 460.5M784.4 454.6 791.8 460.8M797.1 454.8 791.8 460.8M797.1 454.8 802.5 461.1M807.3 454.8 802.5 461.1M807.3 454.8 812.6 461.9M818.5 456 812.6 461.9M818.5 456 824.5 461.4M829.8 455.4 824.5 461.4M829.8 455.4 835.7 462.1M839.9 455.9 835.7 462.1M839.9 455.9 845 463.1M852.3 457.3 845 463.1M852.3 457.3 856.4 463M863.4 457.2 856.4 463M863.4 457.2 867.1 463.5M873.1 457.2 867.1 463.5M873.1 457.2 879.1 464.3M884 458 879.1 464.3M884 458 891 464.9M895.3 458.4 891 464.9M895.3 458.4 901.4 464.7M907 459.5 901.4 464.7M907 459.5 913 465M917.2 459.9 913 465M917.2 459.9 922.6 465.8M928 459.7 922.6 465.8M928 459.7 933.7 466.2M940.2 459.9 933.7 466.2M940.2 459.9 944.2 466.3M949.6 461.4 944.2 466.3M949.6 461.4 954.9 467M961.4 461.2 954.9 467M961.4 461.2 966.4 467.9M973.1 462.2 966.4 467.9M973.1 462.2 977.5 467.6M983.2 462.5 977.5 467.6M983.2 462.5 989.5 468M993.7 463 989.5 468M993.7 463 1000.7 468.8M1005.3 462.9 1000.7 468.8M1005.3 462.9 1010.2 469.5M1015.4 462.9 1010.2 469.5M1015.4 462.9 1023.1 469.4M1027.3 463.4 1023.1 469.4M1027.3 463.4 1033.1 470.2M1038.9 464.9 1033.1 470.2M1038.9 464.9 1045 471.1M1049 465.1 1045 471.1M1049 465.1 1054 470.9M1060.7 465.4 1054 470.9M1060.7 465.4 1066.7 471.3M1072.1 465.6 1066.7 471.3M1072.1 465.6 1077 472M1083.2 465.7 1077 472M1083.2 465.7 1086.9 471.8M1093.9 466.6 1086.9 471.8M1093.9 466.6 1099.9 472.6M1103.8 466.7 1099.9 472.6M1103.8 466.7 1109.9 473.3M1116.5 467.6 1109.9 473.3M1116.5 467.6 1121.6 474.1M1126.5 467.9 1121.6 474.1M769.8 459.7 773.6 465.9M779.4 460.5 773.6 465.9M779.4 460.5 784.4 466.3M791.8 460.8 784.4 466.3M791.8 460.8 797.2 466.6M802.5 461.1 797.2 466.6M802.5 461.1 807.2 467.5M812.6 461.9 807.2 467.5M812.6 461.9 818.9 468M824.5 461.4 818.9 468M824.5 461.4 829.6 467.8M835.7 462.1 829.6 467.8M835.7 462.1 840.9 468.4M845 463.1 840.9 468.4M845 463.1 850.4 468.4M856.4 463 850.4 468.4M856.4 463 863.5 469.5M867.1 463.5 863.5 469.5M867.1 463.5 872.5 470M879.1 464.3 872.5 470M879.1 464.3 885.1 469.6M891 464.9 885.1 469.6M891 464.9 896.6 470.2M901.4 464.7 896.6 470.2M901.4 464.7 906.5 471.3M913 465 906.5 471.3M913 465 917.5 471.3M922.6 465.8 917.5 471.3M922.6 465.8 928.5 472.1M933.7 466.2 928.5 472.1M933.7 466.2 940.5 472.8M944.2 466.3 940.5 472.8M944.2 466.3 951.6 473.2M954.9 467 951.6 473.2M954.9 467 961.4 473.1M966.4 467.9 961.4 473.1M966.4 467.9 973.4 474.2M977.5 467.6 973.4 474.2M977.5 467.6 983.1 474.5M989.5 468 983.1 474.5M989.5 468 994.2 474M1000.7 468.8 994.2 474M1000.7 468.8 1005.4 475.5M1010.2 469.5 1005.4 475.5M1010.2 469.5 1016.6 475.8M1023.1 469.4 1016.6 475.8M1023.1 469.4 1028.3 476.3M1033.1 470.2 1028.3 476.3M1033.1 470.2 1038.1 476.8M1045 471.1 1038.1 476.8M1045 471.1 1048.6 476.8M1054 470.9 1048.6 476.8M1054 470.9 1059.6 477.1M1066.7 471.3 1059.6 477.1M1066.7 471.3 1072.3 478M1077 472 1072.3 478M1077 472 1083.6 478.2M1086.9 471.8 1083.6 478.2M1086.9 471.8 1093.5 478.1M1099.9 472.6 1093.5 478.1M1099.9 472.6 1104.5 479.5M1109.9 473.3 1104.5 479.5M1109.9 473.3 1115.1 479.8M1121.6 474.1 1115.1 479.8M1121.6 474.1 1126.1 480.2M773.6 465.9 768.3 472.1M773.6 465.9 779.2 471.5M784.4 466.3 779.2 471.5M784.4 466.3 791.2 472.8M797.2 466.6 791.2 472.8M797.2 466.6 802.5 472.8M807.2 467.5 802.5 472.8M807.2 467.5 813.5 473M818.9 468 813.5 473M818.9 468 823.6 473.5M829.6 467.8 823.6 473.5M829.6 467.8 834.4 473.7M840.9 468.4 834.4 473.7M840.9 468.4 845.4 474.7M850.4 468.4 845.4 474.7M850.4 468.4 857.2 474.9M863.5 469.5 857.2 474.9M863.5 469.5 868.2 475.3M872.5 470 868.2 475.3M872.5 470 879.7 475.4M885.1 469.6 879.7 475.4M885.1 469.6 890.6 476.9M896.6 470.2 890.6 476.9M896.6 470.2 901.2 477M906.5 471.3 901.2 477M906.5 471.3 913.1 476.9M917.5 471.3 913.1 476.9M917.5 471.3 922.1 477.7M928.5 472.1 922.1 477.7M928.5 472.1 934.5 478.2M940.5 472.8 934.5 478.2M940.5 472.8 945 478.5M951.6 473.2 945 478.5M951.6 473.2 955.9 479.5M961.4 473.1 955.9 479.5M961.4 473.1 966.1 479.7M973.4 474.2 966.1 479.7M973.4 474.2 977.1 480.3M983.1 474.5 977.1 480.3M983.1 474.5 988.5 480.7M994.2 474 988.5 480.7M994.2 474 999.6 481M1005.4 475.5 999.6 481M1005.4 475.5 1011 481.8M1016.6 475.8 1011 481.8M1016.6 475.8 1021.9 481.7M1028.3 476.3 1021.9 481.7M1028.3 476.3 1033 481.8M1038.1 476.8 1033 481.8M1038.1 476.8 1045 482.4M1048.6 476.8 1045 482.4M1048.6 476.8 1054.2 482.6M1059.6 477.1 1054.2 482.6M1059.6 477.1 1066.5 483.9M1072.3 478 1066.5 483.9M1072.3 478 1077.2 484.4M1083.6 478.2 1077.2 484.4M1083.6 478.2 1087.4 484.8M1093.5 478.1 1087.4 484.8M1093.5 478.1 1099.6 484.4M1104.5 479.5 1099.6 484.4M1104.5 479.5 1109.1 485.1M1115.1 479.8 1109.1 485.1M1115.1 479.8 1120.8 485.6M1126.1 480.2 1120.8 485.6M768.3 472.1 775 477.5M779.2 471.5 775 477.5M779.2 471.5 785 478M791.2 472.8 785 478M791.2 472.8 795.8 478.6M802.5 472.8 795.8 478.6M802.5 472.8 807.7 478.8M813.5 473 807.7 478.8M813.5 473 817.7 479.8M823.6 473.5 817.7 479.8M823.6 473.5 828.6 480.4M834.4 473.7 828.6 480.4M834.4 473.7 840.8 480.1M845.4 474.7 840.8 480.1M845.4 474.7 850.4 481.3M857.2 474.9 850.4 481.3M857.2 474.9 861.4 481.6M868.2 475.3 861.4 481.6M868.2 475.3 873.6 482M879.7 475.4 873.6 482M879.7 475.4 883.8 482.5M890.6 476.9 883.8 482.5M890.6 476.9 895 482.7M901.2 477 895 482.7M901.2 477 907.5 483.2M913.1 476.9 907.5 483.2M913.1 476.9 916.8 483.2M922.1 477.7 916.8 483.2M922.1 477.7 928.3 484.3M934.5 478.2 928.3 484.3M934.5 478.2 940.2 484.2M945 478.5 940.2 484.2M945 478.5 950.7 484.6M955.9 479.5 950.7 484.6M955.9 479.5 961.5 485M966.1 479.7 961.5 485M966.1 479.7 973.5 485.5M977.1 480.3 973.5 485.5M977.1 480.3 983.1 486.3M988.5 480.7 983.1 486.3M988.5 480.7 993.9 486.1M999.6 481 993.9 486.1M999.6 481 1005.4 487.4M1011 481.8 1005.4 487.4M1011 481.8 1016.2 487.2M1021.9 481.7 1016.2 487.2M1021.9 481.7 1027 488M1033 481.8 1027 488M1033 481.8 1038 488.4M1045 482.4 1038 488.4M1045 482.4 1049.5 488.2M1054.2 482.6 1049.5 488.2M1054.2 482.6 1060.1 489.6M1066.5 483.9 1060.1 489.6M1066.5 483.9 1070.9 490M1077.2 484.4 1070.9 490M1077.2 484.4 1081.6 490.1M1087.4 484.8 1081.6 490.1M1087.4 484.8 1093.3 490.7M1099.6 484.4 1093.3 490.7M1099.6 484.4 1103.4 490.5M1109.1 485.1 1103.4 490.5M1109.1 485.1 1115.3 491.9M1120.8 485.6 1115.3 491.9M1120.8 485.6 1126.5 492.3M775 477.5 769.1 484.1M775 477.5 779.1 484.4M785 478 779.1 484.4M785 478 790.5 484.1M795.8 478.6 790.5 484.1M795.8 478.6 802.1 484.8M807.7 478.8 802.1 484.8M807.7 478.8 814.1 485.8M817.7 479.8 814.1 485.8M817.7 479.8 824.5 485.5M828.6 480.4 824.5 485.5M828.6 480.4 834.4 486.1M840.8 480.1 834.4 486.1M840.8 480.1 845.6 486.3M850.4 481.3 845.6 486.3M850.4 481.3 856.4 486.8M861.4 481.6 856.4 486.8M861.4 481.6 867.6 487.1M873.6 482 867.6 487.1M873.6 482 878.6 488.5M883.8 482.5 878.6 488.5M883.8 482.5 890.7 488.5M895 482.7 890.7 488.5M895 482.7 902 489.4M907.5 483.2 902 489.4M907.5 483.2 911.1 488.7M916.8 483.2 911.1 488.7M916.8 483.2 922.6 489.8M928.3 484.3 922.6 489.8M928.3 484.3 935.1 489.6M940.2 484.2 935.1 489.6M940.2 484.2 945.4 491M950.7 484.6 945.4 491M950.7 484.6 955.5 491.4M961.5 485 955.5 491.4M961.5 485 967.8 491M973.5 485.5 967.8 491M973.5 485.5 978.3 491.9M983.1 486.3 978.3 491.9M983.1 486.3 989.6 491.9M993.9 486.1 989.6 491.9M993.9 486.1 1000.4 492.2M1005.4 487.4 1000.4 492.2M1005.4 487.4 1010 493.2M1016.2 487.2 1010 493.2M1016.2 487.2 1021.7 493.6M1027 488 1021.7 493.6M1027 488 1032.4 494.7M1038 488.4 1032.4 494.7M1038 488.4 1043.8 494.6M1049.5 488.2 1043.8 494.6M1049.5 488.2 1054.7 495.5M1060.1 489.6 1054.7 495.5M1060.1 489.6 1065.3 496M1070.9 490 1065.3 496M1070.9 490 1076.3 496.3M1081.6 490.1 1076.3 496.3M1081.6 490.1 1087.8 496.4M1093.3 490.7 1087.8 496.4M1093.3 490.7 1098.4 497.1M1103.4 490.5 1098.4 497.1M1103.4 490.5 1109.4 497.5M1115.3 491.9 1109.4 497.5M1115.3 491.9 1121.3 498.1M1126.5 492.3 1121.3 498.1M769.1 484.1 775.6 490.1M779.1 484.4 775.6 490.1M779.1 484.4 784.8 490.6M790.5 484.1 784.8 490.6M790.5 484.1 795.6 491M802.1 484.8 795.6 491M802.1 484.8 808.4 490.7M814.1 485.8 808.4 490.7M814.1 485.8 817.5 491.9M824.5 485.5 817.5 491.9M824.5 485.5 829.2 492.2M834.4 486.1 829.2 492.2M834.4 486.1 841.2 492.9M845.6 486.3 841.2 492.9M845.6 486.3 851.5 493.3M856.4 486.8 851.5 493.3M856.4 486.8 863.4 493.6M867.6 487.1 863.4 493.6M867.6 487.1 873.2 494.2M878.6 488.5 873.2 494.2M878.6 488.5 884.3 494.7M890.7 488.5 884.3 494.7M890.7 488.5 895.2 494.6M902 489.4 895.2 494.6M902 489.4 905.5 494.6M911.1 488.7 905.5 494.6M911.1 488.7 918.4 495.4M922.6 489.8 918.4 495.4M922.6 489.8 929 495.9M935.1 489.6 929 495.9M935.1 489.6 940 496.4M945.4 491 940 496.4M945.4 491 949.7 496.6M955.5 491.4 949.7 496.6M955.5 491.4 961.8 496.8M967.8 491 961.8 496.8M967.8 491 973.5 497.2M978.3 491.9 973.5 497.2M978.3 491.9 983.6 498.6M989.6 491.9 983.6 498.6M989.6 491.9 995 498.2M1000.4 492.2 995 498.2M1000.4 492.2 1004.6 499.3M1010 493.2 1004.6 499.3M1010 493.2 1016.3 499M1021.7 493.6 1016.3 499M1021.7 493.6 1026.7 500.1M1032.4 494.7 1026.7 500.1M1032.4 494.7 1037.5 500.1M1043.8 494.6 1037.5 500.1M1043.8 494.6 1050.5 500.5M1054.7 495.5 1050.5 500.5M1054.7 495.5 1061.3 500.7M1065.3 496 1061.3 500.7M1065.3 496 1070.8 501.1M1076.3 496.3 1070.8 501.1M1076.3 496.3 1083 502.2M1087.8 496.4 1083 502.2M1087.8 496.4 1094.1 502.9M1098.4 497.1 1094.1 502.9M1098.4 497.1 1105 502.5M1109.4 497.5 1105 502.5M1109.4 497.5 1115.4 502.9M1121.3 498.1 1115.4 502.9M1121.3 498.1 1127.2 503.7M775.6 490.1 768.9 496M775.6 490.1 781.1 496.1M784.8 490.6 781.1 496.1M784.8 490.6 790.8 496.9M795.6 491 790.8 496.9M795.6 491 802.8 496.5M808.4 490.7 802.8 496.5M808.4 490.7 812.9 497.9M817.5 491.9 812.9 497.9M817.5 491.9 825.1 498.3M829.2 492.2 825.1 498.3M829.2 492.2 835 497.8M841.2 492.9 835 497.8M841.2 492.9 846.9 498.3M851.5 493.3 846.9 498.3M851.5 493.3 857.2 498.9M863.4 493.6 857.2 498.9M863.4 493.6 868.8 499.4M873.2 494.2 868.8 499.4M873.2 494.2 878.7 500.4M884.3 494.7 878.7 500.4M884.3 494.7 890.5 501M895.2 494.6 890.5 501M895.2 494.6 900.2 500.4M905.5 494.6 900.2 500.4M905.5 494.6 912.4 501.3M918.4 495.4 912.4 501.3M918.4 495.4 923.9 501.7M929 495.9 923.9 501.7M929 495.9 933 502.1M940 496.4 933 502.1M940 496.4 944.4 503M949.7 496.6 944.4 503M949.7 496.6 956.7 503.5M961.8 496.8 956.7 503.5M961.8 496.8 966.1 503.6M973.5 497.2 966.1 503.6M973.5 497.2 977.3 504.5M983.6 498.6 977.3 504.5M983.6 498.6 988.2 504.5M995 498.2 988.2 504.5M995 498.2 1000.5 504.4M1004.6 499.3 1000.5 504.4M1004.6 499.3 1011.2 504.8M1016.3 499 1011.2 504.8M1016.3 499 1021 505.4M1026.7 500.1 1021 505.4M1026.7 500.1 1032.1 506M1037.5 500.1 1032.1 506M1037.5 500.1 1044.4 507.1M1050.5 500.5 1044.4 507.1M1050.5 500.5 1054.5 507M1061.3 500.7 1054.5 507M1061.3 500.7 1066.4 507.2M1070.8 501.1 1066.4 507.2M1070.8 501.1 1076.6 507.7M1083 502.2 1076.6 507.7M1083 502.2 1088.7 508.2M1094.1 502.9 1088.7 508.2M1094.1 502.9 1099.6 508.3M1105 502.5 1099.6 508.3M1105 502.5 1109.6 508.9M1115.4 502.9 1109.6 508.9M1115.4 502.9 1120.4 509.2M1127.2 503.7 1120.4 509.2M768.9 496 774.3 502.2M781.1 496.1 774.3 502.2M781.1 496.1 785.9 502.8M790.8 496.9 785.9 502.8M790.8 496.9 796.1 502.4M802.8 496.5 796.1 502.4M802.8 496.5 806.9 503.1M812.9 497.9 806.9 503.1M812.9 497.9 817.7 503.9M825.1 498.3 817.7 503.9M825.1 498.3 829.3 503.4M835 497.8 829.3 503.4M835 497.8 840.5 504.3M846.9 498.3 840.5 504.3M846.9 498.3 850.8 504.6M857.2 498.9 850.8 504.6M857.2 498.9 862.9 505.9M868.8 499.4 862.9 505.9M868.8 499.4 873.7 505.4M878.7 500.4 873.7 505.4M878.7 500.4 883.5 506M890.5 501 883.5 506M890.5 501 894.9 506.5M900.2 500.4 894.9 506.5M900.2 500.4 906.4 506.8M912.4 501.3 906.4 506.8M912.4 501.3 916.8 508M923.9 501.7 916.8 508M923.9 501.7 929.5 508.2M933 502.1 929.5 508.2M933 502.1 940.4 508.5M944.4 503 940.4 508.5M944.4 503 951 508.7M956.7 503.5 951 508.7M956.7 503.5 961.9 509.7M966.1 503.6 961.9 509.7M966.1 503.6 973 510.1M977.3 504.5 973 510.1M977.3 504.5 983.7 510M988.2 504.5 983.7 510M988.2 504.5 995.2 511.1M1000.5 504.4 995.2 511.1M1000.5 504.4 1004.9 510.6M1011.2 504.8 1004.9 510.6M1011.2 504.8 1015.4 511.2M1021 505.4 1015.4 511.2M1021 505.4 1026.8 511.5M1032.1 506 1026.8 511.5M1032.1 506 1037.8 512.1M1044.4 507.1 1037.8 512.1M1044.4 507.1 1048.8 513.3M1054.5 507 1048.8 513.3M1054.5 507 1059.6 512.6M1066.4 507.2 1059.6 512.6M1066.4 507.2 1072.4 513.5M1076.6 507.7 1072.4 513.5M1076.6 507.7 1083 513.9M1088.7 508.2 1083 513.9M1088.7 508.2 1092.4 514M1099.6 508.3 1092.4 514M1099.6 508.3 1105.4 514.4M1109.6 508.9 1105.4 514.4M1109.6 508.9 1115.4 515.1M1120.4 509.2 1115.4 515.1M1120.4 509.2 1126.8 515.7M774.3 502.2 769.7 507.2M774.3 502.2 780.1 508.6M785.9 502.8 780.1 508.6M785.9 502.8 791.1 509M796.1 502.4 791.1 509M796.1 502.4 801 509.3M806.9 503.1 801 509.3M806.9 503.1 812.8 509.9M817.7 503.9 812.8 509.9M817.7 503.9 824.4 509.5M829.3 503.4 824.4 509.5M829.3 503.4 835.6 509.8M840.5 504.3 835.6 509.8M840.5 504.3 846.1 510.9M850.8 504.6 846.1 510.9M850.8 504.6 856.3 510.5M862.9 505.9 856.3 510.5M862.9 505.9 868.7 511.1M873.7 505.4 868.7 511.1M873.7 505.4 879.6 511.9M883.5 506 879.6 511.9M883.5 506 889.3 512.8M894.9 506.5 889.3 512.8M894.9 506.5 900.7 512.6M906.4 506.8 900.7 512.6M906.4 506.8 912.9 513.9M916.8 508 912.9 513.9M916.8 508 922.6 514.3M929.5 508.2 922.6 514.3M929.5 508.2 933.1 514.5M940.4 508.5 933.1 514.5M940.4 508.5 945.2 514.3M951 508.7 945.2 514.3M951 508.7 955.8 514.8M961.9 509.7 955.8 514.8M961.9 509.7 967.4 515.4M973 510.1 967.4 515.4M973 510.1 977.8 516.1M983.7 510 977.8 516.1M983.7 510 988.7 515.9M995.2 511.1 988.7 515.9M995.2 511.1 1000 517.2M1004.9 510.6 1000 517.2M1004.9 510.6 1010.4 517M1015.4 511.2 1010.4 517M1015.4 511.2 1022.9 517.3M1026.8 511.5 1022.9 517.3M1026.8 511.5 1034 517.9M1037.8 512.1 1034 517.9M1037.8 512.1 1043.4 518.8M1048.8 513.3 1043.4 518.8M1048.8 513.3 1055.9 519M1059.6 512.6 1055.9 519M1059.6 512.6 1065.5 519M1072.4 513.5 1065.5 519M1072.4 513.5 1075.9 520.1M1083 513.9 1075.9 520.1M1083 513.9 1088.5 520.1M1092.4 514 1088.5 520.1M1092.4 514 1098.9 521.1M1105.4 514.4 1098.9 521.1M1105.4 514.4 1110.4 521.4M1115.4 515.1 1110.4 521.4M1115.4 515.1 1121.9 521.3M1126.8 515.7 1121.9 521.3M769.7 507.2 775.5 513.9M780.1 508.6 775.5 513.9M780.1 508.6 785.1 514.4M791.1 509 785.1 514.4M791.1 509 796.1 514.6M801 509.3 796.1 514.6M801 509.3 808.2 515.5M812.8 509.9 808.2 515.5M812.8 509.9 818.7 515.9M824.4 509.5 818.7 515.9M824.4 509.5 830.3 515.8M835.6 509.8 830.3 515.8M835.6 509.8 839.6 516.9M846.1 510.9 839.6 516.9M846.1 510.9 850.5 516.8M856.3 510.5 850.5 516.8M856.3 510.5 861.6 517.3M868.7 511.1 861.6 517.3M868.7 511.1 874.1 517.2M879.6 511.9 874.1 517.2M879.6 511.9 884.5 518.1M889.3 512.8 884.5 518.1M889.3 512.8 895.9 519.1M900.7 512.6 895.9 519.1M900.7 512.6 906.9 518.5M912.9 513.9 906.9 518.5M912.9 513.9 917.2 519.5M922.6 514.3 917.2 519.5M922.6 514.3 927.8 520.4M933.1 514.5 927.8 520.4M933.1 514.5 939.2 520.2M945.2 514.3 939.2 520.2M945.2 514.3 949.9 520.9M955.8 514.8 949.9 520.9M955.8 514.8 962.2 520.8M967.4 515.4 962.2 520.8M967.4 515.4 972.5 521.5M977.8 516.1 972.5 521.5M977.8 516.1 982.5 522M988.7 515.9 982.5 522M988.7 515.9 994.8 522.7M1000 517.2 994.8 522.7M1000 517.2 1006.6 523.3M1010.4 517 1006.6 523.3M1010.4 517 1017.4 523.7M1022.9 517.3 1017.4 523.7M1022.9 517.3 1027.9 524.4M1034 517.9 1027.9 524.4M1034 517.9 1039.3 524.6M1043.4 518.8 1039.3 524.6M1043.4 518.8 1049.1 524.5M1055.9 519 1049.1 524.5M1055.9 519 1061.3 524.7M1065.5 519 1061.3 524.7M1065.5 519 1071.3 526.1M1075.9 520.1 1071.3 526.1M1075.9 520.1 1082 526.1M1088.5 520.1 1082 526.1M1088.5 520.1 1093.2 526.7M1098.9 521.1 1093.2 526.7M1098.9 521.1 1105.2 526.5M1110.4 521.4 1105.2 526.5M1110.4 521.4 1115.3 527.8M1121.9 521.3 1115.3 527.8M1121.9 521.3 1126.3 528.4M775.5 513.9 768.5 519.6M775.5 513.9 779.3 520.4M785.1 514.4 779.3 520.4M785.1 514.4 791 520.8M796.1 514.6 791 520.8M796.1 514.6 802.4 520.6M808.2 515.5 802.4 520.6M808.2 515.5 813.8 520.8M818.7 515.9 813.8 520.8M818.7 515.9 824.9 522.1M830.3 515.8 824.9 522.1M830.3 515.8 834.4 522.3M839.6 516.9 834.4 522.3M839.6 516.9 845.7 522.6M850.5 516.8 845.7 522.6M850.5 516.8 858 523M861.6 517.3 858 523M861.6 517.3 868.2 523M874.1 517.2 868.2 523M874.1 517.2 878 523.9M884.5 518.1 878 523.9M884.5 518.1 889.8 524.9M895.9 519.1 889.8 524.9M895.9 519.1 901.2 525.3M906.9 518.5 901.2 525.3M906.9 518.5 912.2 525.8M917.2 519.5 912.2 525.8M917.2 519.5 922.6 525.2M927.8 520.4 922.6 525.2M927.8 520.4 934.6 526.3M939.2 520.2 934.6 526.3M939.2 520.2 944.3 526.3M949.9 520.9 944.3 526.3M949.9 520.9 955.9 527.5M962.2 520.8 955.9 527.5M962.2 520.8 967.4 527.4M972.5 521.5 967.4 527.4M972.5 521.5 978.2 527.7M982.5 522 978.2 527.7M982.5 522 988.8 528M994.8 522.7 988.8 528M994.8 522.7 1000.4 528.2M1006.6 523.3 1000.4 528.2M1006.6 523.3 1011.1 528.7M1017.4 523.7 1011.1 528.7M1017.4 523.7 1021.2 530M1027.9 524.4 1021.2 530M1027.9 524.4 1033.8 530.1M1039.3 524.6 1033.8 530.1M1039.3 524.6 1045 530.8M1049.1 524.5 1045 530.8M1049.1 524.5 1055.1 531.1M1061.3 524.7 1055.1 531.1M1061.3 524.7 1064.9 531M1071.3 526.1 1064.9 531M1071.3 526.1 1077.5 531.7M1082 526.1 1077.5 531.7M1082 526.1 1089 532M1093.2 526.7 1089 532M1093.2 526.7 1098.5 532.4M1105.2 526.5 1098.5 532.4M1105.2 526.5 1110.9 533.3M1115.3 527.8 1110.9 533.3M1115.3 527.8 1120.5 533.1M1126.3 528.4 1120.5 533.1M768.5 519.6 774.7 525.2M779.3 520.4 774.7 525.2M779.3 520.4 786.3 525.8M791 520.8 786.3 525.8M791 520.8 797.1 527.1M802.4 520.6 797.1 527.1M802.4 520.6 807 527.2M813.8 520.8 807 527.2M813.8 520.8 818.9 527.5M824.9 522.1 818.9 527.5M824.9 522.1 829.3 528.4M834.4 522.3 829.3 528.4M834.4 522.3 840 528.5M845.7 522.6 840 528.5M845.7 522.6 850.4 528.9M858 523 850.4 528.9M858 523 863.5 529.2M868.2 523 863.5 529.2M868.2 523 874 529.5M878 523.9 874 529.5M878 523.9 884.2 530.1M889.8 524.9 884.2 530.1M889.8 524.9 896.3 530.4M901.2 525.3 896.3 530.4M901.2 525.3 905.5 531.1M912.2 525.8 905.5 531.1M912.2 525.8 917.7 531.6M922.6 525.2 917.7 531.6M922.6 525.2 928.4 531.7M934.6 526.3 928.4 531.7M934.6 526.3 940 532.1M944.3 526.3 940 532.1M944.3 526.3 950 532.4M955.9 527.5 950 532.4M955.9 527.5 960.5 532.9M967.4 527.4 960.5 532.9M967.4 527.4 972.9 533.6M978.2 527.7 972.9 533.6M978.2 527.7 983.4 533.8M988.8 528 983.4 533.8M988.8 528 994 534.8M1000.4 528.2 994 534.8M1000.4 528.2 1006.5 534.6M1011.1 528.7 1006.5 534.6M1011.1 528.7 1016.9 536M1021.2 530 1016.9 536M1021.2 530 1027.6 536.4M1033.8 530.1 1027.6 536.4M1033.8 530.1 1037.8 536.7M1045 530.8 1037.8 536.7M1045 530.8 1048.6 536.4M1055.1 531.1 1048.6 536.4M1055.1 531.1 1059.6 536.6M1064.9 531 1059.6 536.6M1064.9 531 1072.1 537.5M1077.5 531.7 1072.1 537.5M1077.5 531.7 1082.2 538.4M1089 532 1082.2 538.4M1089 532 1093 539M1098.5 532.4 1093 539M1098.5 532.4 1103.8 539.6M1110.9 533.3 1103.8 539.6M1110.9 533.3 1116.3 539.4M1120.5 533.1 1116.3 539.4M1120.5 533.1 1127.5 540.3M774.7 525.2 770 531.3M774.7 525.2 779.8 531.8M786.3 525.8 779.8 531.8M786.3 525.8 790.9 532.5M797.1 527.1 790.9 532.5M797.1 527.1 802.8 532.7M807 527.2 802.8 532.7M807 527.2 813.1 533.1M818.9 527.5 813.1 533.1M818.9 527.5 823.9 533.2M829.3 528.4 823.9 533.2M829.3 528.4 835.1 534.3M840 528.5 835.1 534.3M840 528.5 846.2 535.1M850.4 528.9 846.2 535.1M850.4 528.9 857 534.8M863.5 529.2 857 534.8M863.5 529.2 869 535.4M874 529.5 869 535.4M874 529.5 878.3 536M884.2 530.1 878.3 536M884.2 530.1 890.4 536.1M896.3 530.4 890.4 536.1M896.3 530.4 900.4 536.3M905.5 531.1 900.4 536.3M905.5 531.1 912.1 537.1M917.7 531.6 912.1 537.1M917.7 531.6 923.7 537.3M928.4 531.7 923.7 537.3M928.4 531.7 934.2 537.7M940 532.1 934.2 537.7M940 532.1 944.3 538.1M950 532.4 944.3 538.1M950 532.4 956.3 539.3M960.5 532.9 956.3 539.3M960.5 532.9 966.9 539.9M972.9 533.6 966.9 539.9M972.9 533.6 978.7 540.4M983.4 533.8 978.7 540.4M983.4 533.8 989.3 540.3M994 534.8 989.3 540.3M994 534.8 999.8 541.2M1006.5 534.6 999.8 541.2M1006.5 534.6 1010.5 540.9M1016.9 536 1010.5 540.9M1016.9 536 1023.1 542.2M1027.6 536.4 1023.1 542.2M1027.6 536.4 1033.3 542.5M1037.8 536.7 1033.3 542.5M1037.8 536.7 1043 542.9M1048.6 536.4 1043 542.9M1048.6 536.4 1055.2 542.8M1059.6 536.6 1055.2 542.8M1059.6 536.6 1065.5 543.7M1072.1 537.5 1065.5 543.7M1072.1 537.5 1077.9 544.2M1082.2 538.4 1077.9 544.2M1082.2 538.4 1087 544.4M1093 539 1087 544.4M1093 539 1098.6 544.4M1103.8 539.6 1098.6 544.4M1103.8 539.6 1109 545.3M1116.3 539.4 1109 545.3M1116.3 539.4 1120.5 545.4M1127.5 540.3 1120.5 545.4M770 531.3 774.5 538.3M779.8 531.8 774.5 538.3M779.8 531.8 785 538.3M790.9 532.5 785 538.3M790.9 532.5 796.8 539M802.8 532.7 796.8 539M802.8 532.7 808.3 538.8M813.1 533.1 808.3 538.8M813.1 533.1 819.3 539M823.9 533.2 819.3 539M823.9 533.2 829.4 540.3M835.1 534.3 829.4 540.3M835.1 534.3 841.4 540.2M846.2 535.1 841.4 540.2M846.2 535.1 851.9 541.1M857 534.8 851.9 541.1M857 534.8 861.5 541.6M869 535.4 861.5 541.6M869 535.4 874.2 541.3M878.3 536 874.2 541.3M878.3 536 884.1 542.1M890.4 536.1 884.1 542.1M890.4 536.1 896.5 543.2M900.4 536.3 896.5 543.2M900.4 536.3 905.8 542.9M912.1 537.1 905.8 542.9M912.1 537.1 916.7 543M923.7 537.3 916.7 543M923.7 537.3 927.9 544.5M934.2 537.7 927.9 544.5M934.2 537.7 940.4 544M944.3 538.1 940.4 544M944.3 538.1 950.8 545M956.3 539.3 950.8 545M956.3 539.3 961.4 545.7M966.9 539.9 961.4 545.7M966.9 539.9 971.6 545.4M978.7 540.4 971.6 545.4M978.7 540.4 982.7 546.6M989.3 540.3 982.7 546.6M989.3 540.3 995.2 546.5M999.8 541.2 995.2 546.5M999.8 541.2 1004.6 547.4M1010.5 540.9 1004.6 547.4M1010.5 540.9 1017.1 547.9M1023.1 542.2 1017.1 547.9M1023.1 542.2 1028.5 548.1M1033.3 542.5 1028.5 548.1M1033.3 542.5 1038.5 548.7M1043 542.9 1038.5 548.7M1043 542.9 1048.7 549.2M1055.2 542.8 1048.7 549.2M1055.2 542.8 1060.1 549.1M1065.5 543.7 1060.1 549.1M1065.5 543.7 1072.3 549.1M1077.9 544.2 1072.3 549.1M1077.9 544.2 1082.1 550.5M1087 544.4 1082.1 550.5M1087 544.4 1093.3 551M1098.6 544.4 1093.3 551M1098.6 544.4 1105 550.7M1109 545.3 1105 550.7M1109 545.3 1115.5 551.2M1120.5 545.4 1115.5 551.2M1120.5 545.4 1126.9 552.1M774.5 538.3 769 543.1M774.5 538.3 780.8 543.6M785 538.3 780.8 543.6M785 538.3 791.3 544.8M796.8 539 791.3 544.8M796.8 539 801.9 544.3M808.3 538.8 801.9 544.3M808.3 538.8 813.1 544.8M819.3 539 813.1 544.8M819.3 539 823.3 545.4M829.4 540.3 823.3 545.4M829.4 540.3 834.3 546.3M841.4 540.2 834.3 546.3M841.4 540.2 846.6 546.6M851.9 541.1 846.6 546.6M851.9 541.1 858 546.6M861.5 541.6 858 546.6M861.5 541.6 867.6 547.3M874.2 541.3 867.6 547.3M874.2 541.3 879.1 548.2M884.1 542.1 879.1 548.2M884.1 542.1 889.5 548.3M896.5 543.2 889.5 548.3M896.5 543.2 900.7 548.6M905.8 542.9 900.7 548.6M905.8 542.9 911 549.6M916.7 543 911 549.6M916.7 543 922 549.6M927.9 544.5 922 549.6M927.9 544.5 933.4 550.1M940.4 544 933.4 550.1M940.4 544 945.4 551M950.8 545 945.4 551M950.8 545 956.8 551.2M961.4 545.7 956.8 551.2M961.4 545.7 966.5 550.9M971.6 545.4 966.5 550.9M971.6 545.4 977.2 552.4M982.7 546.6 977.2 552.4M982.7 546.6 988.7 552.2M995.2 546.5 988.7 552.2M995.2 546.5 999.7 552.6M1004.6 547.4 999.7 552.6M1004.6 547.4 1010.3 553M1017.1 547.9 1010.3 553M1017.1 547.9 1021.9 553.6M1028.5 548.1 1021.9 553.6M1028.5 548.1 1032 553.7M1038.5 548.7 1032 553.7M1038.5 548.7 1043 554.5M1048.7 549.2 1043 554.5M1048.7 549.2 1055.3 555.5M1060.1 549.1 1055.3 555.5M1060.1 549.1 1065.8 555.6M1072.3 549.1 1065.8 555.6M1072.3 549.1 1077.6 555.9M1082.1 550.5 1077.6 555.9M1082.1 550.5 1088.1 555.9M1093.3 551 1088.1 555.9M1093.3 551 1099.4 557M1105 550.7 1099.4 557M1105 550.7 1109.6 557.4M1115.5 551.2 1109.6 557.4M1115.5 551.2 1120.4 557.2M1126.9 552.1 1120.4 557.2M769 543.1 774.1 549.8M780.8 543.6 774.1 549.8M780.8 543.6 785.3 549.9M791.3 544.8 785.3 549.9M791.3 544.8 797.5 550.9M801.9 544.3 797.5 550.9M801.9 544.3 807 550.6M813.1 544.8 807 550.6M813.1 544.8 819 552M823.3 545.4 819 552M823.3 545.4 830 552.2M834.3 546.3 830 552.2M834.3 546.3 841.5 552.7M846.6 546.6 841.5 552.7M846.6 546.6 850.7 552.8M858 546.6 850.7 552.8M858 546.6 862.3 553.4M867.6 547.3 862.3 553.4M867.6 547.3 872.7 553.9M879.1 548.2 872.7 553.9M879.1 548.2 885 553.9M889.5 548.3 885 553.9M889.5 548.3 895.8 554.4M900.7 548.6 895.8 554.4M900.7 548.6 906.9 555M911 549.6 906.9 555M911 549.6 918.5 555.5M922 549.6 918.5 555.5M922 549.6 927.5 555.4M933.4 550.1 927.5 555.4M933.4 550.1 939.9 555.9M945.4 551 939.9 555.9M945.4 551 951.1 556.8M956.8 551.2 951.1 556.8M956.8 551.2 961.2 557.2M966.5 550.9 961.2 557.2M966.5 550.9 973.3 557.7M977.2 552.4 973.3 557.7M977.2 552.4 983.3 558.1M988.7 552.2 983.3 558.1M988.7 552.2 994.7 558.5M999.7 552.6 994.7 558.5M999.7 552.6 1006 558.9M1010.3 553 1006 558.9M1010.3 553 1016 559M1021.9 553.6 1016 559M1021.9 553.6 1027.4 559.5M1032 553.7 1027.4 559.5M1032 553.7 1037.8 559.9M1043 554.5 1037.8 559.9M1043 554.5 1049.2 561.3M1055.3 555.5 1049.2 561.3M1055.3 555.5 1060.5 561M1065.8 555.6 1060.5 561M1065.8 555.6 1071.4 561.6M1077.6 555.9 1071.4 561.6M1077.6 555.9 1081.5 562.5M1088.1 555.9 1081.5 562.5M1088.1 555.9 1093.5 563.1M1099.4 557 1093.5 563.1M1099.4 557 1104.8 562.7M1109.6 557.4 1104.8 562.7M1109.6 557.4 1116.6 563M1120.4 557.2 1116.6 563M1120.4 557.2 1125.8 563.4M774.1 549.8 768.2 555.1M774.1 549.8 780.9 555.6M785.3 549.9 780.9 555.6M785.3 549.9 791 556M797.5 550.9 791 556M797.5 550.9 801.6 556.4M807 550.6 801.6 556.4M807 550.6 812.7 557.1M819 552 812.7 557.1M819 552 824.5 558.3M830 552.2 824.5 558.3M830 552.2 834.3 558.2M841.5 552.7 834.3 558.2M841.5 552.7 846.3 559.2M850.7 552.8 846.3 559.2M850.7 552.8 856 559.3M862.3 553.4 856 559.3M862.3 553.4 867.8 559.5M872.7 553.9 867.8 559.5M872.7 553.9 879.4 560.2M885 553.9 879.4 560.2M885 553.9 889.7 560.8M895.8 554.4 889.7 560.8M895.8 554.4 901.2 560.5M906.9 555 901.2 560.5M906.9 555 911.3 560.9M918.5 555.5 911.3 560.9M918.5 555.5 923.7 562.2M927.5 555.4 923.7 562.2M927.5 555.4 933.3 562.3M939.9 555.9 933.3 562.3M939.9 555.9 944.1 562.1M951.1 556.8 944.1 562.1M951.1 556.8 956.4 563.1M961.2 557.2 956.4 563.1M961.2 557.2 966.8 563.4M973.3 557.7 966.8 563.4M973.3 557.7 977.9 563.8M983.3 558.1 977.9 563.8M983.3 558.1 988.5 564.9M994.7 558.5 988.5 564.9M994.7 558.5 999.1 564.9M1006 558.9 999.1 564.9M1006 558.9 1010.3 565.1M1016 559 1010.3 565.1M1016 559 1021 565.3M1027.4 559.5 1021 565.3M1027.4 559.5 1033.2 565.6M1037.8 559.9 1033.2 565.6M1037.8 559.9 1043.8 566.7M1049.2 561.3 1043.8 566.7M1049.2 561.3 1055.2 566.5M1060.5 561 1055.2 566.5M1060.5 561 1065.8 567.2M1071.4 561.6 1065.8 567.2M1071.4 561.6 1077.7 568.3M1081.5 562.5 1077.7 568.3M1081.5 562.5 1088.2 568.7M1093.5 563.1 1088.2 568.7M1093.5 563.1 1098.8 569.3M1104.8 562.7 1098.8 569.3M1104.8 562.7 1110.5 569.7M1116.6 563 1110.5 569.7M1116.6 563 1120.3 569.9M1125.8 563.4 1120.3 569.9M768.2 555.1 774.9 562M780.9 555.6 774.9 562M780.9 555.6 786.4 561.9M791 556 786.4 561.9M791 556 795.7 562.7M801.6 556.4 795.7 562.7M801.6 556.4 806.9 563.7M812.7 557.1 806.9 563.7M812.7 557.1 819.4 563.5M824.5 558.3 819.4 563.5M824.5 558.3 830.2 564.1M834.3 558.2 830.2 564.1M834.3 558.2 841.4 564.5M846.3 559.2 841.4 564.5M846.3 559.2 850.8 565.5M856 559.3 850.8 565.5M856 559.3 862 564.8M867.8 559.5 862 564.8M867.8 559.5 874.1 565.9M879.4 560.2 874.1 565.9M879.4 560.2 885.3 565.8M889.7 560.8 885.3 565.8M889.7 560.8 896.4 567M901.2 560.5 896.4 567M901.2 560.5 906.8 566.5M911.3 560.9 906.8 566.5M911.3 560.9 918.1 567.3M923.7 562.2 918.1 567.3M923.7 562.2 927.7 567.7M933.3 562.3 927.7 567.7M933.3 562.3 940.5 568.2M944.1 562.1 940.5 568.2M944.1 562.1 950.4 569.3M956.4 563.1 950.4 569.3M956.4 563.1 962 569.1M966.8 563.4 962 569.1M966.8 563.4 972.1 569.8M977.9 563.8 972.1 569.8M977.9 563.8 983.6 570.4M988.5 564.9 983.6 570.4M988.5 564.9 994.8 570.2M999.1 564.9 994.8 570.2M999.1 564.9 1006.3 571.4M1010.3 565.1 1006.3 571.4M1010.3 565.1 1016.5 571M1021 565.3 1016.5 571M1021 565.3 1027.4 572.3M1033.2 565.6 1027.4 572.3M1033.2 565.6 1038 572.1M1043.8 566.7 1038 572.1M1043.8 566.7 1049.9 573.1M1055.2 566.5 1049.9 573.1M1055.2 566.5 1061.2 573.1M1065.8 567.2 1061.2 573.1M1065.8 567.2 1072 573.3M1077.7 568.3 1072 573.3M1077.7 568.3 1081.5 574.3M1088.2 568.7 1081.5 574.3M1088.2 568.7 1092.9 575M1098.8 569.3 1092.9 575M1098.8 569.3 1104.1 574.8M1110.5 569.7 1104.1 574.8M1110.5 569.7 1116.3 574.9M1120.3 569.9 1116.3 574.9M1120.3 569.9 1127.5 575.7M774.9 562 768 567.4M774.9 562 779.2 567.7M786.4 561.9 779.2 567.7M786.4 561.9 791 568.5M795.7 562.7 791 568.5M795.7 562.7 801.3 569.5M806.9 563.7 801.3 569.5M806.9 563.7 812.2 568.8M819.4 563.5 812.2 568.8M819.4 563.5 823.5 569.2M830.2 564.1 823.5 569.2M830.2 564.1 835.8 569.8M841.4 564.5 835.8 569.8M841.4 564.5 844.9 570.8M850.8 565.5 844.9 570.8M850.8 565.5 856.6 570.6M862 564.8 856.6 570.6M862 564.8 867.9 571.1M874.1 565.9 867.9 571.1M874.1 565.9 878.1 572M885.3 565.8 878.1 572M885.3 565.8 889.4 572.2M896.4 567 889.4 572.2M896.4 567 901 573.4M906.8 566.5 901 573.4M906.8 566.5 912.2 573.4M918.1 567.3 912.2 573.4M918.1 567.3 922.6 573.7M927.7 567.7 922.6 573.7M927.7 567.7 933.5 574.6M940.5 568.2 933.5 574.6M940.5 568.2 945.9 575M950.4 569.3 945.9 575M950.4 569.3 955.8 575.3M962 569.1 955.8 575.3M962 569.1 966.5 575.8M972.1 569.8 966.5 575.8M972.1 569.8 979 575.5M983.6 570.4 979 575.5M983.6 570.4 988.1 577M994.8 570.2 988.1 577M994.8 570.2 1000.2 577.1M1006.3 571.4 1000.2 577.1M1006.3 571.4 1011.8 577.6M1016.5 571 1011.8 577.6M1016.5 571 1021.1 577.4M1027.4 572.3 1021.1 577.4M1027.4 572.3 1032.7 578.6M1038 572.1 1032.7 578.6M1038 572.1 1044.5 578.2M1049.9 573.1 1044.5 578.2M1049.9 573.1 1054.2 579.4M1061.2 573.1 1054.2 579.4M1061.2 573.1 1066.8 578.9M1072 573.3 1066.8 578.9M1072 573.3 1076.6 579.4M1081.5 574.3 1076.6 579.4M1081.5 574.3 1087.8 579.7M1092.9 575 1087.8 579.7M1092.9 575 1098.8 580.4M1104.1 574.8 1098.8 580.4M1104.1 574.8 1109 581.8M1116.3 574.9 1109 581.8M1116.3 574.9 1120.2 582.2M1127.5 575.7 1120.2 582.2M768 567.4 775 573.6M779.2 567.7 775 573.6M779.2 567.7 785.2 574.1M791 568.5 785.2 574.1M791 568.5 796 574.7M801.3 569.5 796 574.7M801.3 569.5 806.7 575.2M812.2 568.8 806.7 575.2M812.2 568.8 818.5 575.2M823.5 569.2 818.5 575.2M823.5 569.2 830.5 575.7M835.8 569.8 830.5 575.7M835.8 569.8 840.8 576.7M844.9 570.8 840.8 576.7M844.9 570.8 852 577M856.6 570.6 852 577M856.6 570.6 862.4 577.2M867.9 571.1 862.4 577.2M867.9 571.1 874 577.2M878.1 572 874 577.2M878.1 572 884.6 578.6M889.4 572.2 884.6 578.6M889.4 572.2 895.4 578.6M901 573.4 895.4 578.6M901 573.4 906.9 579.4M912.2 573.4 906.9 579.4M912.2 573.4 917.1 579.6M922.6 573.7 917.1 579.6M922.6 573.7 929.2 580.1M933.5 574.6 929.2 580.1M933.5 574.6 938.9 581M945.9 575 938.9 581M945.9 575 950.2 581M955.8 575.3 950.2 581M955.8 575.3 960.5 581.5M966.5 575.8 960.5 581.5M966.5 575.8 972.6 582.2M979 575.5 972.6 582.2M979 575.5 982.9 581.6M988.1 577 982.9 581.6M988.1 577 994.1 582.5M1000.2 577.1 994.1 582.5M1000.2 577.1 1005.9 582.8M1011.8 577.6 1005.9 582.8M1011.8 577.6 1017.1 583.9M1021.1 577.4 1017.1 583.9M1021.1 577.4 1026.5 584.5M1032.7 578.6 1026.5 584.5M1032.7 578.6 1037.5 584.1M1044.5 578.2 1037.5 584.1M1044.5 578.2 1048.6 585.1M1054.2 579.4 1048.6 585.1M1054.2 579.4 1061.5 584.9M1066.8 578.9 1061.5 584.9M1066.8 578.9 1071.7 586.2M1076.6 579.4 1071.7 586.2M1076.6 579.4 1083.1 585.8M1087.8 579.7 1083.1 585.8M1087.8 579.7 1093.4 587M1098.8 580.4 1093.4 587M1098.8 580.4 1105.3 587M1109 581.8 1105.3 587M1109 581.8 1115.7 586.9M1120.2 582.2 1115.7 586.9M1120.2 582.2 1126.3 588.2M775 573.6 768 579.2M775 573.6 780.1 579.4M785.2 574.1 780.1 579.4M785.2 574.1 790.3 580.7M796 574.7 790.3 580.7M796 574.7 801.3 580.9M806.7 575.2 801.3 580.9M806.7 575.2 814 581.4M818.5 575.2 814 581.4M818.5 575.2 824.4 581.2M830.5 575.7 824.4 581.2M830.5 575.7 835.1 582.2M840.8 576.7 835.1 582.2M840.8 576.7 846 582.6M852 577 846 582.6M852 577 856 583.2M862.4 577.2 856 583.2M862.4 577.2 867.7 583.8M874 577.2 867.7 583.8M874 577.2 878.5 584.5M884.6 578.6 878.5 584.5M884.6 578.6 889.9 584.8M895.4 578.6 889.9 584.8M895.4 578.6 901 584.6M906.9 579.4 901 584.6M906.9 579.4 911.9 585M917.1 579.6 911.9 585M917.1 579.6 923.1 585.6M929.2 580.1 923.1 585.6M929.2 580.1 933.5 586.8M938.9 581 933.5 586.8M938.9 581 946 586.6M950.2 581 946 586.6M950.2 581 956.1 587.4M960.5 581.5 956.1 587.4M960.5 581.5 967.3 587.4M972.6 582.2 967.3 587.4M972.6 582.2 978 588.3M982.9 581.6 978 588.3M982.9 581.6 988 588.3M994.1 582.5 988 588.3M994.1 582.5 999.1 588.9M1005.9 582.8 999.1 588.9M1005.9 582.8 1010 589.2M1017.1 583.9 1010 589.2M1017.1 583.9 1021.2 589.5M1026.5 584.5 1021.2 589.5M1026.5 584.5 1034 589.8M1037.5 584.1 1034 589.8M1037.5 584.1 1043.7 590.9M1048.6 585.1 1043.7 590.9M1048.6 585.1 1054.4 590.7M1061.5 584.9 1054.4 590.7M1061.5 584.9 1065.8 591.6M1071.7 586.2 1065.8 591.6M1071.7 586.2 1076.4 591.6M1083.1 585.8 1076.4 591.6M1083.1 585.8 1087 592M1093.4 587 1087 592M1093.4 587 1098.8 592.9M1105.3 587 1098.8 592.9M1105.3 587 1109.5 593.2M1115.7 586.9 1109.5 593.2M1115.7 586.9 1121.6 593.4M1126.3 588.2 1121.6 593.4M768 579.2 775 586.1M780.1 579.4 775 586.1M780.1 579.4 786.4 586.5M790.3 580.7 786.4 586.5M790.3 580.7 796.8 586.8M801.3 580.9 796.8 586.8M801.3 580.9 807.2 587.6M814 581.4 807.2 587.6M814 581.4 817.8 587.4M824.4 581.2 817.8 587.4M824.4 581.2 828.7 588M835.1 582.2 828.7 588M835.1 582.2 841.4 588.6M846 582.6 841.4 588.6M846 582.6 850.4 589.3M856 583.2 850.4 589.3M856 583.2 861.5 588.9M867.7 583.8 861.5 588.9M867.7 583.8 873.5 589.2M878.5 584.5 873.5 589.2M878.5 584.5 885.1 590.4M889.9 584.8 885.1 590.4M889.9 584.8 896.5 590.8M901 584.6 896.5 590.8M901 584.6 906.3 590.7M911.9 585 906.3 590.7M911.9 585 917.1 591.7M923.1 585.6 917.1 591.7M923.1 585.6 929.2 591.6M933.5 586.8 929.2 591.6M933.5 586.8 939.6 592.6M946 586.6 939.6 592.6M946 586.6 949.9 593.1M956.1 587.4 949.9 593.1M956.1 587.4 961 593.1M967.3 587.4 961 593.1M967.3 587.4 971.9 594.2M978 588.3 971.9 594.2M978 588.3 982.5 593.9M988 588.3 982.5 593.9M988 588.3 994.7 594.6M999.1 588.9 994.7 594.6M999.1 588.9 1004.9 595M1010 589.2 1004.9 595M1010 589.2 1016.4 595.5M1021.2 589.5 1016.4 595.5M1021.2 589.5 1027.4 595.5M1034 589.8 1027.4 595.5M1034 589.8 1038.9 596.1M1043.7 590.9 1038.9 596.1M1043.7 590.9 1050.2 596.6M1054.4 590.7 1050.2 596.6M1054.4 590.7 1061.3 596.9M1065.8 591.6 1061.3 596.9M1065.8 591.6 1071.8 598.2M1076.4 591.6 1071.8 598.2M1076.4 591.6 1082.1 598.5M1087 592 1082.1 598.5M1087 592 1093.6 597.9M1098.8 592.9 1093.6 597.9M1098.8 592.9 1104.7 598.8M1109.5 593.2 1104.7 598.8M1109.5 593.2 1114.6 599.8M1121.6 593.4 1114.6 599.8M1121.6 593.4 1126.9 600.4" fill="none" stroke="#000" stroke-width="1" shape-rendering="crispEdges"/></g></g><polygon points="321,553 610,302 1080,435 1080,481 1113,732 824,983 321,838" fill="none" stroke="#000" stroke-width="1"/><path d="M321 553 Q760 520 1080 421 M824 698 L824 983 M824 698 L1080 479" stroke="#000" stroke-width="0.9" fill="none"/><g stroke="#000" fill="none" stroke-width="1" shape-rendering="crispEdges"><path d="M320.5 419.5 L320.5 907.3" stroke-dasharray="7 5"/><path d="M439 444 L439 941.5" stroke-dasharray="1 2"/><path d="M558 468 L558 975" stroke-dasharray="7 5"/><path d="M677 492 L677 1010" stroke-dasharray="1 2"/><path d="M795 516 L795 1045" stroke-dasharray="7 5"/><path d="M913 540 L913 1078" stroke-dasharray="1 2"/><path d="M219.5 453.7 L924 656.6" stroke-dasharray="1 2"/><path d="M228.3 573.2 L924 773.6" stroke-dasharray="7 5"/><path d="M219.5 690 L924 892.9" stroke-dasharray="1 2"/><path d="M228.3 811 L924 1011.4" stroke-dasharray="7 5"/></g><path d="M320.5 839 L320.5 795" stroke="#007000" stroke-width="1.5"/><path d="M314.5 801 L320.5 778 L326.5 801 Z" fill="#0a7d0a"/><path d="M320.5 839 L365 852" stroke="#f00" stroke-width="1.5"/><path d="M362 845 L381 856 L360 858 Z" fill="#f00"/><path d="M320.5 839 L298 859" stroke="#0000ff" stroke-width="1.5"/><path d="M287 868.5 L297 852 L304 861 Z" fill="#0000ff"/><rect x="449" y="797.8" width="26.5" height="20" fill="#ffffe1" stroke="#777" stroke-width="1"/><text x="451" y="812.5" font-size="12.5" fill="#111">0,0</text>
<circle cx="23.6" cy="240" r="9.3" fill="#62c552" stroke="#49b13f" stroke-width="1"/>
<path d="M19.0 240.2 L22.400000000000002 243.6 L28.400000000000002 237.2" fill="none" stroke="#fff" stroke-width="2.4" stroke-linecap="round" stroke-linejoin="round"/>
<text x="39.9" y="245.6" font-size="14" fill="#111" font-weight="bold" textLength="31.7" lengthAdjust="spacingAndGlyphs">GZT:</text>
<text x="15.3" y="269.6" font-size="14" fill="#111" textLength="37.4" lengthAdjust="spacingAndGlyphs">Beton</text>
<text x="111.2" y="269.6" font-size="14" fill="#111" textLength="15.5" lengthAdjust="spacingAndGlyphs">C1</text>
<circle cx="150" cy="263.6" r="9.3" fill="#62c552" stroke="#49b13f" stroke-width="1"/>
<path d="M145.4 263.8 L148.8 267.20000000000005 L154.8 260.8" fill="none" stroke="#fff" stroke-width="2.4" stroke-linecap="round" stroke-linejoin="round"/>
<text x="172.5" y="269.6" font-size="14" fill="#111" textLength="38.6" lengthAdjust="spacingAndGlyphs">74,5%</text>
<text x="15.3" y="295.7" font-size="14" fill="#111" textLength="73.1" lengthAdjust="spacingAndGlyphs">Bewehrung</text>
<text x="111.2" y="295.7" font-size="14" fill="#111" textLength="15.5" lengthAdjust="spacingAndGlyphs">C1</text>
<circle cx="150" cy="289.7" r="9.3" fill="#62c552" stroke="#49b13f" stroke-width="1"/>
<path d="M145.4 289.9 L148.8 293.3 L154.8 286.9" fill="none" stroke="#fff" stroke-width="2.4" stroke-linecap="round" stroke-linejoin="round"/>
<text x="172.5" y="295.7" font-size="14" fill="#111" textLength="38.6" lengthAdjust="spacingAndGlyphs">53,0%</text>
<text x="15.3" y="321.4" font-size="14" fill="#111" textLength="82.3" lengthAdjust="spacingAndGlyphs">Verankerung</text>
<text x="111.2" y="321.4" font-size="14" fill="#111" textLength="15.5" lengthAdjust="spacingAndGlyphs">C1</text>
<circle cx="150" cy="316" r="9.3" fill="#62c552" stroke="#49b13f" stroke-width="1"/>
<path d="M145.4 316.2 L148.8 319.6 L154.8 313.2" fill="none" stroke="#fff" stroke-width="2.4" stroke-linecap="round" stroke-linejoin="round"/>
<text x="172.5" y="321.4" font-size="14" fill="#111" textLength="38.6" lengthAdjust="spacingAndGlyphs">98,4%</text>
<text x="76" y="636.5" font-size="22" fill="#111" textLength="59.6" lengthAdjust="spacingAndGlyphs">σc,eq</text>
<text x="98" y="655.5" font-size="13" fill="#222" textLength="37.5" lengthAdjust="spacingAndGlyphs">[MPa]</text>
<rect x="98" y="695.7" width="37.6" height="31.11" fill="#c8dc00" />
<rect x="98" y="726.51" width="37.6" height="31.11" fill="#fffa00" />
<rect x="98" y="757.32" width="37.6" height="31.11" fill="#ffdc00" />
<rect x="98" y="788.12" width="37.6" height="31.11" fill="#ffc300" />
<rect x="98" y="818.93" width="37.6" height="31.11" fill="#ffa500" />
<rect x="98" y="849.74" width="37.6" height="31.11" fill="#ff7d00" />
<rect x="98" y="880.55" width="37.6" height="31.11" fill="#ff4b00" />
<rect x="98" y="911.36" width="37.6" height="31.11" fill="#ff1e00" />
<rect x="98" y="942.17" width="37.6" height="31.11" fill="#f00000" />
<rect x="98" y="972.98" width="37.6" height="31.11" fill="#d20000" />
<rect x="98" y="1003.78" width="37.6" height="31.11" fill="#a50000" />
<rect x="98" y="1034.59" width="37.6" height="31.11" fill="#7d0000" />
<rect x="98" y="695.7" width="37.6" height="369.70000000000005" fill="none" stroke="#222" stroke-width="1"/>
<text x="86.5" y="700.30" font-size="13" fill="#111" text-anchor="end">0,0</text>
<text x="86.5" y="731.11" font-size="13" fill="#111" text-anchor="end">-1,0</text>
<text x="86.5" y="761.92" font-size="13" fill="#111" text-anchor="end">-2,1</text>
<text x="86.5" y="792.73" font-size="13" fill="#111" text-anchor="end">-3,1</text>
<text x="86.5" y="823.53" font-size="13" fill="#111" text-anchor="end">-4,1</text>
<text x="86.5" y="854.34" font-size="13" fill="#111" text-anchor="end">-5,2</text>
<text x="86.5" y="885.15" font-size="13" fill="#111" text-anchor="end">-6,2</text>
<text x="86.5" y="915.96" font-size="13" fill="#111" text-anchor="end">-7,2</text>
<text x="86.5" y="946.77" font-size="13" fill="#111" text-anchor="end">-8,3</text>
<text x="86.5" y="977.58" font-size="13" fill="#111" text-anchor="end">-9,3</text>
<text x="86.5" y="1008.38" font-size="13" fill="#111" text-anchor="end">-10,4</text>
<text x="86.5" y="1039.19" font-size="13" fill="#111" text-anchor="end">-11,4</text>
<text x="86.5" y="1070.00" font-size="13" fill="#111" text-anchor="end">-12,4</text>
<rect x="1098" y="206.4" width="30.6" height="30.1" fill="#d9d9d9" />
<rect x="1267" y="206" width="34" height="31" fill="#d9d9d9" />
<rect x="1149.5" y="208" width="1" height="27" fill="#a0a0a0" />
<rect x="1206.2" y="208" width="1" height="27" fill="#a0a0a0" />
<rect x="1263.5" y="208" width="1" height="27" fill="#a0a0a0" />
<rect x="1335.0" y="208" width="1" height="27" fill="#a0a0a0" />
<path d="M1108.3 211.5 L1108.3 227 L1123 227 M1104.3 215 L1119.8 215 L1119.8 231" fill="none" stroke="#111" stroke-width="1.5"/>
<path d="M1135.2 219 L1139.7 223.5 L1144.2 219" fill="none" stroke="#222" stroke-width="1.1"/>
<path d="M1191.5 219 L1196 223.5 L1200.5 219" fill="none" stroke="#222" stroke-width="1.1"/>
<path d="M1249.1 219 L1253.6 223.5 L1258.1 219" fill="none" stroke="#222" stroke-width="1.1"/>
<path d="M1168.8 215 Q1161 219.5 1160.5 226 Q1160.5 231 1166.5 230.3 M1163.5 215.2 L1168.8 214.6 L1168.3 220 M1171.2 212.2 Q1179.8 210.8 1179.2 217 Q1178.5 222.5 1172.3 228.3 M1172.2 222.8 L1172 228.4 L1177.6 228.4" fill="none" stroke="#111" stroke-width="1.4"/>
<path d="M1222 212.8 L1219.5 212.8 Q1216.5 212.8 1216.5 215.8 L1216.5 226.8 Q1216.5 229.8 1219.5 229.8 L1232.8 229.8 Q1235.8 229.8 1235.8 226.8 L1235.8 221" fill="none" stroke="#111" stroke-width="1.4"/>
<text x="1219.5" y="225.6" font-size="8.5" font-weight="bold" fill="#111">3</text>
<circle cx="1228.6" cy="216.6" r="5.3" fill="#111"/><path d="M1223.3 216.6 H1233.9 M1228.6 211.3 Q1225.5 216.6 1228.6 221.9 Q1231.7 216.6 1228.6 211.3" fill="none" stroke="#fff" stroke-width="0.8"/>
<path d="M1275 217.7 H1287.3 V230.4 H1275 Z M1275 217.7 L1281 212.2 H1293.7 L1287.3 217.7 M1293.7 212.2 V224.5 L1287.3 230.4 M1281 212.2 V224.5 H1293.7 M1281 224.5 L1275 230.4" fill="none" stroke="#111" stroke-width="1.4" stroke-linejoin="round"/>
<path d="M1308.3 219 L1314.2 211.7 L1327.9 211.7 L1327.9 225 L1321.5 231 L1308.3 231 Z" fill="#111"/>
<path d="M1308.8 219.3 H1321.3 V230.8 M1321.3 219.3 L1327.5 212.3" fill="none" stroke="#fff" stroke-width="0.9"/>
<path d="M1345.3 215.5 L1356.5 212 Q1364 212.2 1364.8 214.5 L1364.8 220.2 L1351.8 228.6 L1345.3 225 Z M1345.3 215.5 L1351.8 218 L1364.8 214.5 M1351.8 218 L1351.8 228.6 M1350 215.2 L1357 213.8" fill="none" stroke="#111" stroke-width="1.3" stroke-linejoin="round"/>
<path d="M1378.5 220 L1387.6 213.1 L1396.7 220 M1380.3 218.8 L1380.3 229.5 L1385.3 229.5 L1385.3 223.6 L1389.9 223.6 L1389.9 229.5 L1394.9 229.5 L1394.9 218.8" fill="none" stroke="#333" stroke-width="1.2" stroke-linejoin="round"/>
<path d="M1410.8 217.5 V212.2 H1416 M1410.8 212.2 L1416.5 217.5 M1425.7 212.2 H1430.9 V217.5 M1430.9 212.2 L1425.3 217.5 M1410.8 225.2 V230.4 H1416 M1410.8 230.4 L1416.5 225 M1425.7 230.4 H1430.9 V225.2 M1430.9 230.4 L1425.3 225" fill="none" stroke="#111" stroke-width="1.3"/>
<path fill-rule="evenodd" d="M1416.3 297.9 A46.7 24.8 0 1 0 1322.9 297.9 A46.7 24.8 0 1 0 1416.3 297.9 Z M1406.2 296.2 A36.6 16.5 0 1 0 1333 296.2 A36.6 16.5 0 1 0 1406.2 296.2 Z" fill="#000" fill-opacity="0.125"/>
<path d="M1336.1 257.3 L1362.1 242.4 L1399.4 250.3 L1395.6 286.7 L1377.9 309.9 L1340.6 293.7 Z" fill="#a9a9a9"/>
<path d="M1336.1 257.3 L1379.5 267.7 L1399.4 250.3 M1379.5 267.7 L1377.9 309.9 M1362.1 242.4 L1363.4 277.2 L1340.6 293.7 M1363.4 277.2 L1395.6 286.7" fill="none" stroke="#8e8e8e" stroke-width="0.9"/>
<path d="M1336.1 257.3 L1362.1 242.4 L1399.4 250.3 L1395.6 286.7 L1377.9 309.9 L1340.6 293.7 Z" fill="none" stroke="#909090" stroke-width="0.9"/>
<text x="1354.5" y="288.5" font-size="7.5" fill="#fff">+Y</text><path d="M1365.5 253 L1369 253.5 M1370.5 253.8 L1373.5 254.2" stroke="#fff" stroke-width="1"/><path d="M1389.5 276.5 Q1391.5 279 1389.5 281.5" fill="none" stroke="#fff" stroke-width="1"/>
<path d="M1333.5 322 L1340.5 314 M1340.5 314 L1340 309.5 M1340.5 314 L1349.5 313.5" fill="none" stroke="#7c7c7c" stroke-width="2"/>
<path d="M1326 278.5 L1337.5 277.5 M1333.5 274 L1333.5 280.5" fill="none" stroke="#8a8a8a" stroke-width="1"/>
<path d="M1405 302 L1418.5 306.5 M1415.5 303.5 L1418.5 306.5 L1415 307.8" fill="none" stroke="#999" stroke-width="0.8"/>
<path d="M1323 297.7 L1351.5 294 L1351.5 330" fill="none" stroke="#000" stroke-width="1"/>
<rect x="1438.5" y="204" width="7.5" height="895" fill="#c9c9c9" />
<rect x="1446" y="204.7" width="472" height="35" fill="#f26e22" />
<rect x="1452" y="210" width="70.7" height="30" fill="#f0f0f0" />
<text x="1468.6" y="231.3" font-size="15" fill="#f26e22" textLength="37.9" lengthAdjust="spacingAndGlyphs">Beton</text>
<text x="1539.1" y="231.3" font-size="15" fill="#fff" textLength="73.1" lengthAdjust="spacingAndGlyphs">Bewehrung</text>
<rect x="1918" y="83" width="2" height="1016" fill="#111" />
<text x="1458.7" y="267.9" font-size="15" fill="#333" font-weight="bold" textLength="217.3" lengthAdjust="spacingAndGlyphs">Extremwert ULS: C1 (G100,0%)</text>
<text x="1458.7" y="303.9" font-size="15" fill="#444" textLength="56.7" lengthAdjust="spacingAndGlyphs">Laststufe</text>
<rect x="1646" y="284" width="259.7" height="27.7" fill="#e6e6e6" />
<text x="1654" y="303.9" font-size="15" fill="#222" textLength="119.3" lengthAdjust="spacingAndGlyphs">G100,0%, V100,0%</text>
<path d="M1890.8 295.3 L1900 295.3 L1895.4 301.5 Z" fill="#111"/>
<rect x="1458.7" y="325" width="446" height="41" fill="#f0f0f0" />
<rect x="1458.7" y="366" width="446" height="36" fill="#e3e3e3" />
<rect x="1458.7" y="325" width="446" height="171" fill="none" stroke="#9a9a9a" stroke-width="1"/>
<rect x="1458.7" y="365.5" width="446" height="1" fill="#a8a8a8" />
<rect x="1458.7" y="401.5" width="446" height="1" fill="#a8a8a8" />
<rect x="1458.7" y="437.5" width="446" height="1" fill="#a8a8a8" />
<rect x="1458.7" y="473.5" width="446" height="1" fill="#a8a8a8" />
<rect x="1558.0" y="325" width="1" height="149" fill="#a8a8a8" />
<rect x="1620.1" y="325" width="1" height="149" fill="#a8a8a8" />
<rect x="1682.0" y="325" width="1" height="149" fill="#a8a8a8" />
<rect x="1744.9" y="325" width="1" height="149" fill="#a8a8a8" />
<rect x="1844.5" y="325" width="1" height="149" fill="#a8a8a8" />
<rect x="1459.2" y="474.5" width="445" height="21" fill="#f0f0f0" />
<rect x="1486" y="480.7" width="256.8" height="9.5" fill="#cdcdcd" />
<text x="1486" y="352" font-size="15" fill="#222" font-weight="bold" textLength="26.8" lengthAdjust="spacingAndGlyphs">uteil</text>
<text x="1564.5" y="352" font-size="15" fill="#222" font-weight="bold" textLength="37.8" lengthAdjust="spacingAndGlyphs">X [m]</text>
<text x="1625.8" y="352" font-size="15" fill="#222" font-weight="bold" textLength="9.2" lengthAdjust="spacingAndGlyphs">Y</text>
<text x="1689" y="352" font-size="15" fill="#222" font-weight="bold" textLength="37.9" lengthAdjust="spacingAndGlyphs">Z [m]</text>
<text x="1752.5" y="352" font-size="15" fill="#222" font-weight="bold" textLength="82.2" lengthAdjust="spacingAndGlyphs">σc,eq [MPa]</text>
<text x="1850.4" y="352" font-size="15" fill="#222" font-weight="bold" textLength="54.6" lengthAdjust="spacingAndGlyphs">εc [1e-4</text>
<text x="1564.5" y="390.6" font-size="15" fill="#444">0,97</text>
<text x="1625.8" y="390.6" font-size="15" fill="#444">0,97</text>
<text x="1689" y="390.6" font-size="15" fill="#444">0,44</text>
<text x="1752.5" y="390.6" font-size="15" fill="#222" font-weight="bold">-12,4</text>
<text x="1850.4" y="390.6" font-size="15" fill="#444">-9,6</text>
<rect x="1486" y="379.6" width="1.5" height="12" fill="#999" />
<text x="1564.5" y="426.6" font-size="15" fill="#444">0,60</text>
<text x="1625.8" y="426.6" font-size="15" fill="#444">0,58</text>
<text x="1689" y="426.6" font-size="15" fill="#444">0,60</text>
<text x="1752.5" y="426.6" font-size="15" fill="#444">-6,3</text>
<text x="1850.4" y="426.6" font-size="15" fill="#222" font-weight="bold">-5,5</text>
<rect x="1486" y="415.6" width="1.5" height="12" fill="#999" />
<text x="1564.5" y="462.4" font-size="15" fill="#444">0,00</text>
<text x="1625.8" y="462.4" font-size="15" fill="#444">0,00</text>
<text x="1689" y="462.4" font-size="15" fill="#444">0,00</text>
<text x="1752.5" y="462.4" font-size="15" fill="#444">-0,6</text>
<text x="1850.4" y="462.4" font-size="15" fill="#444">-0,4</text>
<rect x="1486" y="451.4" width="1.5" height="12" fill="#999" />
<rect x="1486" y="650.2" width="417" height="1.3" fill="#d4d4d4" />
<rect x="1076.5" y="330.5" width="409" height="644" fill="#fff" stroke="#a0a0a0" stroke-width="1"/>
<rect x="1077" y="331" width="408" height="37.5" fill="#f26e22" />
<text x="1087.8" y="357.8" font-size="19" fill="#fff" textLength="195.2" lengthAdjust="spacingAndGlyphs">Querschnittkenngrößen</text>
<path d="M1450 344 L1462.4 356.4 M1462.4 344 L1450 356.4" stroke="#fff" stroke-width="1.2"/>
<text x="1117.4" y="400.1" font-size="15" fill="#222" textLength="38.9" lengthAdjust="spacingAndGlyphs">Name</text>
<rect x="1179.5" y="382.5" width="292.5" height="24.5" fill="#fff" stroke="#a9a9b0" stroke-width="1"/>
<text x="1182.8" y="399" font-size="15" fill="#222" textLength="68.5" lengthAdjust="spacingAndGlyphs">Abschnitt1</text>
<path d="M1098 442.0 L1102.8 447.20000000000005 L1107.6 442.0" fill="none" stroke="#f26e22" stroke-width="1.3"/>
<text x="1117.4" y="449.9" font-size="15" fill="#111" font-weight="bold" textLength="142.3" lengthAdjust="spacingAndGlyphs">Definition der Ebene</text>
<text x="1117.4" y="480" font-size="15" fill="#222" textLength="136.2" lengthAdjust="spacingAndGlyphs">Definition der Ebene</text>
<rect x="1344" y="462.4" width="25" height="23.7" fill="#d0d0d0" />
<path d="M1272 469.8 L1286 469.8 L1286 483.8 L1272 483.8 Z" fill="#fff" stroke="#111" stroke-width="1.2" stroke-linejoin="round"/>
<path d="M1272 469.8 L1277 464.8 L1291 464.8 L1286 469.8 Z" fill="#f26e22" stroke="#111" stroke-width="1.2" stroke-linejoin="round"/>
<path d="M1286 469.8 L1291 464.8 L1291 478.8 L1286 483.8 Z" fill="#fff" stroke="#111" stroke-width="1.2" stroke-linejoin="round"/>
<path d="M1297 469.8 L1311 469.8 L1311 483.8 L1297 483.8 Z" fill="#f26e22" stroke="#111" stroke-width="1.2" stroke-linejoin="round"/>
<path d="M1297 469.8 L1302 464.8 L1316 464.8 L1311 469.8 Z" fill="#fff" stroke="#111" stroke-width="1.2" stroke-linejoin="round"/>
<path d="M1311 469.8 L1316 464.8 L1316 478.8 L1311 483.8 Z" fill="#fff" stroke="#111" stroke-width="1.2" stroke-linejoin="round"/>
<path d="M1322 469.8 L1336 469.8 L1336 483.8 L1322 483.8 Z" fill="#fff" stroke="#111" stroke-width="1.2" stroke-linejoin="round"/>
<path d="M1322 469.8 L1327 464.8 L1341 464.8 L1336 469.8 Z" fill="#fff" stroke="#111" stroke-width="1.2" stroke-linejoin="round"/>
<path d="M1336 469.8 L1341 464.8 L1341 478.8 L1336 483.8 Z" fill="#f26e22" stroke="#111" stroke-width="1.2" stroke-linejoin="round"/>
<path d="M1347 469.8 L1361 469.8 L1361 483.8 L1347 483.8 Z" fill="#d4d4d4" stroke="#111" stroke-width="1.2" stroke-linejoin="round"/>
<path d="M1347 469.8 L1352 464.8 L1366 464.8 L1361 469.8 Z" fill="#c8c8c8" stroke="#111" stroke-width="1.2" stroke-linejoin="round"/>
<path d="M1361 469.8 L1366 464.8 L1366 478.8 L1361 483.8 Z" fill="#c8c8c8" stroke="#111" stroke-width="1.2" stroke-linejoin="round"/>
<path d="M1352.8 472.0 L1364 468.0 L1359.7 478.0 Z" fill="#f26e22"/>
<rect x="1269.5" y="492.9" width="202" height="23.300000000000068" fill="#fff" stroke="#dadada" stroke-width="1"/>
<text x="1276" y="509.90000000000003" font-size="15" fill="#222">1,00</text>
<text x="1117.4" y="510.20000000000005" font-size="15" fill="#222" textLength="34.4" lengthAdjust="spacingAndGlyphs">X [m]</text>
<rect x="1269.5" y="522.8" width="202" height="22.700000000000045" fill="#fff" stroke="#dadada" stroke-width="1"/>
<text x="1276" y="539.2" font-size="15" fill="#222">-1,00</text>
<text x="1117.4" y="539.5" font-size="15" fill="#222" textLength="33.5" lengthAdjust="spacingAndGlyphs">Y [m]</text>
<rect x="1269.5" y="552.9" width="202" height="22.800000000000068" fill="#fff" stroke="#dadada" stroke-width="1"/>
<text x="1276" y="569.4000000000001" font-size="15" fill="#222">0,00</text>
<text x="1117.4" y="569.7" font-size="15" fill="#222" textLength="34.4" lengthAdjust="spacingAndGlyphs">Z [m]</text>
<path d="M1098 607.1 L1102.8 612.3000000000001 L1107.6 607.1" fill="none" stroke="#f26e22" stroke-width="1.3"/>
<text x="1117.4" y="614.8" font-size="15" fill="#111" font-weight="bold" textLength="56.0" lengthAdjust="spacingAndGlyphs">Position</text>
<rect x="1269.5" y="627.8" width="202" height="23.5" fill="#fff" stroke="#dadada" stroke-width="1"/>
<text x="1276" y="645.0" font-size="15" fill="#222">SB1</text>
<path d="M1454.5 636.75 L1459.9 642.05 L1465.3 636.75" fill="none" stroke="#222" stroke-width="1.3"/>
<text x="1117.4" y="645.3" font-size="15" fill="#222" textLength="40.1" lengthAdjust="spacingAndGlyphs">Haupt</text>
<rect x="1269.5" y="657.7" width="202" height="23.399999999999977" fill="#fff" stroke="#dadada" stroke-width="1"/>
<text x="1276" y="674.8000000000001" font-size="15" fill="#222">1</text>
<path d="M1454.5 666.6000000000001 L1459.9 671.9000000000001 L1465.3 666.6000000000001" fill="none" stroke="#222" stroke-width="1.3"/>
<text x="1117.4" y="675.1" font-size="15" fill="#222" textLength="43.1" lengthAdjust="spacingAndGlyphs">Fläche</text>
<rect x="1269.5" y="687.9" width="202" height="23.100000000000023" fill="#fff" stroke="#dadada" stroke-width="1"/>
<text x="1276" y="704.7" font-size="15" fill="#222">1</text>
<path d="M1454.5 696.6500000000001 L1459.9 701.95 L1465.3 696.6500000000001" fill="none" stroke="#222" stroke-width="1.3"/>
<text x="1117.4" y="705.0" font-size="15" fill="#222" textLength="37.6" lengthAdjust="spacingAndGlyphs">Kante</text>
<rect x="1269.5" y="717.8" width="202" height="23.40000000000009" fill="#fff" stroke="#dadada" stroke-width="1"/>
<text x="1276" y="734.9000000000001" font-size="15" fill="#222">0,00</text>
<text x="1117.4" y="735.2" font-size="15" fill="#222" textLength="34.4" lengthAdjust="spacingAndGlyphs">X [m]</text>
<rect x="1269.5" y="748.0" width="202" height="22.5" fill="#fff" stroke="#dadada" stroke-width="1"/>
<text x="1276" y="764.2" font-size="15" fill="#222">0,00</text>
<text x="1117.4" y="764.5" font-size="15" fill="#222" textLength="33.5" lengthAdjust="spacingAndGlyphs">Y [m]</text>
<rect x="1269.5" y="777.8" width="202" height="22.700000000000045" fill="#fff" stroke="#dadada" stroke-width="1"/>
<text x="1276" y="794.2" font-size="15" fill="#222">0,00</text>
<text x="1117.4" y="794.5" font-size="15" fill="#222" textLength="34.4" lengthAdjust="spacingAndGlyphs">Z [m]</text>
<path d="M1098 832.4 L1102.8 837.6 L1107.6 832.4" fill="none" stroke="#f26e22" stroke-width="1.3"/>
<text x="1117.4" y="840.2" font-size="15" fill="#111" font-weight="bold" textLength="49.2" lengthAdjust="spacingAndGlyphs">Bericht</text>
<text x="1117.4" y="870.4" font-size="15" fill="#222" textLength="122.2" lengthAdjust="spacingAndGlyphs">Im Bericht drucken</text>
<rect x="1269.3" y="857.6" width="14.6" height="13.6" fill="#fff" stroke="#333" stroke-width="1.1"/>
<path d="M1272.5 864.5 L1275.5 867.5 L1281 861.5" fill="none" stroke="#f26e22" stroke-width="1.5"/>
<rect x="1077" y="909.1" width="408" height="65.4" fill="#e6e6e6" />
<rect x="1092" y="924.4" width="122.8" height="34.2" fill="#f08749" />
<rect x="1220.3" y="924.4" width="121.1" height="34.2" fill="#f08749" />
<rect x="1346.9" y="924.4" width="122.9" height="34.2" fill="#b4b4b4" />
<text x="1112.7" y="948.8" font-size="18" fill="#fff" textLength="81.4" lengthAdjust="spacingAndGlyphs">Anwenden</text>
<text x="1269.5" y="948.8" font-size="18" fill="#fff" textLength="24.0" lengthAdjust="spacingAndGlyphs">OK</text>
<text x="1366.9" y="948.8" font-size="18" fill="#fff" textLength="83.5" lengthAdjust="spacingAndGlyphs">Abbrechen</text>
<rect x="1336.6" y="451.5" width="45.5" height="39.39999999999998" rx="3" fill="none" stroke="#ec393d" stroke-width="4"/>
<rect x="1259" y="516.4" width="61.59999999999991" height="35.60000000000002" rx="3" fill="none" stroke="#ec393d" stroke-width="4"/>
<rect x="1255.2" y="843.9" width="43.5" height="39.39999999999998" rx="3" fill="none" stroke="#ec393d" stroke-width="4"/>
<circle cx="1417.6" cy="472.59999999999997" r="21.5" fill="#b02a2e" opacity="0.5"/>
<circle cx="1417.6" cy="471.4" r="21.2" fill="#ec393d"/>
<text x="1418.5" y="483.2" font-size="30" fill="#6a1518" fill-opacity="0.4" text-anchor="middle">1</text>
<text x="1417.6" y="482.2" font-size="30" fill="#fff" stroke="#fff" stroke-width="0.4" text-anchor="middle">1</text>
<circle cx="1358.4" cy="536.6" r="21.5" fill="#b02a2e" opacity="0.5"/>
<circle cx="1358.4" cy="535.4" r="21.2" fill="#ec393d"/>
<text x="1359.3000000000002" y="547.1999999999999" font-size="30" fill="#6a1518" fill-opacity="0.4" text-anchor="middle">2</text>
<text x="1358.4" y="546.1999999999999" font-size="30" fill="#fff" stroke="#fff" stroke-width="0.4" text-anchor="middle">2</text>
<circle cx="1336.4" cy="863.8000000000001" r="21.5" fill="#b02a2e" opacity="0.5"/>
<circle cx="1336.4" cy="862.6" r="21.2" fill="#ec393d"/>
<text x="1337.3000000000002" y="874.4" font-size="30" fill="#6a1518" fill-opacity="0.4" text-anchor="middle">3</text>
<text x="1336.4" y="873.4" font-size="30" fill="#fff" stroke="#fff" stroke-width="0.4" text-anchor="middle">3</text>
<circle cx="1320.4" cy="938.1" r="21.5" fill="#b02a2e" opacity="0.5"/>
<circle cx="1320.4" cy="936.9" r="21.2" fill="#ec393d"/>
<text x="1321.3000000000002" y="948.6999999999999" font-size="30" fill="#6a1518" fill-opacity="0.4" text-anchor="middle">4</text>
<text x="1320.4" y="947.6999999999999" font-size="30" fill="#fff" stroke="#fff" stroke-width="0.4" text-anchor="middle">4</text>
<text x="11.2" y="1124.7" font-size="14.5" fill="#e6e6e6" textLength="118.7" lengthAdjust="spacingAndGlyphs">Bemessungsnorm:</text>
<text x="133.6" y="1124.7" font-size="14.5" fill="#fff" font-weight="bold" textLength="18.3" lengthAdjust="spacingAndGlyphs">EN</text>
<text x="173.5" y="1124.7" font-size="14.5" fill="#e6e6e6" textLength="61.3" lengthAdjust="spacingAndGlyphs">Rundung:</text>
<text x="237.6" y="1124.7" font-size="14.5" fill="#fff" font-weight="bold" textLength="57.7" lengthAdjust="spacingAndGlyphs">Metrisch</text>
<text x="316.9" y="1124.7" font-size="14.5" fill="#e6e6e6" textLength="144.9" lengthAdjust="spacingAndGlyphs">Darstellungseinheiten:</text>
<text x="465.4" y="1124.7" font-size="14.5" fill="#fff" font-weight="bold" textLength="57.7" lengthAdjust="spacingAndGlyphs">Metrisch</text></svg></body></html>
